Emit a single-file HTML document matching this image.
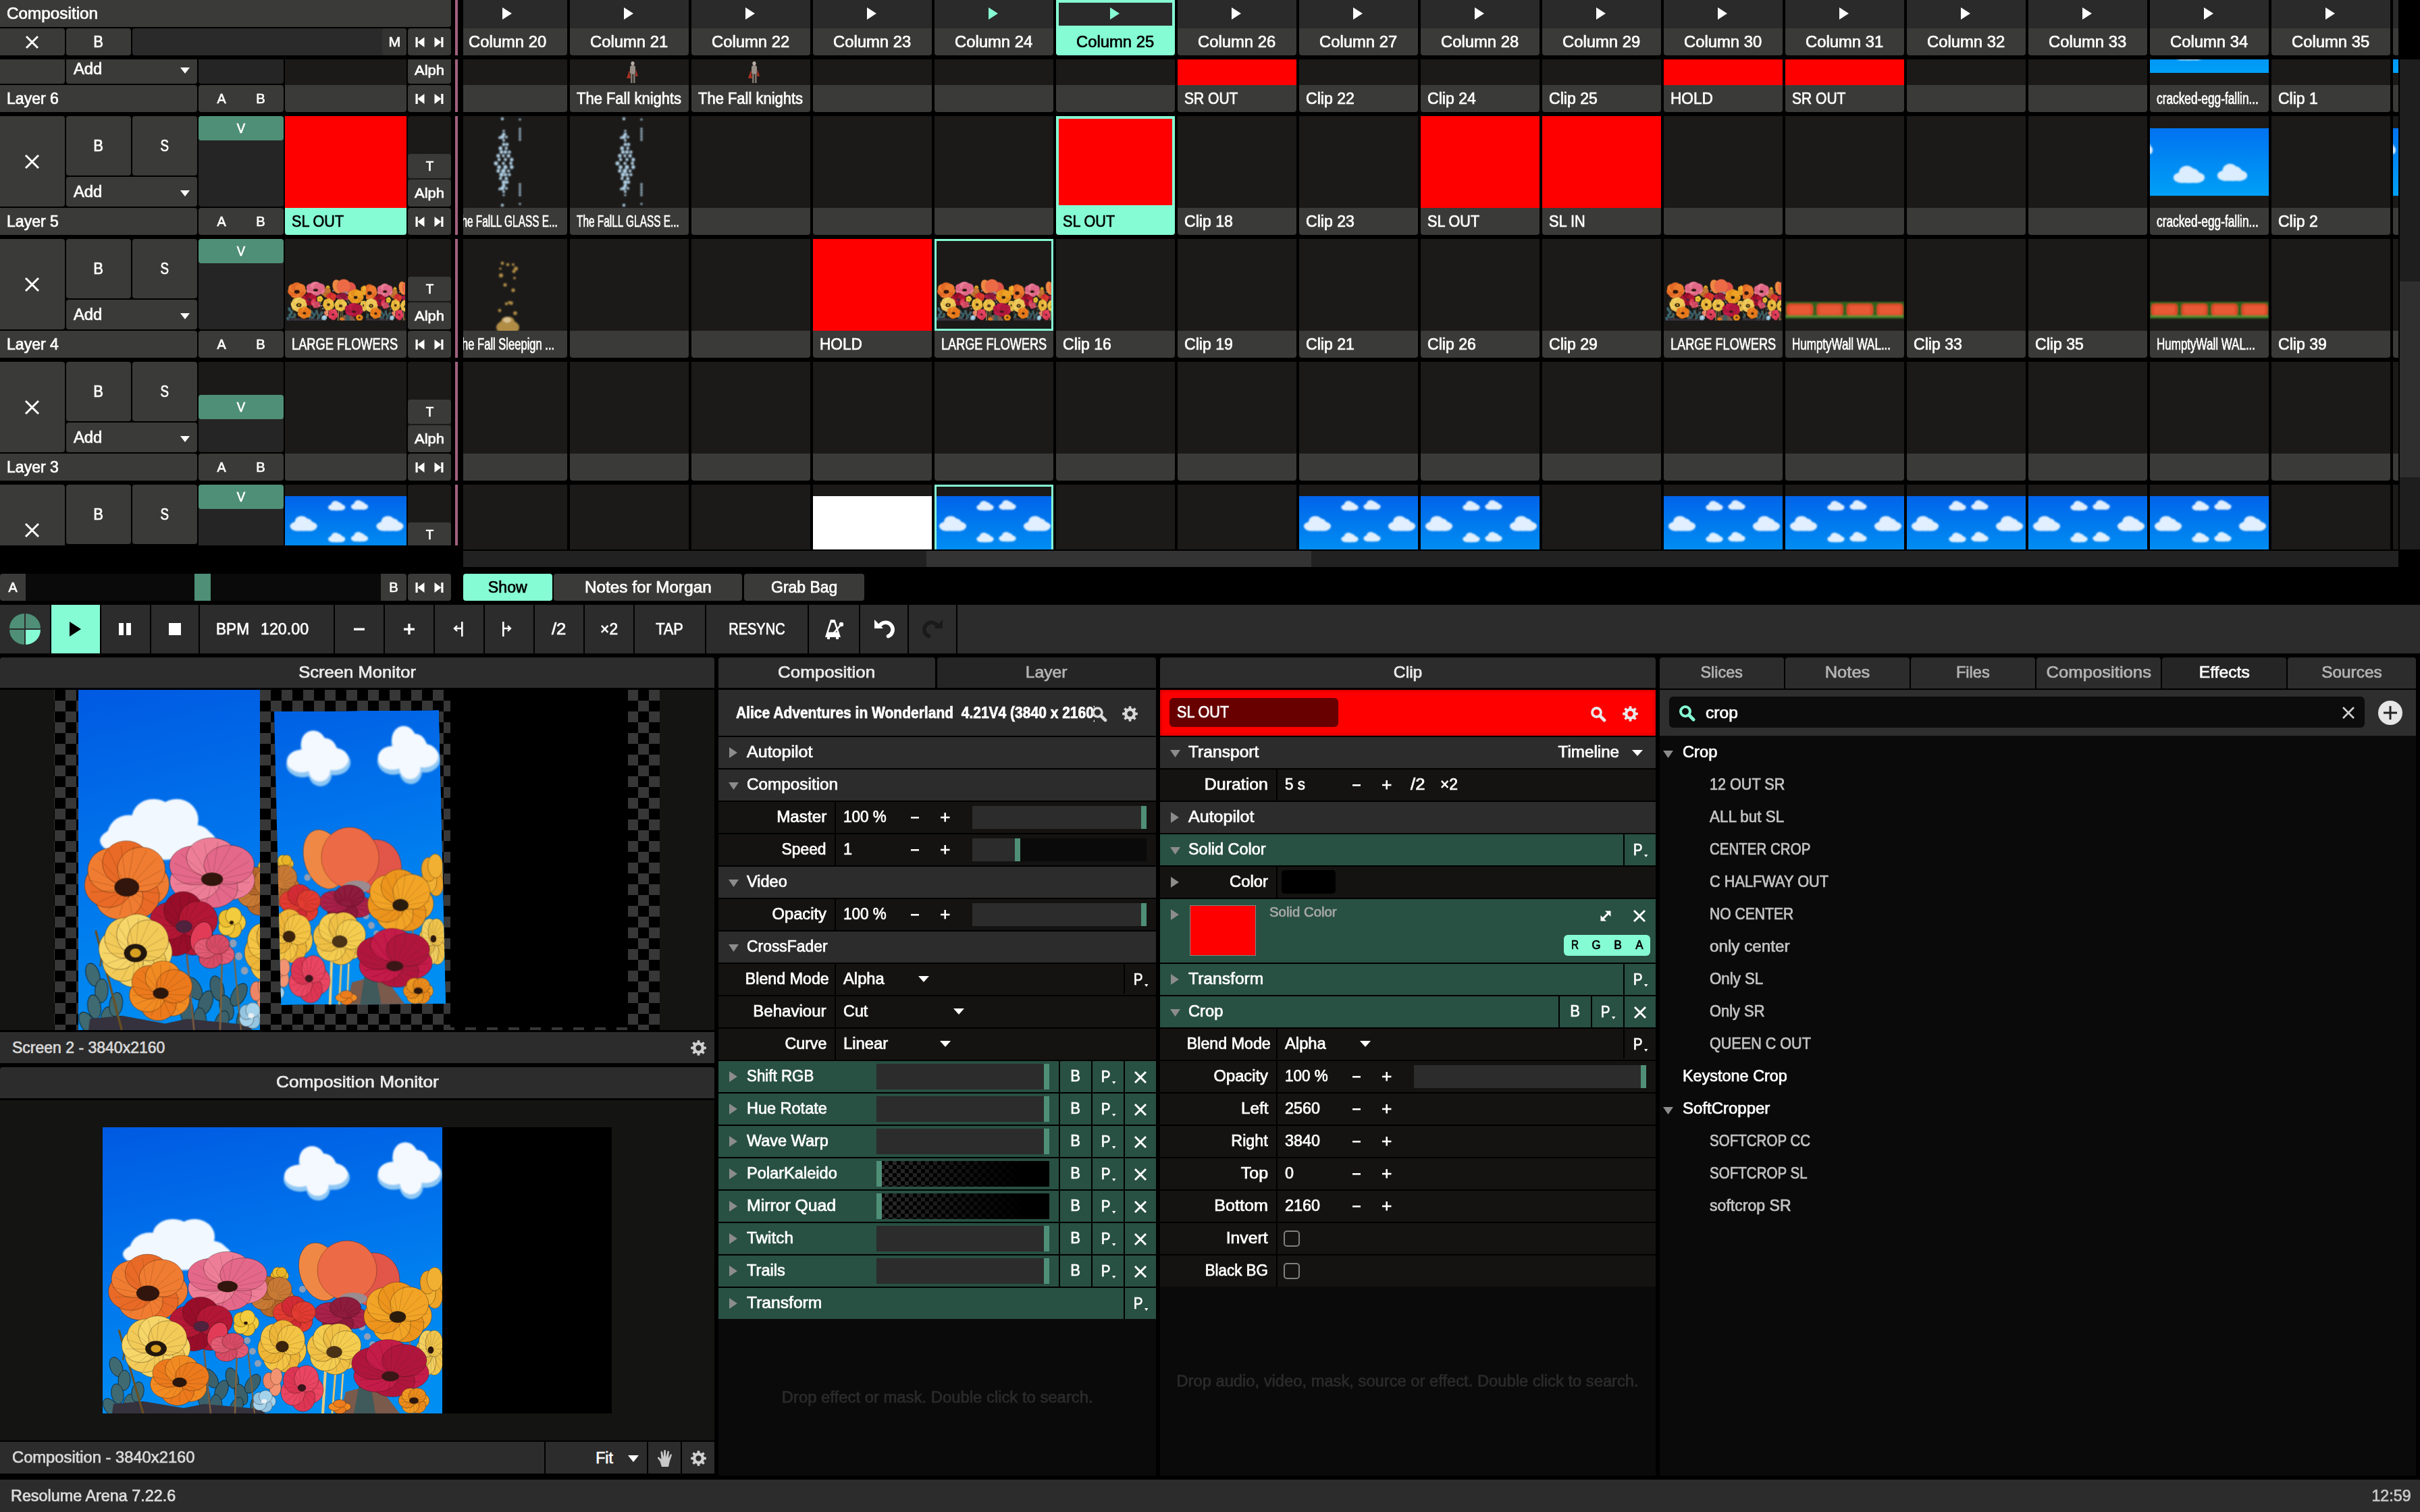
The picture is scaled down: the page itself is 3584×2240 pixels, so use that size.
<!DOCTYPE html><html><head><meta charset="utf-8"><title>Resolume Arena</title><style>

html,body{margin:0;padding:0;background:#000;}
body{width:3584px;height:2240px;position:relative;overflow:hidden;font-family:"Liberation Sans",sans-serif;font-size:23px;color:#fff;-webkit-text-stroke:0.7px currentColor;}
.a{position:absolute;box-sizing:border-box;}
svg{display:block;overflow:hidden}

</style></head><body>

<svg width="0" height="0" style="position:absolute">
<defs>
<linearGradient id="sky" x1="0" y1="0" x2="0" y2="1"><stop offset="0" stop-color="#0064ea"/><stop offset="1" stop-color="#0098f4"/></linearGradient>
<linearGradient id="sky2" x1="0" y1="0" x2="0" y2="1"><stop offset="0" stop-color="#0072f0"/><stop offset="1" stop-color="#00a0f6"/></linearGradient>
<linearGradient id="skyM" x1="0" y1="0" x2="0.25" y2="1"><stop offset="0" stop-color="#005ae2"/><stop offset="0.5" stop-color="#0074ec"/><stop offset="1" stop-color="#008ef2"/></linearGradient>
<filter id="b1" x="-20%" y="-20%" width="140%" height="140%"><feGaussianBlur stdDeviation="1"/></filter>
<filter id="b2" x="-20%" y="-20%" width="140%" height="140%"><feGaussianBlur stdDeviation="2.2"/></filter>
<filter id="b06" x="-20%" y="-20%" width="140%" height="140%"><feGaussianBlur stdDeviation="0.6"/></filter>
<pattern id="chk" width="32" height="32" patternUnits="userSpaceOnUse" x="1" y="0"><rect width="32" height="32" fill="#000"/><rect x="16" width="16" height="16" fill="#373737"/><rect y="16" width="16" height="16" fill="#373737"/></pattern>
<pattern id="chk2" width="12" height="12" patternUnits="userSpaceOnUse"><rect width="12" height="12" fill="#000"/><rect width="6" height="6" fill="#2c2c2c"/><rect x="6" y="6" width="6" height="6" fill="#2c2c2c"/></pattern>
<linearGradient id="fadeblk" x1="0" y1="0" x2="1" y2="0"><stop offset="0" stop-color="#000" stop-opacity="0"/><stop offset="0.85" stop-color="#000" stop-opacity="1"/></linearGradient>
<symbol id="flw" viewBox="0 0 503 424" preserveAspectRatio="none"><g filter="url(#b06)"><g><ellipse cx="20" cy="355" rx="9" ry="15" fill="#3f6a72" stroke="#14242a" stroke-width="0.8" transform="rotate(-20.96282983264869 20 355)"/><ellipse cx="32" cy="375" rx="9" ry="15" fill="#3f6a72" stroke="#14242a" stroke-width="0.8" transform="rotate(3.538338023676147 32 375)"/><ellipse cx="22" cy="395" rx="9" ry="15" fill="#3f6a72" stroke="#14242a" stroke-width="0.8" transform="rotate(-10.403586676153658 22 395)"/><ellipse cx="40" cy="410" rx="9" ry="15" fill="#3f6a72" stroke="#14242a" stroke-width="0.8" transform="rotate(8.313603087695554 40 410)"/><ellipse cx="52" cy="392" rx="9" ry="15" fill="#3f6a72" stroke="#14242a" stroke-width="0.8" transform="rotate(10.057624328644323 52 392)"/><ellipse cx="12" cy="415" rx="9" ry="15" fill="#3f6a72" stroke="#14242a" stroke-width="0.8" transform="rotate(-34.75769126081495 12 415)"/><ellipse cx="160" cy="372" rx="9" ry="16" fill="#3a626c" stroke="#14242a" stroke-width="0.8" transform="rotate(-34.07824059115881 160 372)"/><ellipse cx="176" cy="390" rx="9" ry="16" fill="#3a626c" stroke="#14242a" stroke-width="0.8" transform="rotate(23.6228357467522 176 390)"/><ellipse cx="192" cy="372" rx="9" ry="16" fill="#3a626c" stroke="#14242a" stroke-width="0.8" transform="rotate(-16.845218997039463 192 372)"/><ellipse cx="205" cy="396" rx="9" ry="16" fill="#3a626c" stroke="#14242a" stroke-width="0.8" transform="rotate(-18.596832726731254 205 396)"/><ellipse cx="222" cy="380" rx="9" ry="16" fill="#3a626c" stroke="#14242a" stroke-width="0.8" transform="rotate(34.6951384857324 222 380)"/><ellipse cx="168" cy="412" rx="9" ry="16" fill="#3a626c" stroke="#14242a" stroke-width="0.8" transform="rotate(-2.081554473428646 168 412)"/><ellipse cx="198" cy="415" rx="9" ry="16" fill="#3a626c" stroke="#14242a" stroke-width="0.8" transform="rotate(23.55230158920721 198 415)"/><ellipse cx="150" cy="400" rx="9" ry="16" fill="#3a626c" stroke="#14242a" stroke-width="0.8" transform="rotate(-1.6552753910465512 150 400)"/><ellipse cx="228" cy="412" rx="9" ry="16" fill="#3a626c" stroke="#14242a" stroke-width="0.8" transform="rotate(9.734769838091339 228 412)"/><path d="M14 424 L16 410 L60 406 L120 416 L150 410 L240 418 L240 424 Z" fill="#34303c"/><path d="M24 300 L60 424" stroke="#6a5020" stroke-width="3" fill="none"/><path d="M34 318 L30 345" stroke="#6a5020" stroke-width="2" fill="none"/><path d="M150 330 L160 424" stroke="#7a5a40" stroke-width="2.5" fill="none"/><path d="M200 300 L196 424" stroke="#80603c" stroke-width="2.5" fill="none"/><path d="M215 330 L225 424" stroke="#80603c" stroke-width="2" fill="none"/><path d="M330 360 L326 424" stroke="#e8cc80" stroke-width="4" fill="none"/><path d="M345 360 L340 424" stroke="#e0c070" stroke-width="3" fill="none"/><path d="M356 365 L352 424" stroke="#e8cc80" stroke-width="2.5" fill="none"/><path d="M452 300 L470 424" stroke="#907060" stroke-width="2.5" fill="none"/><path d="M352 424 L360 392 L392 384 L420 398 L440 424 Z" fill="#7a5a4c"/><path d="M372 424 L380 380 L396 376 L404 424 Z" fill="#3f5a5c"/><circle cx="208" cy="300" r="5" fill="#b0a4a8" opacity="0.8"/><circle cx="214" cy="316" r="5" fill="#b0a4a8" opacity="0.8"/><circle cx="222" cy="332" r="5" fill="#b0a4a8" opacity="0.8"/><circle cx="230" cy="350" r="5" fill="#b0a4a8" opacity="0.8"/><circle cx="392" cy="310" r="5" fill="#b0a4a8" opacity="0.8"/><circle cx="384" cy="296" r="5" fill="#b0a4a8" opacity="0.8"/><circle cx="400" cy="322" r="5" fill="#b0a4a8" opacity="0.8"/><circle cx="296" cy="240" r="5" fill="#b0a4a8" opacity="0.8"/><g stroke="#2a140c" stroke-width="0.7" stroke-opacity="0.55"><ellipse cx="268.0" cy="220.0" rx="7.5" ry="7.5" fill="#f0c030"/><ellipse cx="265.0" cy="225.2" rx="7.5" ry="7.5" fill="#e8b428"/><ellipse cx="259.0" cy="225.2" rx="7.5" ry="7.5" fill="#f0c030"/><ellipse cx="256.0" cy="220.0" rx="7.5" ry="7.5" fill="#e8b428"/><ellipse cx="259.0" cy="214.8" rx="7.5" ry="7.5" fill="#f0c030"/><ellipse cx="265.0" cy="214.8" rx="7.5" ry="7.5" fill="#e8b428"/></g><g stroke="#2a140c" stroke-width="0.7" stroke-opacity="0.55"><ellipse cx="265.6" cy="255.4" rx="18.6" ry="17.4" fill="#c87a34"/><ellipse cx="250.7" cy="263.7" rx="18.6" ry="17.4" fill="#b86a2c"/><ellipse cx="237.7" cy="253.1" rx="18.6" ry="17.4" fill="#c87a34"/><ellipse cx="244.4" cy="238.2" rx="18.6" ry="17.4" fill="#b86a2c"/><ellipse cx="261.6" cy="239.6" rx="18.6" ry="17.4" fill="#c87a34"/></g><path d="M257.9 253.6 L276.8 264.9 M256.3 255.2 L269.9 271.9 M254.1 256.3 L260.8 276.3 M251.7 256.6 L250.6 277.6 M249.3 256.1 L240.7 275.5 M247.2 254.9 L232.1 270.3 M245.7 253.0 L225.8 262.7 M245.0 250.8 L222.8 253.5 M245.1 248.6 L223.3 244.0 M246.1 246.4 L227.2 235.1 M247.7 244.8 L234.1 228.1 M249.9 243.7 L243.2 223.7 M252.3 243.4 L253.4 222.4 M254.7 243.9 L263.3 224.5 M256.8 245.1 L271.9 229.7 M258.3 247.0 L278.2 237.3 M259.0 249.2 L281.2 246.5 M258.9 251.4 L280.7 256.0 " stroke="#2a140c" stroke-width="0.6" stroke-opacity="0.3" fill="none"/><g stroke="#2a140c" stroke-width="0.7" stroke-opacity="0.55"><ellipse cx="498.2" cy="238.0" rx="11.6" ry="17.4" fill="#f2b030"/><ellipse cx="491.8" cy="251.1" rx="11.6" ry="17.4" fill="#eca228"/><ellipse cx="481.6" cy="246.1" rx="11.6" ry="17.4" fill="#f2b030"/><ellipse cx="481.6" cy="229.9" rx="11.6" ry="17.4" fill="#eca228"/><ellipse cx="491.8" cy="224.9" rx="11.6" ry="17.4" fill="#f2b030"/></g><g stroke="#2a140c" stroke-width="0.7" stroke-opacity="0.55"><ellipse cx="496.1" cy="334.0" rx="12.8" ry="19.7" fill="#f4d060"/><ellipse cx="491.1" cy="347.5" rx="12.8" ry="19.7" fill="#efc44c"/><ellipse cx="480.9" cy="347.5" rx="12.8" ry="19.7" fill="#f4d060"/><ellipse cx="475.9" cy="334.0" rx="12.8" ry="19.7" fill="#efc44c"/><ellipse cx="480.9" cy="320.5" rx="12.8" ry="19.7" fill="#f4d060"/><ellipse cx="491.1" cy="320.5" rx="12.8" ry="19.7" fill="#efc44c"/></g><path d="M490.8 331.3 L505.9 339.3 M490.2 333.7 L503.6 349.5 M489.1 335.7 L499.1 357.9 M487.7 337.0 L493.0 363.3 M486.0 337.5 L486.1 365.3 M484.4 337.0 L479.2 363.4 M482.9 335.8 L473.1 358.1 M481.8 333.8 L468.5 349.8 M481.2 331.3 L466.1 339.6 M481.2 328.7 L466.1 328.7 M481.8 326.3 L468.4 318.5 M482.9 324.3 L472.9 310.1 M484.3 323.0 L479.0 304.7 M486.0 322.5 L485.9 302.7 M487.6 323.0 L492.8 304.6 M489.1 324.2 L498.9 309.9 M490.2 326.2 L503.5 318.2 M490.8 328.7 L505.9 328.4 " stroke="#2a140c" stroke-width="0.6" stroke-opacity="0.3" fill="none"/><ellipse cx="486.0" cy="330.0" rx="4.4" ry="5.4" fill="#2a1808"/><g stroke="#2a140c" stroke-width="0.7" stroke-opacity="0.5"><ellipse cx="402" cy="226" rx="38" ry="40" fill="#e2544a"/><ellipse cx="322" cy="214" rx="30" ry="44" fill="#f08844" transform="rotate(-18 322 214)"/><ellipse cx="362" cy="212" rx="44" ry="44" fill="#ec6a44"/></g><ellipse cx="371" cy="254" rx="21" ry="9" fill="#9a8c90"/><g stroke="#2a140c" stroke-width="0.7" stroke-opacity="0.55"><ellipse cx="371.6" cy="282.7" rx="23.2" ry="15.7" fill="#a8204a"/><ellipse cx="348.6" cy="290.9" rx="23.2" ry="15.7" fill="#8e1a3c"/><ellipse cx="336.4" cy="275.3" rx="23.2" ry="15.7" fill="#a8204a"/><ellipse cx="359.4" cy="267.1" rx="23.2" ry="15.7" fill="#8e1a3c"/></g><path d="M361.8 281.7 L386.8 290.2 M360.0 283.3 L379.1 297.1 M357.4 284.5 L368.4 301.9 M354.5 284.9 L356.0 303.8 M351.4 284.7 L343.3 302.8 M348.7 283.7 L331.9 298.9 M346.6 282.2 L323.2 292.6 M345.4 280.3 L318.2 284.6 M345.3 278.3 L317.5 276.0 M346.2 276.3 L321.2 267.8 M348.0 274.7 L328.9 260.9 M350.6 273.5 L339.6 256.1 M353.5 273.1 L352.0 254.2 M356.6 273.3 L364.7 255.2 M359.3 274.3 L376.1 259.1 M361.4 275.8 L384.8 265.4 M362.6 277.7 L389.8 273.4 M362.7 279.7 L390.5 282.0 " stroke="#2a140c" stroke-width="0.6" stroke-opacity="0.3" fill="none"/><g stroke="#2a140c" stroke-width="0.7" stroke-opacity="0.55"><ellipse cx="292.9" cy="287.7" rx="18.0" ry="15.7" fill="#e23a30"/><ellipse cx="276.1" cy="288.3" rx="18.0" ry="15.7" fill="#d42c34"/><ellipse cx="270.3" cy="274.7" rx="18.0" ry="15.7" fill="#e23a30"/><ellipse cx="283.4" cy="265.6" rx="18.0" ry="15.7" fill="#d42c34"/><ellipse cx="297.4" cy="273.7" rx="18.0" ry="15.7" fill="#e23a30"/></g><path d="M287.3 283.2 L297.7 299.8 M285.0 283.9 L288.3 302.6 M282.7 283.8 L278.4 302.4 M280.5 283.1 L269.2 299.2 M278.7 281.7 L261.7 293.5 M277.5 279.9 L257.0 286.0 M277.2 277.9 L255.5 277.4 M277.6 275.8 L257.4 269.0 M278.9 274.1 L262.6 261.6 M280.7 272.8 L270.3 256.2 M283.0 272.1 L279.7 253.4 M285.3 272.2 L289.6 253.6 M287.5 272.9 L298.8 256.8 M289.3 274.3 L306.3 262.5 M290.5 276.1 L311.0 270.0 M290.8 278.1 L312.5 278.6 M290.4 280.2 L310.6 287.0 M289.1 281.9 L305.4 294.4 " stroke="#2a140c" stroke-width="0.6" stroke-opacity="0.3" fill="none"/><g stroke="#2a140c" stroke-width="0.7" stroke-opacity="0.55"><ellipse cx="459.1" cy="279.0" rx="28.4" ry="25.5" fill="#f2a426"/><ellipse cx="447.3" cy="293.0" rx="28.4" ry="25.5" fill="#ec941e"/><ellipse cx="427.7" cy="293.4" rx="28.4" ry="25.5" fill="#f2a426"/><ellipse cx="415.2" cy="280.0" rx="28.4" ry="25.5" fill="#ec941e"/><ellipse cx="419.0" cy="262.8" rx="28.4" ry="25.5" fill="#f2a426"/><ellipse cx="436.5" cy="254.8" rx="28.4" ry="25.5" fill="#ec941e"/><ellipse cx="454.3" cy="262.0" rx="28.4" ry="25.5" fill="#f2a426"/></g><path d="M447.1 284.5 L479.0 289.6 M445.1 287.4 L470.9 301.7 M442.2 289.5 L458.7 310.5 M438.6 290.6 L443.9 315.0 M434.9 290.5 L428.2 314.7 M431.4 289.3 L413.6 309.6 M428.6 287.1 L401.9 300.4 M426.8 284.1 L394.3 288.0 M426.2 280.8 L391.9 274.2 M426.9 277.5 L395.0 260.4 M428.9 274.6 L403.1 248.3 M431.8 272.5 L415.3 239.5 M435.4 271.4 L430.1 235.0 M439.1 271.5 L445.8 235.3 M442.6 272.7 L460.4 240.4 M445.4 274.9 L472.1 249.6 M447.2 277.9 L479.7 262.0 M447.8 281.2 L482.1 275.8 " stroke="#2a140c" stroke-width="0.6" stroke-opacity="0.3" fill="none"/><ellipse cx="437.0" cy="281.0" rx="12.2" ry="8.8" fill="#2c1c10"/><g stroke="#2a140c" stroke-width="0.7" stroke-opacity="0.55"><ellipse cx="209.2" cy="237.3" rx="34.8" ry="24.4" fill="#ee7e98"/><ellipse cx="185.7" cy="247.3" rx="34.8" ry="24.4" fill="#e4688a"/><ellipse cx="161.4" cy="238.1" rx="34.8" ry="24.4" fill="#ee7e98"/><ellipse cx="160.8" cy="218.7" rx="34.8" ry="24.4" fill="#e4688a"/><ellipse cx="184.3" cy="208.7" rx="34.8" ry="24.4" fill="#ee7e98"/><ellipse cx="208.6" cy="217.9" rx="34.8" ry="24.4" fill="#e4688a"/></g><path d="M195.3 241.7 L228.3 252.0 M191.9 243.9 L213.9 260.9 M187.7 245.1 L196.1 265.8 M183.1 245.1 L176.9 266.2 M178.7 244.1 L158.8 262.0 M175.1 242.1 L143.7 253.7 M172.7 239.4 L133.7 242.2 M171.8 236.3 L129.8 229.1 M172.5 233.1 L132.6 215.8 M174.7 230.3 L141.7 204.0 M178.1 228.1 L156.1 195.1 M182.3 226.9 L173.9 190.2 M186.9 226.9 L193.1 189.8 M191.3 227.9 L211.2 194.0 M194.9 229.9 L226.3 202.3 M197.3 232.6 L236.3 213.8 M198.2 235.7 L240.2 226.9 M197.5 238.9 L237.4 240.2 " stroke="#2a140c" stroke-width="0.6" stroke-opacity="0.3" fill="none"/><ellipse cx="185.0" cy="236.0" rx="15.0" ry="8.4" fill="#30180c"/><g stroke="#2a140c" stroke-width="0.7" stroke-opacity="0.55"><ellipse cx="92.7" cy="242.4" rx="33.1" ry="27.8" fill="#f07c30"/><ellipse cx="78.9" cy="257.7" rx="33.1" ry="27.8" fill="#e86a26"/><ellipse cx="56.2" cy="258.1" rx="33.1" ry="27.8" fill="#f07c30"/><ellipse cx="41.6" cy="243.4" rx="33.1" ry="27.8" fill="#e86a26"/><ellipse cx="46.1" cy="224.7" rx="33.1" ry="27.8" fill="#f07c30"/><ellipse cx="66.4" cy="215.9" rx="33.1" ry="27.8" fill="#e86a26"/><ellipse cx="87.1" cy="223.8" rx="33.1" ry="27.8" fill="#f07c30"/></g><path d="M78.7 249.8 L115.9 254.0 M76.4 253.0 L106.5 267.1 M73.0 255.3 L92.3 276.7 M68.9 256.4 L75.0 281.6 M64.6 256.4 L56.8 281.3 M60.5 255.0 L39.8 275.8 M57.2 252.6 L26.1 265.7 M55.1 249.4 L17.4 252.2 M54.5 245.8 L14.6 237.1 M55.3 242.2 L18.1 222.0 M57.6 239.0 L27.5 208.9 M61.0 236.7 L41.7 199.3 M65.1 235.6 L59.0 194.4 M69.4 235.6 L77.2 194.7 M73.5 237.0 L94.2 200.2 M76.8 239.4 L107.9 210.3 M78.9 242.6 L116.6 223.8 M79.5 246.2 L119.4 238.9 " stroke="#2a140c" stroke-width="0.6" stroke-opacity="0.3" fill="none"/><ellipse cx="67.0" cy="246.0" rx="17.1" ry="11.5" fill="#30180c"/><g stroke="#2a140c" stroke-width="0.7" stroke-opacity="0.55"><ellipse cx="159.2" cy="307.4" rx="26.7" ry="23.2" fill="#b41434"/><ellipse cx="134.3" cy="308.3" rx="26.7" ry="23.2" fill="#98102c"/><ellipse cx="125.6" cy="288.1" rx="26.7" ry="23.2" fill="#b41434"/><ellipse cx="145.1" cy="274.6" rx="26.7" ry="23.2" fill="#98102c"/><ellipse cx="165.8" cy="286.6" rx="26.7" ry="23.2" fill="#b41434"/></g><path d="M150.9 302.7 L166.3 325.3 M147.5 303.7 L152.4 329.4 M144.0 303.6 L137.7 329.1 M140.7 302.5 L124.0 324.4 M138.1 300.5 L113.0 316.0 M136.4 297.8 L105.9 304.8 M135.9 294.8 L103.7 292.2 M136.6 291.8 L106.6 279.6 M138.4 289.2 L114.2 268.7 M141.1 287.3 L125.7 260.7 M144.5 286.3 L139.6 256.6 M148.0 286.4 L154.3 256.9 M151.3 287.5 L168.0 261.6 M153.9 289.5 L179.0 270.0 M155.6 292.2 L186.1 281.2 M156.1 295.2 L188.3 293.8 M155.4 298.2 L185.4 306.4 M153.6 300.8 L177.8 317.3 " stroke="#2a140c" stroke-width="0.6" stroke-opacity="0.3" fill="none"/><ellipse cx="146.0" cy="295.0" rx="11.5" ry="8.0" fill="#50203c"/><ellipse cx="170" cy="308" rx="14" ry="20" fill="#e23a58" stroke="#2a140c" stroke-width="0.6" transform="rotate(25 170 308)"/><g stroke="#2a140c" stroke-width="0.7" stroke-opacity="0.55"><ellipse cx="220.7" cy="290.0" rx="11.0" ry="11.0" fill="#f2cc3c"/><ellipse cx="214.7" cy="298.3" rx="11.0" ry="11.0" fill="#ecc030"/><ellipse cx="204.9" cy="295.1" rx="11.0" ry="11.0" fill="#f2cc3c"/><ellipse cx="204.9" cy="284.9" rx="11.0" ry="11.0" fill="#ecc030"/><ellipse cx="214.7" cy="281.7" rx="11.0" ry="11.0" fill="#f2cc3c"/></g><ellipse cx="212.0" cy="290.0" rx="2.8" ry="2.3" fill="#2a1808"/><g stroke="#2a140c" stroke-width="0.7" stroke-opacity="0.55"><ellipse cx="199.9" cy="329.8" rx="16.2" ry="12.2" fill="#e45c74"/><ellipse cx="183.0" cy="334.9" rx="16.2" ry="12.2" fill="#d84c66"/><ellipse cx="176.1" cy="322.2" rx="16.2" ry="12.2" fill="#e45c74"/><ellipse cx="193.0" cy="317.1" rx="16.2" ry="12.2" fill="#d84c66"/></g><path d="M193.2 328.5 L209.7 336.4 M191.7 329.7 L203.6 341.4 M189.8 330.4 L195.7 344.4 M187.7 330.6 L186.8 345.3 M185.6 330.3 L178.1 343.8 M183.8 329.4 L170.5 340.2 M182.5 328.1 L165.1 334.9 M181.9 326.6 L162.5 328.5 M182.0 325.0 L162.9 321.8 M182.8 323.5 L166.3 315.6 M184.3 322.3 L172.4 310.6 M186.2 321.6 L180.3 307.6 M188.3 321.4 L189.2 306.7 M190.4 321.7 L197.9 308.2 M192.2 322.6 L205.5 311.8 M193.5 323.9 L210.9 317.1 M194.1 325.4 L213.5 323.5 M194.0 327.0 L213.1 330.2 " stroke="#2a140c" stroke-width="0.6" stroke-opacity="0.3" fill="none"/><g stroke="#2a140c" stroke-width="0.7" stroke-opacity="0.55"><ellipse cx="101.4" cy="327.0" rx="28.4" ry="25.5" fill="#f6d668"/><ellipse cx="93.3" cy="340.7" rx="28.4" ry="25.5" fill="#f2ca58"/><ellipse cx="76.7" cy="345.1" rx="28.4" ry="25.5" fill="#f6d668"/><ellipse cx="61.6" cy="337.8" rx="28.4" ry="25.5" fill="#f2ca58"/><ellipse cx="56.6" cy="323.0" rx="28.4" ry="25.5" fill="#f6d668"/><ellipse cx="64.7" cy="309.3" rx="28.4" ry="25.5" fill="#f2ca58"/><ellipse cx="81.3" cy="304.9" rx="28.4" ry="25.5" fill="#f6d668"/><ellipse cx="96.4" cy="312.2" rx="28.4" ry="25.5" fill="#f2ca58"/></g><path d="M89.4 330.6 L122.4 335.8 M87.8 333.6 L115.7 348.5 M85.1 336.0 L104.6 358.3 M81.7 337.4 L90.3 364.2 M78.0 337.6 L74.7 365.3 M74.4 336.7 L59.6 361.5 M71.3 334.8 L46.9 353.4 M69.2 332.0 L38.0 341.8 M68.3 328.8 L34.1 328.2 M68.6 325.4 L35.6 314.2 M70.2 322.4 L42.3 301.5 M72.9 320.0 L53.4 291.7 M76.3 318.6 L67.7 285.8 M80.0 318.4 L83.3 284.7 M83.6 319.3 L98.4 288.5 M86.7 321.2 L111.1 296.6 M88.8 324.0 L120.0 308.2 M89.7 327.2 L123.9 321.8 " stroke="#2a140c" stroke-width="0.6" stroke-opacity="0.3" fill="none"/><ellipse cx="79.0" cy="328.0" rx="15.9" ry="11.4" fill="#20140c"/><ellipse cx="79.0" cy="328.0" rx="7.6" ry="5.7" fill="#d8a020"/><g stroke="#2a140c" stroke-width="0.7" stroke-opacity="0.55"><ellipse cx="281.4" cy="330.2" rx="20.3" ry="22.0" fill="#f4c444"/><ellipse cx="271.9" cy="341.3" rx="20.3" ry="22.0" fill="#eeb638"/><ellipse cx="257.9" cy="340.1" rx="20.3" ry="22.0" fill="#f4c444"/><ellipse cx="250.1" cy="327.6" rx="20.3" ry="22.0" fill="#eeb638"/><ellipse cx="254.2" cy="313.1" rx="20.3" ry="22.0" fill="#f4c444"/><ellipse cx="267.2" cy="307.6" rx="20.3" ry="22.0" fill="#eeb638"/><ellipse cx="279.3" cy="315.2" rx="20.3" ry="22.0" fill="#f4c444"/></g><path d="M272.9 328.8 L294.7 340.8 M271.3 331.1 L288.0 350.5 M269.0 332.7 L278.6 357.2 M266.4 333.3 L267.7 359.9 M263.8 333.0 L256.6 358.4 M261.4 331.7 L246.7 352.9 M259.5 329.6 L239.0 344.1 M258.5 326.9 L234.6 332.9 M258.4 324.0 L234.0 320.8 M259.1 321.2 L237.3 309.2 M260.7 318.9 L244.0 299.5 M263.0 317.3 L253.4 292.8 M265.6 316.7 L264.3 290.1 M268.2 317.0 L275.4 291.6 M270.6 318.3 L285.3 297.1 M272.5 320.4 L293.0 305.9 M273.5 323.1 L297.4 317.1 M273.6 326.0 L298.0 329.2 " stroke="#2a140c" stroke-width="0.6" stroke-opacity="0.3" fill="none"/><ellipse cx="266.0" cy="325.0" rx="9.6" ry="8.4" fill="#3a2410"/><g stroke="#2a140c" stroke-width="0.7" stroke-opacity="0.55"><ellipse cx="357.8" cy="337.6" rx="22.6" ry="21.5" fill="#f4cc50"/><ellipse cx="344.3" cy="345.0" rx="22.6" ry="21.5" fill="#efc044"/><ellipse cx="329.8" cy="339.6" rx="22.6" ry="21.5" fill="#f4cc50"/><ellipse cx="325.3" cy="325.4" rx="22.6" ry="21.5" fill="#efc044"/><ellipse cx="334.1" cy="313.2" rx="22.6" ry="21.5" fill="#f4cc50"/><ellipse cx="349.6" cy="312.2" rx="22.6" ry="21.5" fill="#efc044"/><ellipse cx="360.2" cy="323.0" rx="22.6" ry="21.5" fill="#f4cc50"/></g><path d="M349.2 338.7 L368.8 351.7 M346.7 340.3 L358.7 358.6 M343.9 341.1 L346.7 361.9 M340.9 340.9 L334.2 361.0 M338.2 339.7 L322.9 356.2 M336.0 337.8 L313.9 348.0 M334.7 335.2 L308.5 337.3 M334.4 332.4 L307.2 325.6 M335.2 329.7 L310.3 314.1 M336.8 327.3 L317.2 304.3 M339.3 325.7 L327.3 297.4 M342.1 324.9 L339.3 294.1 M345.1 325.1 L351.8 295.0 M347.8 326.3 L363.1 299.8 M350.0 328.2 L372.1 308.0 M351.3 330.8 L377.5 318.7 M351.6 333.6 L378.8 330.4 M350.8 336.3 L375.7 341.9 " stroke="#2a140c" stroke-width="0.6" stroke-opacity="0.3" fill="none"/><ellipse cx="343.0" cy="333.0" rx="11.7" ry="8.9" fill="#4a3018"/><g stroke="#2a140c" stroke-width="0.7" stroke-opacity="0.55"><ellipse cx="450.2" cy="364.3" rx="33.1" ry="23.8" fill="#c41a4a"/><ellipse cx="429.2" cy="375.7" rx="33.1" ry="23.8" fill="#b0143e"/><ellipse cx="405.1" cy="368.4" rx="33.1" ry="23.8" fill="#c41a4a"/><ellipse cx="401.8" cy="349.7" rx="33.1" ry="23.8" fill="#b0143e"/><ellipse cx="422.8" cy="338.3" rx="33.1" ry="23.8" fill="#c41a4a"/><ellipse cx="446.9" cy="345.6" rx="33.1" ry="23.8" fill="#b0143e"/></g><path d="M436.6 373.9 L470.1 377.4 M433.6 376.2 L457.8 387.0 M429.7 377.6 L441.6 393.0 M425.4 378.0 L423.6 394.7 M421.2 377.3 L405.8 391.8 M417.5 375.6 L390.5 384.7 M414.9 373.1 L379.4 374.3 M413.6 370.2 L374.0 361.8 M413.8 367.0 L374.8 348.7 M415.4 364.1 L381.9 336.6 M418.4 361.8 L394.2 327.0 M422.3 360.4 L410.4 321.0 M426.6 360.0 L428.4 319.3 M430.8 360.7 L446.2 322.2 M434.5 362.4 L461.5 329.3 M437.1 364.9 L472.6 339.7 M438.4 367.8 L478.0 352.2 M438.2 371.0 L477.2 365.3 " stroke="#2a140c" stroke-width="0.6" stroke-opacity="0.3" fill="none"/><ellipse cx="426.0" cy="369.0" rx="12.8" ry="7.4" fill="#3a1818"/><g stroke="#2a140c" stroke-width="0.7" stroke-opacity="0.55"><ellipse cx="129.1" cy="385.7" rx="24.9" ry="20.9" fill="#f28a22"/><ellipse cx="110.5" cy="391.3" rx="24.9" ry="20.9" fill="#ec7a1c"/><ellipse cx="95.4" cy="380.6" rx="24.9" ry="20.9" fill="#f28a22"/><ellipse cx="98.9" cy="364.3" rx="24.9" ry="20.9" fill="#ec7a1c"/><ellipse cx="117.5" cy="358.7" rx="24.9" ry="20.9" fill="#f28a22"/><ellipse cx="132.6" cy="369.4" rx="24.9" ry="20.9" fill="#ec7a1c"/></g><path d="M120.1 384.1 L139.5 400.3 M117.3 385.4 L127.6 406.1 M114.0 385.9 L114.1 408.1 M110.8 385.4 L100.6 406.2 M107.9 384.1 L88.7 400.4 M105.8 382.0 L79.8 391.6 M104.7 379.4 L75.1 380.8 M104.7 376.6 L75.0 369.3 M105.8 374.1 L79.7 358.5 M107.9 371.9 L88.5 349.7 M110.7 370.6 L100.4 343.9 M114.0 370.1 L113.9 341.9 M117.2 370.6 L127.4 343.8 M120.1 371.9 L139.3 349.6 M122.2 374.0 L148.2 358.4 M123.3 376.6 L152.9 369.2 M123.3 379.4 L153.0 380.7 M122.2 381.9 L148.3 391.5 " stroke="#2a140c" stroke-width="0.6" stroke-opacity="0.3" fill="none"/><ellipse cx="114.0" cy="378.0" rx="10.8" ry="7.2" fill="#2a180c"/><g stroke="#2a140c" stroke-width="0.7" stroke-opacity="0.55"><ellipse cx="309.0" cy="389.1" rx="18.0" ry="19.7" fill="#ea4462"/><ellipse cx="296.6" cy="401.5" rx="18.0" ry="19.7" fill="#de3654"/><ellipse cx="282.0" cy="392.5" rx="18.0" ry="19.7" fill="#ea4462"/><ellipse cx="285.4" cy="374.5" rx="18.0" ry="19.7" fill="#de3654"/><ellipse cx="302.0" cy="372.4" rx="18.0" ry="19.7" fill="#ea4462"/></g><path d="M301.4 388.7 L321.6 397.3 M300.1 390.9 L316.5 406.6 M298.3 392.6 L308.7 413.4 M296.0 393.4 L299.4 416.9 M293.7 393.3 L289.5 416.7 M291.5 392.4 L280.2 412.8 M289.7 390.7 L272.8 405.6 M288.5 388.4 L268.0 396.1 M288.2 385.8 L266.5 385.3 M288.6 383.3 L268.4 374.7 M289.9 381.1 L273.5 365.4 M291.7 379.4 L281.3 358.6 M294.0 378.6 L290.6 355.1 M296.3 378.7 L300.5 355.3 M298.5 379.6 L309.8 359.2 M300.3 381.3 L317.2 366.4 M301.5 383.6 L322.0 375.9 M301.8 386.2 L323.5 386.7 " stroke="#2a140c" stroke-width="0.6" stroke-opacity="0.3" fill="none"/><ellipse cx="295.0" cy="386.0" rx="6.2" ry="5.4" fill="#38141c"/><g stroke="#2a140c" stroke-width="0.7" stroke-opacity="0.55"><ellipse cx="255.5" cy="386.0" rx="8.7" ry="12.2" fill="#f29472"/><ellipse cx="246.2" cy="375.5" rx="8.7" ry="12.2" fill="#ec8666"/><ellipse cx="257.3" cy="369.5" rx="8.7" ry="12.2" fill="#f29472"/></g><g stroke="#2a140c" stroke-width="0.7" stroke-opacity="0.55"><ellipse cx="471.1" cy="405.0" rx="12.8" ry="11.0" fill="#f29a22"/><ellipse cx="466.1" cy="412.6" rx="12.8" ry="11.0" fill="#ec8c1c"/><ellipse cx="455.9" cy="412.6" rx="12.8" ry="11.0" fill="#f29a22"/><ellipse cx="450.9" cy="405.0" rx="12.8" ry="11.0" fill="#ec8c1c"/><ellipse cx="455.9" cy="397.4" rx="12.8" ry="11.0" fill="#f29a22"/><ellipse cx="466.1" cy="397.4" rx="12.8" ry="11.0" fill="#ec8c1c"/></g><path d="M465.8 405.7 L480.9 408.0 M465.2 407.1 L478.6 413.7 M464.1 408.2 L474.1 418.3 M462.7 408.9 L468.0 421.4 M461.0 409.2 L461.1 422.5 M459.4 408.9 L454.2 421.5 M457.9 408.2 L448.1 418.4 M456.8 407.1 L443.5 413.8 M456.2 405.7 L441.1 408.1 M456.2 404.3 L441.1 402.0 M456.8 402.9 L443.4 396.3 M457.9 401.8 L447.9 391.7 M459.3 401.1 L454.0 388.6 M461.0 400.8 L460.9 387.5 M462.6 401.1 L467.8 388.5 M464.1 401.8 L473.9 391.6 M465.2 402.9 L478.5 396.2 M465.8 404.3 L480.9 401.9 " stroke="#2a140c" stroke-width="0.6" stroke-opacity="0.3" fill="none"/><ellipse cx="461.0" cy="405.0" rx="6.9" ry="4.8" fill="#2a180c"/><g stroke="#2a140c" stroke-width="0.7" stroke-opacity="0.55"><ellipse cx="246.8" cy="406.0" rx="9.9" ry="9.3" fill="#a4d2ea"/><ellipse cx="241.4" cy="413.0" rx="9.9" ry="9.3" fill="#94c4e0"/><ellipse cx="232.7" cy="410.3" rx="9.9" ry="9.3" fill="#a4d2ea"/><ellipse cx="232.7" cy="401.7" rx="9.9" ry="9.3" fill="#94c4e0"/><ellipse cx="241.4" cy="399.0" rx="9.9" ry="9.3" fill="#a4d2ea"/></g><ellipse cx="239.0" cy="406.0" rx="4.2" ry="3.2" fill="#e8f0f4"/><g stroke="#2a140c" stroke-width="0.7" stroke-opacity="0.55"><ellipse cx="358.4" cy="414.0" rx="9.3" ry="5.8" fill="#f28a22"/><ellipse cx="351.0" cy="418.6" rx="9.3" ry="5.8" fill="#ec7c1c"/><ellipse cx="343.6" cy="414.0" rx="9.3" ry="5.8" fill="#f28a22"/><ellipse cx="351.0" cy="409.4" rx="9.3" ry="5.8" fill="#ec7c1c"/></g></g></g></symbol><clipPath id="cimg"><rect width="503" height="424"/></clipPath><symbol id="scene" viewBox="0 0 754 424" preserveAspectRatio="none"><rect width="754" height="424" fill="#000"/><g clip-path="url(#cimg)"><rect width="503" height="424" fill="url(#skyM)"/><g filter="url(#b1)"><g><ellipse cx="317.0" cy="73.4" rx="30.4" ry="24.2" fill="#8ec8f4"/><ellipse cx="292.5" cy="76.9" rx="24.5" ry="18.5" fill="#8ec8f4"/><ellipse cx="341.5" cy="74.3" rx="24.5" ry="18.5" fill="#8ec8f4"/><ellipse cx="311.1" cy="52.3" rx="20.6" ry="22.0" fill="#8ec8f4"/><ellipse cx="327.8" cy="60.2" rx="19.6" ry="18.5" fill="#8ec8f4"/><ellipse cx="319.4" cy="91.0" rx="17.6" ry="17.6" fill="#8ec8f4"/><ellipse cx="316.0" cy="68.4" rx="27.9" ry="21.3" fill="#f4f9ff"/><ellipse cx="291.5" cy="71.9" rx="22.5" ry="16.3" fill="#f4f9ff"/><ellipse cx="340.5" cy="69.3" rx="22.5" ry="16.3" fill="#f4f9ff"/><ellipse cx="310.1" cy="47.3" rx="18.9" ry="19.4" fill="#f4f9ff"/><ellipse cx="326.8" cy="55.2" rx="18.0" ry="16.3" fill="#f4f9ff"/><ellipse cx="318.4" cy="86.0" rx="16.2" ry="15.5" fill="#f4f9ff"/></g><g><ellipse cx="455.0" cy="69.6" rx="29.8" ry="25.3" fill="#8ec8f4"/><ellipse cx="431.0" cy="73.3" rx="24.0" ry="19.3" fill="#8ec8f4"/><ellipse cx="479.0" cy="70.5" rx="24.0" ry="19.3" fill="#8ec8f4"/><ellipse cx="449.2" cy="47.5" rx="20.2" ry="23.0" fill="#8ec8f4"/><ellipse cx="465.6" cy="55.8" rx="19.2" ry="19.3" fill="#8ec8f4"/><ellipse cx="457.4" cy="88.0" rx="17.3" ry="18.4" fill="#8ec8f4"/><ellipse cx="454.0" cy="64.6" rx="27.4" ry="22.3" fill="#f4f9ff"/><ellipse cx="430.0" cy="68.3" rx="22.1" ry="17.0" fill="#f4f9ff"/><ellipse cx="478.0" cy="65.5" rx="22.1" ry="17.0" fill="#f4f9ff"/><ellipse cx="448.2" cy="42.5" rx="18.5" ry="20.2" fill="#f4f9ff"/><ellipse cx="464.6" cy="50.8" rx="17.7" ry="17.0" fill="#f4f9ff"/><ellipse cx="456.4" cy="83.0" rx="15.9" ry="16.2" fill="#f4f9ff"/></g><g><ellipse cx="110" cy="188" rx="80" ry="24" fill="#f2f8ff"/><ellipse cx="70" cy="182" rx="30" ry="26" fill="#f2f8ff"/><ellipse cx="104" cy="160" rx="30" ry="24" fill="#f2f8ff"/><ellipse cx="136" cy="162" rx="30" ry="26" fill="#f2f8ff"/><ellipse cx="160" cy="188" rx="26" ry="20" fill="#f2f8ff"/></g></g><use href="#flw" x="0" y="0" width="503" height="424"/></g></symbol>
</defs></svg>

<div class="a" style="left:0px;top:0px;width:668px;height:40px;background:#3a3a38;line-height:40px;text-align:left;white-space:nowrap;padding-left:10px;border-radius:0 0 4px 0;"><span style="display:inline-block;transform:scaleX(1.057);transform-origin:left center">Composition</span></div><div class="a" style="left:0px;top:42px;width:96px;height:40px;background:#3a3a38;border-radius:0 4px 4px 0;"></div><svg class="a" style="left:37.0px;top:51.5px;" width="21.0" height="21.0" viewBox="0 0 21.0 21.0"><path d="M2 2 L19.0 19.0 M19.0 2 L2 19.0" stroke="#fff" stroke-width="3" fill="none"/></svg><div class="a" style="left:98px;top:42px;width:96px;height:40px;background:#3a3a38;line-height:40px;text-align:center;white-space:nowrap;border-radius:4px;"><span style="display:inline-block;transform:scaleX(0.962);transform-origin:center center">B</span></div><div class="a" style="left:196px;top:42px;width:406px;height:40px;background:#2a2a2a;border-radius:4px;"></div><div class="a" style="left:566px;top:42px;width:36px;height:40px;background:#333332;line-height:40px;text-align:center;white-space:nowrap;font-size:20px;border-radius:4px;"><span style="display:inline-block;transform:scaleX(1.073);transform-origin:center center">M</span></div><div class="a" style="left:604px;top:42px;width:64px;height:40px;background:#3a3a38;border-radius:4px;"></div><svg class="a" style="left:604px;top:42px;" width="64" height="40" viewBox="0 0 64 40"><rect x="11.5" y="13.0" width="3.2" height="15" fill="#fff"/><path d="M24.5 13.0 L14.5 20.5 L24.5 28.0 Z" fill="#fff"/><rect x="49.3" y="13.0" width="3.2" height="15" fill="#fff"/><path d="M39.5 13.0 L49.5 20.5 L39.5 28.0 Z" fill="#fff"/></svg><div class="a" style="left:674px;top:0px;width:4px;height:82px;background:#a0607f;"></div><div class="a" style="left:0px;top:88px;width:680px;height:720px;overflow:hidden;"><div class="a" style="left:0px;top:-98px;width:96px;height:134px;background:#3a3a38;border-radius:0 4px 4px 0;"></div><svg class="a" style="left:36.0px;top:-42.0px;" width="23.0" height="23.0" viewBox="0 0 23.0 23.0"><path d="M2 2 L21.0 21.0 M21.0 2 L2 21.0" stroke="#fff" stroke-width="3" fill="none"/></svg><div class="a" style="left:98px;top:-98px;width:96px;height:88px;background:#3a3a38;line-height:88px;text-align:center;white-space:nowrap;border-radius:4px;"><span style="display:inline-block;transform:scaleX(0.962);transform-origin:center center">B</span></div><div class="a" style="left:196px;top:-98px;width:96px;height:88px;background:#3a3a38;line-height:88px;text-align:center;white-space:nowrap;border-radius:4px;"><span style="display:inline-block;transform:scaleX(0.815);transform-origin:center center">S</span></div><div class="a" style="left:98px;top:-8px;width:194px;height:44px;background:#3a3a38;line-height:44px;text-align:left;white-space:nowrap;padding-left:11px;border-radius:4px;"><span style="display:inline-block;transform:scaleX(1.034);transform-origin:left center">Add</span></div><svg class="a" style="left:267.0px;top:11.5px;" width="14" height="9" viewBox="0 0 14 9"><path d="M0 0 L14 0 L7.0 9 Z" fill="#fff"/></svg><div class="a" style="left:294px;top:-98px;width:126px;height:134px;background:#252525;border-radius:4px;"></div><div class="a" style="left:294px;top:-98px;width:126px;height:36px;background:#4f8f78;line-height:36px;text-align:center;white-space:nowrap;font-size:21px;border-radius:4px;"><span style="display:inline-block;transform:scaleX(0.883);transform-origin:center center">V</span></div><div class="a" style="left:422px;top:-98px;width:180px;height:136px;background:#1b1a19;"></div><div class="a" style="left:604px;top:-98px;width:64px;height:134px;background:#1b1a19;border-radius:4px;"></div><div class="a" style="left:604px;top:-42px;width:64px;height:36px;background:#3a3a38;line-height:36px;text-align:center;white-space:nowrap;font-size:21px;border-radius:4px;"><span style="display:inline-block;transform:scaleX(0.897);transform-origin:center center">T</span></div><div class="a" style="left:604px;top:-4px;width:64px;height:40px;background:#3a3a38;line-height:40px;text-align:center;white-space:nowrap;font-size:21px;border-radius:4px;"><span style="display:inline-block;transform:scaleX(1.045);transform-origin:center center">Alph</span></div><div class="a" style="left:0px;top:38px;width:292px;height:40px;background:#3a3a38;line-height:40px;text-align:left;white-space:nowrap;padding-left:10px;border-radius:0 4px 4px 0;"><span style="display:inline-block;transform:scaleX(1.003);transform-origin:left center">Layer 6</span></div><div class="a" style="left:294px;top:38px;width:126px;height:40px;background:#3a3a38;border-radius:4px;"></div><div class="a" style="left:294px;top:38px;width:68px;height:40px;line-height:40px;text-align:center;white-space:nowrap;font-size:21px;"><span style="display:inline-block;transform:scaleX(0.939);transform-origin:center center">A</span></div><div class="a" style="left:352px;top:38px;width:68px;height:40px;line-height:40px;text-align:center;white-space:nowrap;font-size:21px;"><span style="display:inline-block;transform:scaleX(0.962);transform-origin:center center">B</span></div><div class="a" style="left:422px;top:38px;width:180px;height:40px;background:#3a3a38;border-radius:0 0 4px 4px;"></div><div class="a" style="left:604px;top:38px;width:64px;height:40px;background:#3a3a38;border-radius:4px;"></div><svg class="a" style="left:604px;top:38px;" width="64" height="40" viewBox="0 0 64 40"><rect x="11.5" y="13.0" width="3.2" height="15" fill="#fff"/><path d="M24.5 13.0 L14.5 20.5 L24.5 28.0 Z" fill="#fff"/><rect x="49.3" y="13.0" width="3.2" height="15" fill="#fff"/><path d="M39.5 13.0 L49.5 20.5 L39.5 28.0 Z" fill="#fff"/></svg><div class="a" style="left:674px;top:0px;width:4px;height:78px;background:#a0607f;"></div><div class="a" style="left:0px;top:84px;width:96px;height:134px;background:#3a3a38;border-radius:0 4px 4px 0;"></div><svg class="a" style="left:36.0px;top:140.0px;" width="23.0" height="23.0" viewBox="0 0 23.0 23.0"><path d="M2 2 L21.0 21.0 M21.0 2 L2 21.0" stroke="#fff" stroke-width="3" fill="none"/></svg><div class="a" style="left:98px;top:84px;width:96px;height:88px;background:#3a3a38;line-height:88px;text-align:center;white-space:nowrap;border-radius:4px;"><span style="display:inline-block;transform:scaleX(0.962);transform-origin:center center">B</span></div><div class="a" style="left:196px;top:84px;width:96px;height:88px;background:#3a3a38;line-height:88px;text-align:center;white-space:nowrap;border-radius:4px;"><span style="display:inline-block;transform:scaleX(0.815);transform-origin:center center">S</span></div><div class="a" style="left:98px;top:174px;width:194px;height:44px;background:#3a3a38;line-height:44px;text-align:left;white-space:nowrap;padding-left:11px;border-radius:4px;"><span style="display:inline-block;transform:scaleX(1.034);transform-origin:left center">Add</span></div><svg class="a" style="left:267.0px;top:193.5px;" width="14" height="9" viewBox="0 0 14 9"><path d="M0 0 L14 0 L7.0 9 Z" fill="#fff"/></svg><div class="a" style="left:294px;top:84px;width:126px;height:134px;background:#252525;border-radius:4px;"></div><div class="a" style="left:294px;top:84px;width:126px;height:36px;background:#4f8f78;line-height:36px;text-align:center;white-space:nowrap;font-size:21px;border-radius:4px;"><span style="display:inline-block;transform:scaleX(0.883);transform-origin:center center">V</span></div><div class="a" style="left:422px;top:84px;width:180px;height:136px;background:#1b1a19;"></div><div class="a" style="left:604px;top:84px;width:64px;height:134px;background:#1b1a19;border-radius:4px;"></div><div class="a" style="left:604px;top:140px;width:64px;height:36px;background:#3a3a38;line-height:36px;text-align:center;white-space:nowrap;font-size:21px;border-radius:4px;"><span style="display:inline-block;transform:scaleX(0.897);transform-origin:center center">T</span></div><div class="a" style="left:604px;top:178px;width:64px;height:40px;background:#3a3a38;line-height:40px;text-align:center;white-space:nowrap;font-size:21px;border-radius:4px;"><span style="display:inline-block;transform:scaleX(1.045);transform-origin:center center">Alph</span></div><div class="a" style="left:0px;top:220px;width:292px;height:40px;background:#3a3a38;line-height:40px;text-align:left;white-space:nowrap;padding-left:10px;border-radius:0 4px 4px 0;"><span style="display:inline-block;transform:scaleX(1.003);transform-origin:left center">Layer 5</span></div><div class="a" style="left:294px;top:220px;width:126px;height:40px;background:#3a3a38;border-radius:4px;"></div><div class="a" style="left:294px;top:220px;width:68px;height:40px;line-height:40px;text-align:center;white-space:nowrap;font-size:21px;"><span style="display:inline-block;transform:scaleX(0.939);transform-origin:center center">A</span></div><div class="a" style="left:352px;top:220px;width:68px;height:40px;line-height:40px;text-align:center;white-space:nowrap;font-size:21px;"><span style="display:inline-block;transform:scaleX(0.962);transform-origin:center center">B</span></div><div class="a" style="left:422px;top:220px;width:180px;height:40px;background:#3a3a38;border-radius:0 0 4px 4px;"></div><div class="a" style="left:604px;top:220px;width:64px;height:40px;background:#3a3a38;border-radius:4px;"></div><svg class="a" style="left:604px;top:220px;" width="64" height="40" viewBox="0 0 64 40"><rect x="11.5" y="13.0" width="3.2" height="15" fill="#fff"/><path d="M24.5 13.0 L14.5 20.5 L24.5 28.0 Z" fill="#fff"/><rect x="49.3" y="13.0" width="3.2" height="15" fill="#fff"/><path d="M39.5 13.0 L49.5 20.5 L39.5 28.0 Z" fill="#fff"/></svg><div class="a" style="left:674px;top:84px;width:4px;height:176px;background:#a0607f;"></div><div class="a" style="left:0px;top:266px;width:96px;height:134px;background:#3a3a38;border-radius:0 4px 4px 0;"></div><svg class="a" style="left:36.0px;top:322.0px;" width="23.0" height="23.0" viewBox="0 0 23.0 23.0"><path d="M2 2 L21.0 21.0 M21.0 2 L2 21.0" stroke="#fff" stroke-width="3" fill="none"/></svg><div class="a" style="left:98px;top:266px;width:96px;height:88px;background:#3a3a38;line-height:88px;text-align:center;white-space:nowrap;border-radius:4px;"><span style="display:inline-block;transform:scaleX(0.962);transform-origin:center center">B</span></div><div class="a" style="left:196px;top:266px;width:96px;height:88px;background:#3a3a38;line-height:88px;text-align:center;white-space:nowrap;border-radius:4px;"><span style="display:inline-block;transform:scaleX(0.815);transform-origin:center center">S</span></div><div class="a" style="left:98px;top:356px;width:194px;height:44px;background:#3a3a38;line-height:44px;text-align:left;white-space:nowrap;padding-left:11px;border-radius:4px;"><span style="display:inline-block;transform:scaleX(1.034);transform-origin:left center">Add</span></div><svg class="a" style="left:267.0px;top:375.5px;" width="14" height="9" viewBox="0 0 14 9"><path d="M0 0 L14 0 L7.0 9 Z" fill="#fff"/></svg><div class="a" style="left:294px;top:266px;width:126px;height:134px;background:#252525;border-radius:4px;"></div><div class="a" style="left:294px;top:266px;width:126px;height:36px;background:#4f8f78;line-height:36px;text-align:center;white-space:nowrap;font-size:21px;border-radius:4px;"><span style="display:inline-block;transform:scaleX(0.883);transform-origin:center center">V</span></div><div class="a" style="left:422px;top:266px;width:180px;height:136px;background:#1b1a19;"></div><div class="a" style="left:604px;top:266px;width:64px;height:134px;background:#1b1a19;border-radius:4px;"></div><div class="a" style="left:604px;top:322px;width:64px;height:36px;background:#3a3a38;line-height:36px;text-align:center;white-space:nowrap;font-size:21px;border-radius:4px;"><span style="display:inline-block;transform:scaleX(0.897);transform-origin:center center">T</span></div><div class="a" style="left:604px;top:360px;width:64px;height:40px;background:#3a3a38;line-height:40px;text-align:center;white-space:nowrap;font-size:21px;border-radius:4px;"><span style="display:inline-block;transform:scaleX(1.045);transform-origin:center center">Alph</span></div><div class="a" style="left:0px;top:402px;width:292px;height:40px;background:#3a3a38;line-height:40px;text-align:left;white-space:nowrap;padding-left:10px;border-radius:0 4px 4px 0;"><span style="display:inline-block;transform:scaleX(1.003);transform-origin:left center">Layer 4</span></div><div class="a" style="left:294px;top:402px;width:126px;height:40px;background:#3a3a38;border-radius:4px;"></div><div class="a" style="left:294px;top:402px;width:68px;height:40px;line-height:40px;text-align:center;white-space:nowrap;font-size:21px;"><span style="display:inline-block;transform:scaleX(0.939);transform-origin:center center">A</span></div><div class="a" style="left:352px;top:402px;width:68px;height:40px;line-height:40px;text-align:center;white-space:nowrap;font-size:21px;"><span style="display:inline-block;transform:scaleX(0.962);transform-origin:center center">B</span></div><div class="a" style="left:422px;top:402px;width:180px;height:40px;background:#3a3a38;border-radius:0 0 4px 4px;"></div><div class="a" style="left:604px;top:402px;width:64px;height:40px;background:#3a3a38;border-radius:4px;"></div><svg class="a" style="left:604px;top:402px;" width="64" height="40" viewBox="0 0 64 40"><rect x="11.5" y="13.0" width="3.2" height="15" fill="#fff"/><path d="M24.5 13.0 L14.5 20.5 L24.5 28.0 Z" fill="#fff"/><rect x="49.3" y="13.0" width="3.2" height="15" fill="#fff"/><path d="M39.5 13.0 L49.5 20.5 L39.5 28.0 Z" fill="#fff"/></svg><div class="a" style="left:674px;top:266px;width:4px;height:176px;background:#a0607f;"></div><div class="a" style="left:0px;top:448px;width:96px;height:134px;background:#3a3a38;border-radius:0 4px 4px 0;"></div><svg class="a" style="left:36.0px;top:504.0px;" width="23.0" height="23.0" viewBox="0 0 23.0 23.0"><path d="M2 2 L21.0 21.0 M21.0 2 L2 21.0" stroke="#fff" stroke-width="3" fill="none"/></svg><div class="a" style="left:98px;top:448px;width:96px;height:88px;background:#3a3a38;line-height:88px;text-align:center;white-space:nowrap;border-radius:4px;"><span style="display:inline-block;transform:scaleX(0.962);transform-origin:center center">B</span></div><div class="a" style="left:196px;top:448px;width:96px;height:88px;background:#3a3a38;line-height:88px;text-align:center;white-space:nowrap;border-radius:4px;"><span style="display:inline-block;transform:scaleX(0.815);transform-origin:center center">S</span></div><div class="a" style="left:98px;top:538px;width:194px;height:44px;background:#3a3a38;line-height:44px;text-align:left;white-space:nowrap;padding-left:11px;border-radius:4px;"><span style="display:inline-block;transform:scaleX(1.034);transform-origin:left center">Add</span></div><svg class="a" style="left:267.0px;top:557.5px;" width="14" height="9" viewBox="0 0 14 9"><path d="M0 0 L14 0 L7.0 9 Z" fill="#fff"/></svg><div class="a" style="left:294px;top:448px;width:126px;height:134px;background:#252525;border-radius:4px;"></div><div class="a" style="left:294px;top:448px;width:126px;height:53px;background:#1b1a19;border-radius:4px 4px 0 0;"></div><div class="a" style="left:294px;top:497px;width:126px;height:36px;background:#4f8f78;line-height:36px;text-align:center;white-space:nowrap;font-size:21px;border-radius:4px;"><span style="display:inline-block;transform:scaleX(0.883);transform-origin:center center">V</span></div><div class="a" style="left:422px;top:448px;width:180px;height:136px;background:#1b1a19;"></div><div class="a" style="left:604px;top:448px;width:64px;height:134px;background:#1b1a19;border-radius:4px;"></div><div class="a" style="left:604px;top:504px;width:64px;height:36px;background:#3a3a38;line-height:36px;text-align:center;white-space:nowrap;font-size:21px;border-radius:4px;"><span style="display:inline-block;transform:scaleX(0.897);transform-origin:center center">T</span></div><div class="a" style="left:604px;top:542px;width:64px;height:40px;background:#3a3a38;line-height:40px;text-align:center;white-space:nowrap;font-size:21px;border-radius:4px;"><span style="display:inline-block;transform:scaleX(1.045);transform-origin:center center">Alph</span></div><div class="a" style="left:0px;top:584px;width:292px;height:40px;background:#3a3a38;line-height:40px;text-align:left;white-space:nowrap;padding-left:10px;border-radius:0 4px 4px 0;"><span style="display:inline-block;transform:scaleX(1.003);transform-origin:left center">Layer 3</span></div><div class="a" style="left:294px;top:584px;width:126px;height:40px;background:#3a3a38;border-radius:4px;"></div><div class="a" style="left:294px;top:584px;width:68px;height:40px;line-height:40px;text-align:center;white-space:nowrap;font-size:21px;"><span style="display:inline-block;transform:scaleX(0.939);transform-origin:center center">A</span></div><div class="a" style="left:352px;top:584px;width:68px;height:40px;line-height:40px;text-align:center;white-space:nowrap;font-size:21px;"><span style="display:inline-block;transform:scaleX(0.962);transform-origin:center center">B</span></div><div class="a" style="left:422px;top:584px;width:180px;height:40px;background:#3a3a38;border-radius:0 0 4px 4px;"></div><div class="a" style="left:604px;top:584px;width:64px;height:40px;background:#3a3a38;border-radius:4px;"></div><svg class="a" style="left:604px;top:584px;" width="64" height="40" viewBox="0 0 64 40"><rect x="11.5" y="13.0" width="3.2" height="15" fill="#fff"/><path d="M24.5 13.0 L14.5 20.5 L24.5 28.0 Z" fill="#fff"/><rect x="49.3" y="13.0" width="3.2" height="15" fill="#fff"/><path d="M39.5 13.0 L49.5 20.5 L39.5 28.0 Z" fill="#fff"/></svg><div class="a" style="left:674px;top:448px;width:4px;height:176px;background:#a0607f;"></div><div class="a" style="left:0px;top:630px;width:96px;height:134px;background:#3a3a38;border-radius:0 4px 4px 0;"></div><svg class="a" style="left:36.0px;top:686.0px;" width="23.0" height="23.0" viewBox="0 0 23.0 23.0"><path d="M2 2 L21.0 21.0 M21.0 2 L2 21.0" stroke="#fff" stroke-width="3" fill="none"/></svg><div class="a" style="left:98px;top:630px;width:96px;height:88px;background:#3a3a38;line-height:88px;text-align:center;white-space:nowrap;border-radius:4px;"><span style="display:inline-block;transform:scaleX(0.962);transform-origin:center center">B</span></div><div class="a" style="left:196px;top:630px;width:96px;height:88px;background:#3a3a38;line-height:88px;text-align:center;white-space:nowrap;border-radius:4px;"><span style="display:inline-block;transform:scaleX(0.815);transform-origin:center center">S</span></div><div class="a" style="left:98px;top:720px;width:194px;height:44px;background:#3a3a38;line-height:44px;text-align:left;white-space:nowrap;padding-left:11px;border-radius:4px;"><span style="display:inline-block;transform:scaleX(1.034);transform-origin:left center">Add</span></div><svg class="a" style="left:267.0px;top:739.5px;" width="14" height="9" viewBox="0 0 14 9"><path d="M0 0 L14 0 L7.0 9 Z" fill="#fff"/></svg><div class="a" style="left:294px;top:630px;width:126px;height:134px;background:#252525;border-radius:4px;"></div><div class="a" style="left:294px;top:630px;width:126px;height:36px;background:#4f8f78;line-height:36px;text-align:center;white-space:nowrap;font-size:21px;border-radius:4px;"><span style="display:inline-block;transform:scaleX(0.883);transform-origin:center center">V</span></div><div class="a" style="left:422px;top:630px;width:180px;height:136px;background:#1b1a19;"></div><div class="a" style="left:604px;top:630px;width:64px;height:134px;background:#1b1a19;border-radius:4px;"></div><div class="a" style="left:604px;top:686px;width:64px;height:36px;background:#3a3a38;line-height:36px;text-align:center;white-space:nowrap;font-size:21px;border-radius:4px;"><span style="display:inline-block;transform:scaleX(0.897);transform-origin:center center">T</span></div><div class="a" style="left:604px;top:724px;width:64px;height:40px;background:#3a3a38;line-height:40px;text-align:center;white-space:nowrap;font-size:21px;border-radius:4px;"><span style="display:inline-block;transform:scaleX(1.045);transform-origin:center center">Alph</span></div><div class="a" style="left:0px;top:766px;width:292px;height:40px;background:#3a3a38;line-height:40px;text-align:left;white-space:nowrap;padding-left:10px;border-radius:0 4px 4px 0;"><span style="display:inline-block;transform:scaleX(1.003);transform-origin:left center">Layer 2</span></div><div class="a" style="left:294px;top:766px;width:126px;height:40px;background:#3a3a38;border-radius:4px;"></div><div class="a" style="left:294px;top:766px;width:68px;height:40px;line-height:40px;text-align:center;white-space:nowrap;font-size:21px;"><span style="display:inline-block;transform:scaleX(0.939);transform-origin:center center">A</span></div><div class="a" style="left:352px;top:766px;width:68px;height:40px;line-height:40px;text-align:center;white-space:nowrap;font-size:21px;"><span style="display:inline-block;transform:scaleX(0.962);transform-origin:center center">B</span></div><div class="a" style="left:422px;top:766px;width:180px;height:40px;background:#3a3a38;border-radius:0 0 4px 4px;"></div><div class="a" style="left:604px;top:766px;width:64px;height:40px;background:#3a3a38;border-radius:4px;"></div><svg class="a" style="left:604px;top:766px;" width="64" height="40" viewBox="0 0 64 40"><rect x="11.5" y="13.0" width="3.2" height="15" fill="#fff"/><path d="M24.5 13.0 L14.5 20.5 L24.5 28.0 Z" fill="#fff"/><rect x="49.3" y="13.0" width="3.2" height="15" fill="#fff"/><path d="M39.5 13.0 L49.5 20.5 L39.5 28.0 Z" fill="#fff"/></svg><div class="a" style="left:674px;top:630px;width:4px;height:176px;background:#a0607f;"></div><div class="a" style="left:422px;top:84px;width:180px;height:136px;background:#ff0000;"></div><div class="a" style="left:422px;top:220px;width:180px;height:40px;background:#86fcd4;line-height:40px;text-align:left;white-space:nowrap;padding-left:10px;color:#000;border-radius:0 0 4px 4px;"><span style="display:inline-block;transform:scaleX(0.938);transform-origin:left center">SL OUT</span></div><svg class="a" style="left:422px;top:266px;" width="180" height="136" viewBox="0 0 180 136"><g filter="url(#b06)"><svg x="2" y="57" width="118.1" height="64" viewBox="0 158 503 266" preserveAspectRatio="none"><use href="#flw" x="0" y="0" width="503" height="424"/></svg><svg x="120.1" y="60" width="57.9" height="61" viewBox="40 158 300 266" preserveAspectRatio="none"><use href="#flw" x="0" y="0" width="503" height="424"/></svg></g></svg><div class="a" style="left:422px;top:402px;width:180px;height:40px;line-height:40px;text-align:left;white-space:nowrap;padding-left:10px;"><span style="display:inline-block;transform:scaleX(0.793);transform-origin:left center">LARGE FLOWERS</span></div><svg class="a" style="left:422px;top:647px;" width="180" height="100" viewBox="0 0 180 100"><rect width="180" height="100" fill="url(#sky)"/><g filter="url(#b1)"><g fill="#eef6ff" opacity="0.95"><ellipse cx="27.6" cy="44.1" rx="20.0" ry="7.7"/><ellipse cx="18.6" cy="44.8" rx="11.0" ry="7.0"/><ellipse cx="36.6" cy="44.8" rx="11.0" ry="7.0"/><ellipse cx="24.6" cy="37.8" rx="10.0" ry="8.4"/><ellipse cx="31.6" cy="39.9" rx="9.0" ry="7.0"/></g><g fill="#eef6ff" opacity="0.95"><ellipse cx="155.5" cy="44.1" rx="20.0" ry="7.7"/><ellipse cx="146.5" cy="44.8" rx="11.0" ry="7.0"/><ellipse cx="164.5" cy="44.8" rx="11.0" ry="7.0"/><ellipse cx="152.5" cy="37.8" rx="10.0" ry="8.4"/><ellipse cx="159.5" cy="39.9" rx="9.0" ry="7.0"/></g><g fill="#eef6ff" opacity="0.95"><ellipse cx="76.7" cy="16.4" rx="12.5" ry="5.0"/><ellipse cx="71.1" cy="16.8" rx="6.9" ry="4.5"/><ellipse cx="82.3" cy="16.8" rx="6.9" ry="4.5"/><ellipse cx="74.8" cy="12.3" rx="6.2" ry="5.4"/><ellipse cx="79.2" cy="13.7" rx="5.6" ry="4.5"/></g><g fill="#eef6ff" opacity="0.95"><ellipse cx="110.5" cy="15.3" rx="12.5" ry="5.0"/><ellipse cx="104.8" cy="15.8" rx="6.9" ry="4.5"/><ellipse cx="116.1" cy="15.8" rx="6.9" ry="4.5"/><ellipse cx="108.6" cy="11.3" rx="6.2" ry="5.4"/><ellipse cx="113.0" cy="12.7" rx="5.6" ry="4.5"/></g><g fill="#eef6ff" opacity="0.95"><ellipse cx="76.7" cy="63.4" rx="12.5" ry="5.0"/><ellipse cx="71.1" cy="63.8" rx="6.9" ry="4.5"/><ellipse cx="82.3" cy="63.8" rx="6.9" ry="4.5"/><ellipse cx="74.8" cy="59.3" rx="6.2" ry="5.4"/><ellipse cx="79.2" cy="60.6" rx="5.6" ry="4.5"/></g><g fill="#eef6ff" opacity="0.95"><ellipse cx="110.5" cy="62.4" rx="12.5" ry="5.0"/><ellipse cx="104.8" cy="62.8" rx="6.9" ry="4.5"/><ellipse cx="116.1" cy="62.8" rx="6.9" ry="4.5"/><ellipse cx="108.6" cy="58.3" rx="6.2" ry="5.4"/><ellipse cx="113.0" cy="59.6" rx="5.6" ry="4.5"/></g></g></svg></div><div class="a" style="left:686px;top:0px;width:2866px;height:84px;overflow:hidden;"><div class="a" style="left:-22px;top:0px;width:176px;height:42px;background:#2a2a2a;"></div><div class="a" style="left:-22px;top:42px;width:176px;height:40px;background:#3a3a38;line-height:40px;text-align:center;white-space:nowrap;border-radius:0 0 4px 4px;"><span style="display:inline-block;transform:scaleX(1.034);transform-origin:center center">Column 20</span></div><svg class="a" style="left:58.0px;top:11.0px;" width="14" height="18" viewBox="0 0 14 18"><path d="M0 0 L14 9.0 L0 18 Z" fill="#fff"/></svg><div class="a" style="left:158px;top:0px;width:176px;height:42px;background:#2a2a2a;"></div><div class="a" style="left:158px;top:42px;width:176px;height:40px;background:#3a3a38;line-height:40px;text-align:center;white-space:nowrap;border-radius:0 0 4px 4px;"><span style="display:inline-block;transform:scaleX(1.034);transform-origin:center center">Column 21</span></div><svg class="a" style="left:238.0px;top:11.0px;" width="14" height="18" viewBox="0 0 14 18"><path d="M0 0 L14 9.0 L0 18 Z" fill="#fff"/></svg><div class="a" style="left:338px;top:0px;width:176px;height:42px;background:#2a2a2a;"></div><div class="a" style="left:338px;top:42px;width:176px;height:40px;background:#3a3a38;line-height:40px;text-align:center;white-space:nowrap;border-radius:0 0 4px 4px;"><span style="display:inline-block;transform:scaleX(1.034);transform-origin:center center">Column 22</span></div><svg class="a" style="left:418.0px;top:11.0px;" width="14" height="18" viewBox="0 0 14 18"><path d="M0 0 L14 9.0 L0 18 Z" fill="#fff"/></svg><div class="a" style="left:518px;top:0px;width:176px;height:42px;background:#2a2a2a;"></div><div class="a" style="left:518px;top:42px;width:176px;height:40px;background:#3a3a38;line-height:40px;text-align:center;white-space:nowrap;border-radius:0 0 4px 4px;"><span style="display:inline-block;transform:scaleX(1.034);transform-origin:center center">Column 23</span></div><svg class="a" style="left:598.0px;top:11.0px;" width="14" height="18" viewBox="0 0 14 18"><path d="M0 0 L14 9.0 L0 18 Z" fill="#fff"/></svg><div class="a" style="left:698px;top:0px;width:176px;height:42px;background:#2a2a2a;"></div><div class="a" style="left:698px;top:42px;width:176px;height:40px;background:#3a3a38;line-height:40px;text-align:center;white-space:nowrap;border-radius:0 0 4px 4px;"><span style="display:inline-block;transform:scaleX(1.034);transform-origin:center center">Column 24</span></div><svg class="a" style="left:778.0px;top:11.0px;" width="14" height="18" viewBox="0 0 14 18"><path d="M0 0 L14 9.0 L0 18 Z" fill="#86fcd4"/></svg><div class="a" style="left:878px;top:0px;width:176px;height:82px;background:#86fcd4;border-radius:0 0 4px 4px;"></div><div class="a" style="left:882px;top:4px;width:168px;height:34px;background:#2a2a2a;"></div><svg class="a" style="left:958.0px;top:11.0px;" width="14" height="18" viewBox="0 0 14 18"><path d="M0 0 L14 9.0 L0 18 Z" fill="#86fcd4"/></svg><div class="a" style="left:878px;top:42px;width:176px;height:40px;line-height:40px;text-align:center;white-space:nowrap;color:#000;"><span style="display:inline-block;transform:scaleX(1.034);transform-origin:center center">Column 25</span></div><div class="a" style="left:1058px;top:0px;width:176px;height:42px;background:#2a2a2a;"></div><div class="a" style="left:1058px;top:42px;width:176px;height:40px;background:#3a3a38;line-height:40px;text-align:center;white-space:nowrap;border-radius:0 0 4px 4px;"><span style="display:inline-block;transform:scaleX(1.034);transform-origin:center center">Column 26</span></div><svg class="a" style="left:1138.0px;top:11.0px;" width="14" height="18" viewBox="0 0 14 18"><path d="M0 0 L14 9.0 L0 18 Z" fill="#fff"/></svg><div class="a" style="left:1238px;top:0px;width:176px;height:42px;background:#2a2a2a;"></div><div class="a" style="left:1238px;top:42px;width:176px;height:40px;background:#3a3a38;line-height:40px;text-align:center;white-space:nowrap;border-radius:0 0 4px 4px;"><span style="display:inline-block;transform:scaleX(1.034);transform-origin:center center">Column 27</span></div><svg class="a" style="left:1318.0px;top:11.0px;" width="14" height="18" viewBox="0 0 14 18"><path d="M0 0 L14 9.0 L0 18 Z" fill="#fff"/></svg><div class="a" style="left:1418px;top:0px;width:176px;height:42px;background:#2a2a2a;"></div><div class="a" style="left:1418px;top:42px;width:176px;height:40px;background:#3a3a38;line-height:40px;text-align:center;white-space:nowrap;border-radius:0 0 4px 4px;"><span style="display:inline-block;transform:scaleX(1.034);transform-origin:center center">Column 28</span></div><svg class="a" style="left:1498.0px;top:11.0px;" width="14" height="18" viewBox="0 0 14 18"><path d="M0 0 L14 9.0 L0 18 Z" fill="#fff"/></svg><div class="a" style="left:1598px;top:0px;width:176px;height:42px;background:#2a2a2a;"></div><div class="a" style="left:1598px;top:42px;width:176px;height:40px;background:#3a3a38;line-height:40px;text-align:center;white-space:nowrap;border-radius:0 0 4px 4px;"><span style="display:inline-block;transform:scaleX(1.034);transform-origin:center center">Column 29</span></div><svg class="a" style="left:1678.0px;top:11.0px;" width="14" height="18" viewBox="0 0 14 18"><path d="M0 0 L14 9.0 L0 18 Z" fill="#fff"/></svg><div class="a" style="left:1778px;top:0px;width:176px;height:42px;background:#2a2a2a;"></div><div class="a" style="left:1778px;top:42px;width:176px;height:40px;background:#3a3a38;line-height:40px;text-align:center;white-space:nowrap;border-radius:0 0 4px 4px;"><span style="display:inline-block;transform:scaleX(1.034);transform-origin:center center">Column 30</span></div><svg class="a" style="left:1858.0px;top:11.0px;" width="14" height="18" viewBox="0 0 14 18"><path d="M0 0 L14 9.0 L0 18 Z" fill="#fff"/></svg><div class="a" style="left:1958px;top:0px;width:176px;height:42px;background:#2a2a2a;"></div><div class="a" style="left:1958px;top:42px;width:176px;height:40px;background:#3a3a38;line-height:40px;text-align:center;white-space:nowrap;border-radius:0 0 4px 4px;"><span style="display:inline-block;transform:scaleX(1.034);transform-origin:center center">Column 31</span></div><svg class="a" style="left:2038.0px;top:11.0px;" width="14" height="18" viewBox="0 0 14 18"><path d="M0 0 L14 9.0 L0 18 Z" fill="#fff"/></svg><div class="a" style="left:2138px;top:0px;width:176px;height:42px;background:#2a2a2a;"></div><div class="a" style="left:2138px;top:42px;width:176px;height:40px;background:#3a3a38;line-height:40px;text-align:center;white-space:nowrap;border-radius:0 0 4px 4px;"><span style="display:inline-block;transform:scaleX(1.034);transform-origin:center center">Column 32</span></div><svg class="a" style="left:2218.0px;top:11.0px;" width="14" height="18" viewBox="0 0 14 18"><path d="M0 0 L14 9.0 L0 18 Z" fill="#fff"/></svg><div class="a" style="left:2318px;top:0px;width:176px;height:42px;background:#2a2a2a;"></div><div class="a" style="left:2318px;top:42px;width:176px;height:40px;background:#3a3a38;line-height:40px;text-align:center;white-space:nowrap;border-radius:0 0 4px 4px;"><span style="display:inline-block;transform:scaleX(1.034);transform-origin:center center">Column 33</span></div><svg class="a" style="left:2398.0px;top:11.0px;" width="14" height="18" viewBox="0 0 14 18"><path d="M0 0 L14 9.0 L0 18 Z" fill="#fff"/></svg><div class="a" style="left:2498px;top:0px;width:176px;height:42px;background:#2a2a2a;"></div><div class="a" style="left:2498px;top:42px;width:176px;height:40px;background:#3a3a38;line-height:40px;text-align:center;white-space:nowrap;border-radius:0 0 4px 4px;"><span style="display:inline-block;transform:scaleX(1.034);transform-origin:center center">Column 34</span></div><svg class="a" style="left:2578.0px;top:11.0px;" width="14" height="18" viewBox="0 0 14 18"><path d="M0 0 L14 9.0 L0 18 Z" fill="#fff"/></svg><div class="a" style="left:2678px;top:0px;width:176px;height:42px;background:#2a2a2a;"></div><div class="a" style="left:2678px;top:42px;width:176px;height:40px;background:#3a3a38;line-height:40px;text-align:center;white-space:nowrap;border-radius:0 0 4px 4px;"><span style="display:inline-block;transform:scaleX(1.034);transform-origin:center center">Column 35</span></div><svg class="a" style="left:2758.0px;top:11.0px;" width="14" height="18" viewBox="0 0 14 18"><path d="M0 0 L14 9.0 L0 18 Z" fill="#fff"/></svg><div class="a" style="left:2858px;top:0px;width:176px;height:42px;background:#2a2a2a;"></div><div class="a" style="left:2858px;top:42px;width:176px;height:40px;background:#3a3a38;line-height:40px;text-align:center;white-space:nowrap;border-radius:0 0 4px 4px;"><span style="display:inline-block;transform:scaleX(1.034);transform-origin:center center">Column 36</span></div><svg class="a" style="left:2938.0px;top:11.0px;" width="14" height="18" viewBox="0 0 14 18"><path d="M0 0 L14 9.0 L0 18 Z" fill="#fff"/></svg></div><div class="a" style="left:686px;top:88px;width:2866px;height:726px;overflow:hidden;"><div class="a" style="left:-22px;top:-98px;width:176px;height:136px;background:#1b1a19;"></div><div class="a" style="left:-22px;top:38px;width:176px;height:40px;background:#3a3a38;line-height:40px;text-align:left;white-space:nowrap;padding-left:10px;border-radius:0 0 4px 4px;overflow:hidden;"></div><div class="a" style="left:158px;top:-98px;width:176px;height:136px;background:#1b1a19;"></div><svg class="a" style="left:158px;top:-98px;" width="176" height="136" viewBox="0 0 176 136"><g filter="url(#b06)"><ellipse cx="93" cy="104" rx="2.6" ry="3" fill="#b8b0a8"/><rect x="89" y="107" width="8" height="13" rx="3" fill="#989088"/><path d="M88 114 L84 126 L90 126 Z" fill="#a83020"/><path d="M98 113 L101 123 L97 123 Z" fill="#a83020"/><rect x="90" y="119" width="2.6" height="14" fill="#807870"/><rect x="94" y="119" width="2.6" height="14" fill="#807870"/></g></svg><div class="a" style="left:158px;top:38px;width:176px;height:40px;background:#3a3a38;line-height:40px;text-align:left;white-space:nowrap;padding-left:10px;border-radius:0 0 4px 4px;overflow:hidden;"><span style="display:inline-block;transform:scaleX(0.955);transform-origin:left center">The Fall knights</span></div><div class="a" style="left:338px;top:-98px;width:176px;height:136px;background:#1b1a19;"></div><svg class="a" style="left:338px;top:-98px;" width="176" height="136" viewBox="0 0 176 136"><g filter="url(#b06)"><ellipse cx="93" cy="104" rx="2.6" ry="3" fill="#b8b0a8"/><rect x="89" y="107" width="8" height="13" rx="3" fill="#989088"/><path d="M88 114 L84 126 L90 126 Z" fill="#a83020"/><path d="M98 113 L101 123 L97 123 Z" fill="#a83020"/><rect x="90" y="119" width="2.6" height="14" fill="#807870"/><rect x="94" y="119" width="2.6" height="14" fill="#807870"/></g></svg><div class="a" style="left:338px;top:38px;width:176px;height:40px;background:#3a3a38;line-height:40px;text-align:left;white-space:nowrap;padding-left:10px;border-radius:0 0 4px 4px;overflow:hidden;"><span style="display:inline-block;transform:scaleX(0.955);transform-origin:left center">The Fall knights</span></div><div class="a" style="left:518px;top:-98px;width:176px;height:136px;background:#1b1a19;"></div><div class="a" style="left:518px;top:38px;width:176px;height:40px;background:#3a3a38;line-height:40px;text-align:left;white-space:nowrap;padding-left:10px;border-radius:0 0 4px 4px;overflow:hidden;"></div><div class="a" style="left:698px;top:-98px;width:176px;height:136px;background:#1b1a19;"></div><div class="a" style="left:698px;top:38px;width:176px;height:40px;background:#3a3a38;line-height:40px;text-align:left;white-space:nowrap;padding-left:10px;border-radius:0 0 4px 4px;overflow:hidden;"></div><div class="a" style="left:878px;top:-98px;width:176px;height:136px;background:#1b1a19;"></div><div class="a" style="left:878px;top:38px;width:176px;height:40px;background:#3a3a38;line-height:40px;text-align:left;white-space:nowrap;padding-left:10px;border-radius:0 0 4px 4px;overflow:hidden;"></div><div class="a" style="left:1058px;top:-98px;width:176px;height:136px;background:#1b1a19;"></div><div class="a" style="left:1058px;top:-98px;width:176px;height:136px;background:#ff0000;"></div><div class="a" style="left:1058px;top:38px;width:176px;height:40px;background:#3a3a38;line-height:40px;text-align:left;white-space:nowrap;padding-left:10px;border-radius:0 0 4px 4px;overflow:hidden;"><span style="display:inline-block;transform:scaleX(0.914);transform-origin:left center">SR OUT</span></div><div class="a" style="left:1238px;top:-98px;width:176px;height:136px;background:#1b1a19;"></div><div class="a" style="left:1238px;top:38px;width:176px;height:40px;background:#3a3a38;line-height:40px;text-align:left;white-space:nowrap;padding-left:10px;border-radius:0 0 4px 4px;overflow:hidden;"><span style="display:inline-block;transform:scaleX(1.003);transform-origin:left center">Clip 22</span></div><div class="a" style="left:1418px;top:-98px;width:176px;height:136px;background:#1b1a19;"></div><div class="a" style="left:1418px;top:38px;width:176px;height:40px;background:#3a3a38;line-height:40px;text-align:left;white-space:nowrap;padding-left:10px;border-radius:0 0 4px 4px;overflow:hidden;"><span style="display:inline-block;transform:scaleX(1.003);transform-origin:left center">Clip 24</span></div><div class="a" style="left:1598px;top:-98px;width:176px;height:136px;background:#1b1a19;"></div><div class="a" style="left:1598px;top:38px;width:176px;height:40px;background:#3a3a38;line-height:40px;text-align:left;white-space:nowrap;padding-left:10px;border-radius:0 0 4px 4px;overflow:hidden;"><span style="display:inline-block;transform:scaleX(1.003);transform-origin:left center">Clip 25</span></div><div class="a" style="left:1778px;top:-98px;width:176px;height:136px;background:#1b1a19;"></div><div class="a" style="left:1778px;top:-98px;width:176px;height:136px;background:#ff0000;"></div><div class="a" style="left:1778px;top:38px;width:176px;height:40px;background:#3a3a38;line-height:40px;text-align:left;white-space:nowrap;padding-left:10px;border-radius:0 0 4px 4px;overflow:hidden;"><span style="display:inline-block;transform:scaleX(0.985);transform-origin:left center">HOLD</span></div><div class="a" style="left:1958px;top:-98px;width:176px;height:136px;background:#1b1a19;"></div><div class="a" style="left:1958px;top:-98px;width:176px;height:136px;background:#ff0000;"></div><div class="a" style="left:1958px;top:38px;width:176px;height:40px;background:#3a3a38;line-height:40px;text-align:left;white-space:nowrap;padding-left:10px;border-radius:0 0 4px 4px;overflow:hidden;"><span style="display:inline-block;transform:scaleX(0.914);transform-origin:left center">SR OUT</span></div><div class="a" style="left:2138px;top:-98px;width:176px;height:136px;background:#1b1a19;"></div><div class="a" style="left:2138px;top:38px;width:176px;height:40px;background:#3a3a38;line-height:40px;text-align:left;white-space:nowrap;padding-left:10px;border-radius:0 0 4px 4px;overflow:hidden;"></div><div class="a" style="left:2318px;top:-98px;width:176px;height:136px;background:#1b1a19;"></div><div class="a" style="left:2318px;top:38px;width:176px;height:40px;background:#3a3a38;line-height:40px;text-align:left;white-space:nowrap;padding-left:10px;border-radius:0 0 4px 4px;overflow:hidden;"></div><div class="a" style="left:2498px;top:-98px;width:176px;height:136px;background:#1b1a19;"></div><svg class="a" style="left:2498px;top:-80px;" width="176" height="100" viewBox="0 0 176 100"><rect width="176" height="100" fill="url(#sky2)"/><g filter="url(#b1)"><g fill="#eef6ff" opacity="0.92"><ellipse cx="58.0" cy="72.4" rx="23.0" ry="8.8"/><ellipse cx="47.6" cy="73.2" rx="12.7" ry="8.0"/><ellipse cx="68.3" cy="73.2" rx="12.7" ry="8.0"/><ellipse cx="54.5" cy="65.2" rx="11.5" ry="9.6"/><ellipse cx="62.6" cy="67.6" rx="10.3" ry="8.0"/></g><g fill="#eef6ff" opacity="0.92"><ellipse cx="122.0" cy="69.4" rx="22.0" ry="8.8"/><ellipse cx="112.1" cy="70.2" rx="12.1" ry="8.0"/><ellipse cx="131.9" cy="70.2" rx="12.1" ry="8.0"/><ellipse cx="118.7" cy="62.2" rx="11.0" ry="9.6"/><ellipse cx="126.4" cy="64.6" rx="9.9" ry="8.0"/></g><g fill="#eef6ff" opacity="0.92"><ellipse cx="-4.0" cy="31.8" rx="8.0" ry="6.6"/><ellipse cx="-7.6" cy="32.4" rx="4.4" ry="6.0"/><ellipse cx="-0.4" cy="32.4" rx="4.4" ry="6.0"/><ellipse cx="-5.2" cy="26.4" rx="4.0" ry="7.2"/><ellipse cx="-2.4" cy="28.2" rx="3.6" ry="6.0"/></g></g></svg><div class="a" style="left:2498px;top:38px;width:176px;height:40px;background:#3a3a38;line-height:40px;text-align:left;white-space:nowrap;padding-left:10px;border-radius:0 0 4px 4px;overflow:hidden;"><span style="display:inline-block;transform:scaleX(0.752);transform-origin:left center">cracked-egg-fallin...</span></div><div class="a" style="left:2678px;top:-98px;width:176px;height:136px;background:#1b1a19;"></div><div class="a" style="left:2678px;top:38px;width:176px;height:40px;background:#3a3a38;line-height:40px;text-align:left;white-space:nowrap;padding-left:10px;border-radius:0 0 4px 4px;overflow:hidden;"><span style="display:inline-block;transform:scaleX(0.999);transform-origin:left center">Clip 1</span></div><div class="a" style="left:2858px;top:-98px;width:176px;height:136px;background:#1b1a19;"></div><svg class="a" style="left:2858px;top:-80px;" width="176" height="100" viewBox="0 0 176 100"><rect width="176" height="100" fill="url(#sky2)"/><g filter="url(#b1)"><g fill="#eef6ff" opacity="0.92"><ellipse cx="58.0" cy="72.4" rx="23.0" ry="8.8"/><ellipse cx="47.6" cy="73.2" rx="12.7" ry="8.0"/><ellipse cx="68.3" cy="73.2" rx="12.7" ry="8.0"/><ellipse cx="54.5" cy="65.2" rx="11.5" ry="9.6"/><ellipse cx="62.6" cy="67.6" rx="10.3" ry="8.0"/></g><g fill="#eef6ff" opacity="0.92"><ellipse cx="122.0" cy="69.4" rx="22.0" ry="8.8"/><ellipse cx="112.1" cy="70.2" rx="12.1" ry="8.0"/><ellipse cx="131.9" cy="70.2" rx="12.1" ry="8.0"/><ellipse cx="118.7" cy="62.2" rx="11.0" ry="9.6"/><ellipse cx="126.4" cy="64.6" rx="9.9" ry="8.0"/></g><g fill="#eef6ff" opacity="0.92"><ellipse cx="-4.0" cy="31.8" rx="8.0" ry="6.6"/><ellipse cx="-7.6" cy="32.4" rx="4.4" ry="6.0"/><ellipse cx="-0.4" cy="32.4" rx="4.4" ry="6.0"/><ellipse cx="-5.2" cy="26.4" rx="4.0" ry="7.2"/><ellipse cx="-2.4" cy="28.2" rx="3.6" ry="6.0"/></g></g></svg><div class="a" style="left:2858px;top:38px;width:176px;height:40px;background:#3a3a38;line-height:40px;text-align:left;white-space:nowrap;padding-left:10px;border-radius:0 0 4px 4px;overflow:hidden;"></div><div class="a" style="left:-22px;top:84px;width:176px;height:136px;background:#1b1a19;"></div><svg class="a" style="left:-22px;top:84px;" width="176" height="136" viewBox="0 0 176 136"><g fill="#aecde2" filter="url(#b1)"><circle cx="80.0" cy="4.0" r="2.2"/><circle cx="106.0" cy="5.0" r="1.6"/><circle cx="80.0" cy="132.0" r="2.2"/><circle cx="106.0" cy="130.0" r="1.6"/><circle cx="82.0" cy="22.0" r="1.8"/><circle cx="82.0" cy="27.0" r="2.6"/><circle cx="80.0" cy="31.0" r="3.0"/><circle cx="76.0" cy="32.0" r="2.0"/><circle cx="86.0" cy="31.0" r="2.0"/><circle cx="82.0" cy="36.0" r="2.0"/><circle cx="82.0" cy="41.0" r="1.6"/><circle cx="82.0" cy="98.0" r="1.8"/><circle cx="82.0" cy="103.0" r="2.6"/><circle cx="80.0" cy="107.0" r="3.0"/><circle cx="76.0" cy="108.0" r="2.0"/><circle cx="86.0" cy="107.0" r="2.0"/><circle cx="82.0" cy="112.0" r="2.0"/><circle cx="82.0" cy="117.0" r="1.6"/><circle cx="106.0" cy="19.0" r="1.7"/><circle cx="106.0" cy="23.0" r="1.7"/><circle cx="106.0" cy="27.0" r="1.7"/><circle cx="106.0" cy="31.0" r="1.7"/><circle cx="106.0" cy="35.0" r="1.7"/><circle cx="106.0" cy="101.0" r="1.7"/><circle cx="106.0" cy="105.0" r="1.7"/><circle cx="106.0" cy="109.0" r="1.7"/><circle cx="106.0" cy="113.0" r="1.7"/><circle cx="106.0" cy="117.0" r="1.7"/><circle cx="82.0" cy="42.0" r="2.5"/><circle cx="87.0" cy="42.0" r="2.4"/><circle cx="77.3" cy="47.6" r="2.9"/><circle cx="85.7" cy="47.6" r="2.3"/><circle cx="78.6" cy="53.2" r="2.7"/><circle cx="84.5" cy="53.2" r="2.6"/><circle cx="90.4" cy="53.2" r="2.3"/><circle cx="73.9" cy="58.8" r="2.7"/><circle cx="81.5" cy="58.8" r="2.2"/><circle cx="89.1" cy="58.8" r="2.6"/><circle cx="75.2" cy="64.4" r="2.3"/><circle cx="84.5" cy="64.4" r="2.3"/><circle cx="93.8" cy="64.4" r="2.6"/><circle cx="70.5" cy="70.0" r="3.0"/><circle cx="81.5" cy="70.0" r="2.3"/><circle cx="92.5" cy="70.0" r="2.4"/><circle cx="75.2" cy="75.6" r="2.8"/><circle cx="84.5" cy="75.6" r="3.1"/><circle cx="93.8" cy="75.6" r="2.8"/><circle cx="73.9" cy="81.2" r="2.6"/><circle cx="81.5" cy="81.2" r="3.2"/><circle cx="89.1" cy="81.2" r="2.2"/><circle cx="78.6" cy="86.8" r="3.1"/><circle cx="84.5" cy="86.8" r="2.5"/><circle cx="90.4" cy="86.8" r="2.3"/><circle cx="77.3" cy="92.4" r="2.3"/><circle cx="85.7" cy="92.4" r="2.5"/><circle cx="82.0" cy="98.0" r="3.0"/><circle cx="87.0" cy="98.0" r="2.4"/></g></svg><div class="a" style="left:-22px;top:220px;width:176px;height:40px;background:#3a3a38;line-height:40px;text-align:left;white-space:nowrap;padding-left:10px;border-radius:0 0 4px 4px;overflow:hidden;"><span style="display:inline-block;transform:scaleX(0.670);transform-origin:left center">The FalLL GLASS E...</span></div><div class="a" style="left:158px;top:84px;width:176px;height:136px;background:#1b1a19;"></div><svg class="a" style="left:158px;top:84px;" width="176" height="136" viewBox="0 0 176 136"><g fill="#aecde2" filter="url(#b1)"><circle cx="80.0" cy="4.0" r="2.2"/><circle cx="106.0" cy="5.0" r="1.6"/><circle cx="80.0" cy="132.0" r="2.2"/><circle cx="106.0" cy="130.0" r="1.6"/><circle cx="82.0" cy="22.0" r="1.8"/><circle cx="82.0" cy="27.0" r="2.6"/><circle cx="80.0" cy="31.0" r="3.0"/><circle cx="76.0" cy="32.0" r="2.0"/><circle cx="86.0" cy="31.0" r="2.0"/><circle cx="82.0" cy="36.0" r="2.0"/><circle cx="82.0" cy="41.0" r="1.6"/><circle cx="82.0" cy="98.0" r="1.8"/><circle cx="82.0" cy="103.0" r="2.6"/><circle cx="80.0" cy="107.0" r="3.0"/><circle cx="76.0" cy="108.0" r="2.0"/><circle cx="86.0" cy="107.0" r="2.0"/><circle cx="82.0" cy="112.0" r="2.0"/><circle cx="82.0" cy="117.0" r="1.6"/><circle cx="106.0" cy="19.0" r="1.7"/><circle cx="106.0" cy="23.0" r="1.7"/><circle cx="106.0" cy="27.0" r="1.7"/><circle cx="106.0" cy="31.0" r="1.7"/><circle cx="106.0" cy="35.0" r="1.7"/><circle cx="106.0" cy="101.0" r="1.7"/><circle cx="106.0" cy="105.0" r="1.7"/><circle cx="106.0" cy="109.0" r="1.7"/><circle cx="106.0" cy="113.0" r="1.7"/><circle cx="106.0" cy="117.0" r="1.7"/><circle cx="82.0" cy="42.0" r="2.5"/><circle cx="87.0" cy="42.0" r="2.4"/><circle cx="77.3" cy="47.6" r="2.9"/><circle cx="85.7" cy="47.6" r="2.3"/><circle cx="78.6" cy="53.2" r="2.7"/><circle cx="84.5" cy="53.2" r="2.6"/><circle cx="90.4" cy="53.2" r="2.3"/><circle cx="73.9" cy="58.8" r="2.7"/><circle cx="81.5" cy="58.8" r="2.2"/><circle cx="89.1" cy="58.8" r="2.6"/><circle cx="75.2" cy="64.4" r="2.3"/><circle cx="84.5" cy="64.4" r="2.3"/><circle cx="93.8" cy="64.4" r="2.6"/><circle cx="70.5" cy="70.0" r="3.0"/><circle cx="81.5" cy="70.0" r="2.3"/><circle cx="92.5" cy="70.0" r="2.4"/><circle cx="75.2" cy="75.6" r="2.8"/><circle cx="84.5" cy="75.6" r="3.1"/><circle cx="93.8" cy="75.6" r="2.8"/><circle cx="73.9" cy="81.2" r="2.6"/><circle cx="81.5" cy="81.2" r="3.2"/><circle cx="89.1" cy="81.2" r="2.2"/><circle cx="78.6" cy="86.8" r="3.1"/><circle cx="84.5" cy="86.8" r="2.5"/><circle cx="90.4" cy="86.8" r="2.3"/><circle cx="77.3" cy="92.4" r="2.3"/><circle cx="85.7" cy="92.4" r="2.5"/><circle cx="82.0" cy="98.0" r="3.0"/><circle cx="87.0" cy="98.0" r="2.4"/></g></svg><div class="a" style="left:158px;top:220px;width:176px;height:40px;background:#3a3a38;line-height:40px;text-align:left;white-space:nowrap;padding-left:10px;border-radius:0 0 4px 4px;overflow:hidden;"><span style="display:inline-block;transform:scaleX(0.670);transform-origin:left center">The FalLL GLASS E...</span></div><div class="a" style="left:338px;top:84px;width:176px;height:136px;background:#1b1a19;"></div><div class="a" style="left:338px;top:220px;width:176px;height:40px;background:#3a3a38;line-height:40px;text-align:left;white-space:nowrap;padding-left:10px;border-radius:0 0 4px 4px;overflow:hidden;"></div><div class="a" style="left:518px;top:84px;width:176px;height:136px;background:#1b1a19;"></div><div class="a" style="left:518px;top:220px;width:176px;height:40px;background:#3a3a38;line-height:40px;text-align:left;white-space:nowrap;padding-left:10px;border-radius:0 0 4px 4px;overflow:hidden;"></div><div class="a" style="left:698px;top:84px;width:176px;height:136px;background:#1b1a19;"></div><div class="a" style="left:698px;top:220px;width:176px;height:40px;background:#3a3a38;line-height:40px;text-align:left;white-space:nowrap;padding-left:10px;border-radius:0 0 4px 4px;overflow:hidden;"></div><div class="a" style="left:878px;top:84px;width:176px;height:136px;background:#1b1a19;"></div><div class="a" style="left:878px;top:84px;width:176px;height:136px;background:#ff0000;"></div><div class="a" style="left:878px;top:84px;width:176px;height:136px;border:4px solid #86fcd4;"></div><div class="a" style="left:878px;top:220px;width:176px;height:40px;background:#86fcd4;line-height:40px;text-align:left;white-space:nowrap;padding-left:10px;color:#000;border-radius:0 0 4px 4px;"><span style="display:inline-block;transform:scaleX(0.938);transform-origin:left center">SL OUT</span></div><div class="a" style="left:1058px;top:84px;width:176px;height:136px;background:#1b1a19;"></div><div class="a" style="left:1058px;top:220px;width:176px;height:40px;background:#3a3a38;line-height:40px;text-align:left;white-space:nowrap;padding-left:10px;border-radius:0 0 4px 4px;overflow:hidden;"><span style="display:inline-block;transform:scaleX(1.003);transform-origin:left center">Clip 18</span></div><div class="a" style="left:1238px;top:84px;width:176px;height:136px;background:#1b1a19;"></div><div class="a" style="left:1238px;top:220px;width:176px;height:40px;background:#3a3a38;line-height:40px;text-align:left;white-space:nowrap;padding-left:10px;border-radius:0 0 4px 4px;overflow:hidden;"><span style="display:inline-block;transform:scaleX(1.003);transform-origin:left center">Clip 23</span></div><div class="a" style="left:1418px;top:84px;width:176px;height:136px;background:#1b1a19;"></div><div class="a" style="left:1418px;top:84px;width:176px;height:136px;background:#ff0000;"></div><div class="a" style="left:1418px;top:220px;width:176px;height:40px;background:#3a3a38;line-height:40px;text-align:left;white-space:nowrap;padding-left:10px;border-radius:0 0 4px 4px;overflow:hidden;"><span style="display:inline-block;transform:scaleX(0.938);transform-origin:left center">SL OUT</span></div><div class="a" style="left:1598px;top:84px;width:176px;height:136px;background:#1b1a19;"></div><div class="a" style="left:1598px;top:84px;width:176px;height:136px;background:#ff0000;"></div><div class="a" style="left:1598px;top:220px;width:176px;height:40px;background:#3a3a38;line-height:40px;text-align:left;white-space:nowrap;padding-left:10px;border-radius:0 0 4px 4px;overflow:hidden;"><span style="display:inline-block;transform:scaleX(0.948);transform-origin:left center">SL IN</span></div><div class="a" style="left:1778px;top:84px;width:176px;height:136px;background:#1b1a19;"></div><div class="a" style="left:1778px;top:220px;width:176px;height:40px;background:#3a3a38;line-height:40px;text-align:left;white-space:nowrap;padding-left:10px;border-radius:0 0 4px 4px;overflow:hidden;"></div><div class="a" style="left:1958px;top:84px;width:176px;height:136px;background:#1b1a19;"></div><div class="a" style="left:1958px;top:220px;width:176px;height:40px;background:#3a3a38;line-height:40px;text-align:left;white-space:nowrap;padding-left:10px;border-radius:0 0 4px 4px;overflow:hidden;"></div><div class="a" style="left:2138px;top:84px;width:176px;height:136px;background:#1b1a19;"></div><div class="a" style="left:2138px;top:220px;width:176px;height:40px;background:#3a3a38;line-height:40px;text-align:left;white-space:nowrap;padding-left:10px;border-radius:0 0 4px 4px;overflow:hidden;"></div><div class="a" style="left:2318px;top:84px;width:176px;height:136px;background:#1b1a19;"></div><div class="a" style="left:2318px;top:220px;width:176px;height:40px;background:#3a3a38;line-height:40px;text-align:left;white-space:nowrap;padding-left:10px;border-radius:0 0 4px 4px;overflow:hidden;"></div><div class="a" style="left:2498px;top:84px;width:176px;height:136px;background:#1b1a19;"></div><svg class="a" style="left:2498px;top:102px;" width="176" height="100" viewBox="0 0 176 100"><rect width="176" height="100" fill="url(#sky2)"/><g filter="url(#b1)"><g fill="#eef6ff" opacity="0.92"><ellipse cx="58.0" cy="72.4" rx="23.0" ry="8.8"/><ellipse cx="47.6" cy="73.2" rx="12.7" ry="8.0"/><ellipse cx="68.3" cy="73.2" rx="12.7" ry="8.0"/><ellipse cx="54.5" cy="65.2" rx="11.5" ry="9.6"/><ellipse cx="62.6" cy="67.6" rx="10.3" ry="8.0"/></g><g fill="#eef6ff" opacity="0.92"><ellipse cx="122.0" cy="69.4" rx="22.0" ry="8.8"/><ellipse cx="112.1" cy="70.2" rx="12.1" ry="8.0"/><ellipse cx="131.9" cy="70.2" rx="12.1" ry="8.0"/><ellipse cx="118.7" cy="62.2" rx="11.0" ry="9.6"/><ellipse cx="126.4" cy="64.6" rx="9.9" ry="8.0"/></g><g fill="#eef6ff" opacity="0.92"><ellipse cx="-4.0" cy="31.8" rx="8.0" ry="6.6"/><ellipse cx="-7.6" cy="32.4" rx="4.4" ry="6.0"/><ellipse cx="-0.4" cy="32.4" rx="4.4" ry="6.0"/><ellipse cx="-5.2" cy="26.4" rx="4.0" ry="7.2"/><ellipse cx="-2.4" cy="28.2" rx="3.6" ry="6.0"/></g></g></svg><div class="a" style="left:2498px;top:220px;width:176px;height:40px;background:#3a3a38;line-height:40px;text-align:left;white-space:nowrap;padding-left:10px;border-radius:0 0 4px 4px;overflow:hidden;"><span style="display:inline-block;transform:scaleX(0.752);transform-origin:left center">cracked-egg-fallin...</span></div><div class="a" style="left:2678px;top:84px;width:176px;height:136px;background:#1b1a19;"></div><div class="a" style="left:2678px;top:220px;width:176px;height:40px;background:#3a3a38;line-height:40px;text-align:left;white-space:nowrap;padding-left:10px;border-radius:0 0 4px 4px;overflow:hidden;"><span style="display:inline-block;transform:scaleX(0.999);transform-origin:left center">Clip 2</span></div><div class="a" style="left:2858px;top:84px;width:176px;height:136px;background:#1b1a19;"></div><svg class="a" style="left:2858px;top:102px;" width="176" height="100" viewBox="0 0 176 100"><rect width="176" height="100" fill="url(#sky2)"/><g filter="url(#b1)"><g fill="#eef6ff" opacity="0.92"><ellipse cx="58.0" cy="72.4" rx="23.0" ry="8.8"/><ellipse cx="47.6" cy="73.2" rx="12.7" ry="8.0"/><ellipse cx="68.3" cy="73.2" rx="12.7" ry="8.0"/><ellipse cx="54.5" cy="65.2" rx="11.5" ry="9.6"/><ellipse cx="62.6" cy="67.6" rx="10.3" ry="8.0"/></g><g fill="#eef6ff" opacity="0.92"><ellipse cx="122.0" cy="69.4" rx="22.0" ry="8.8"/><ellipse cx="112.1" cy="70.2" rx="12.1" ry="8.0"/><ellipse cx="131.9" cy="70.2" rx="12.1" ry="8.0"/><ellipse cx="118.7" cy="62.2" rx="11.0" ry="9.6"/><ellipse cx="126.4" cy="64.6" rx="9.9" ry="8.0"/></g><g fill="#eef6ff" opacity="0.92"><ellipse cx="-4.0" cy="31.8" rx="8.0" ry="6.6"/><ellipse cx="-7.6" cy="32.4" rx="4.4" ry="6.0"/><ellipse cx="-0.4" cy="32.4" rx="4.4" ry="6.0"/><ellipse cx="-5.2" cy="26.4" rx="4.0" ry="7.2"/><ellipse cx="-2.4" cy="28.2" rx="3.6" ry="6.0"/></g></g></svg><div class="a" style="left:2858px;top:220px;width:176px;height:40px;background:#3a3a38;line-height:40px;text-align:left;white-space:nowrap;padding-left:10px;border-radius:0 0 4px 4px;overflow:hidden;"></div><div class="a" style="left:-22px;top:266px;width:176px;height:136px;background:#1b1a19;"></div><svg class="a" style="left:-22px;top:266px;" width="176" height="136" viewBox="0 0 176 136"><g fill="#b08c44" filter="url(#b1)"><circle cx="80" cy="36" r="2.4"/><circle cx="88" cy="38" r="2.3"/><circle cx="96" cy="38" r="2.0"/><circle cx="100" cy="44" r="3.0"/><circle cx="77" cy="44" r="1.8"/><circle cx="97" cy="48" r="2.5"/><circle cx="78" cy="54" r="3.1"/><circle cx="98" cy="58" r="1.9"/><circle cx="84" cy="68" r="2.6"/><circle cx="96" cy="76" r="2.7"/><circle cx="90" cy="94" r="1.9"/><circle cx="86" cy="96" r="2.3"/><circle cx="93" cy="95" r="2.8"/><circle cx="76" cy="106" r="2.4"/><circle cx="99" cy="110" r="2.8"/><ellipse cx="88" cy="131" rx="17" ry="11"/><ellipse cx="88" cy="122" rx="10" ry="7"/><ellipse cx="87" cy="120" rx="6" ry="4" fill="#d8c090"/></g></svg><div class="a" style="left:-22px;top:402px;width:176px;height:40px;background:#3a3a38;line-height:40px;text-align:left;white-space:nowrap;padding-left:10px;border-radius:0 0 4px 4px;overflow:hidden;"><span style="display:inline-block;transform:scaleX(0.719);transform-origin:left center">The Fall Sleepign ...</span></div><div class="a" style="left:158px;top:266px;width:176px;height:136px;background:#1b1a19;"></div><div class="a" style="left:158px;top:402px;width:176px;height:40px;background:#3a3a38;line-height:40px;text-align:left;white-space:nowrap;padding-left:10px;border-radius:0 0 4px 4px;overflow:hidden;"></div><div class="a" style="left:338px;top:266px;width:176px;height:136px;background:#1b1a19;"></div><div class="a" style="left:338px;top:402px;width:176px;height:40px;background:#3a3a38;line-height:40px;text-align:left;white-space:nowrap;padding-left:10px;border-radius:0 0 4px 4px;overflow:hidden;"></div><div class="a" style="left:518px;top:266px;width:176px;height:136px;background:#1b1a19;"></div><div class="a" style="left:518px;top:266px;width:176px;height:136px;background:#ff0000;"></div><div class="a" style="left:518px;top:402px;width:176px;height:40px;background:#3a3a38;line-height:40px;text-align:left;white-space:nowrap;padding-left:10px;border-radius:0 0 4px 4px;overflow:hidden;"><span style="display:inline-block;transform:scaleX(0.985);transform-origin:left center">HOLD</span></div><div class="a" style="left:698px;top:266px;width:176px;height:136px;background:#1b1a19;"></div><svg class="a" style="left:698px;top:266px;" width="176" height="136" viewBox="0 0 176 136"><g filter="url(#b06)"><svg x="2" y="57" width="115.4" height="64" viewBox="0 158 503 266" preserveAspectRatio="none"><use href="#flw" x="0" y="0" width="503" height="424"/></svg><svg x="117.4" y="60" width="56.6" height="61" viewBox="40 158 300 266" preserveAspectRatio="none"><use href="#flw" x="0" y="0" width="503" height="424"/></svg></g></svg><div class="a" style="left:698px;top:266px;width:176px;height:136px;border:3px solid #86fcd4;"></div><div class="a" style="left:698px;top:402px;width:176px;height:40px;background:#3a3a38;line-height:40px;text-align:left;white-space:nowrap;padding-left:10px;border-radius:0 0 4px 4px;overflow:hidden;"><span style="display:inline-block;transform:scaleX(0.788);transform-origin:left center">LARGE FLOWERS</span></div><div class="a" style="left:878px;top:266px;width:176px;height:136px;background:#1b1a19;"></div><div class="a" style="left:878px;top:402px;width:176px;height:40px;background:#3a3a38;line-height:40px;text-align:left;white-space:nowrap;padding-left:10px;border-radius:0 0 4px 4px;overflow:hidden;"><span style="display:inline-block;transform:scaleX(1.003);transform-origin:left center">Clip 16</span></div><div class="a" style="left:1058px;top:266px;width:176px;height:136px;background:#1b1a19;"></div><div class="a" style="left:1058px;top:402px;width:176px;height:40px;background:#3a3a38;line-height:40px;text-align:left;white-space:nowrap;padding-left:10px;border-radius:0 0 4px 4px;overflow:hidden;"><span style="display:inline-block;transform:scaleX(1.003);transform-origin:left center">Clip 19</span></div><div class="a" style="left:1238px;top:266px;width:176px;height:136px;background:#1b1a19;"></div><div class="a" style="left:1238px;top:402px;width:176px;height:40px;background:#3a3a38;line-height:40px;text-align:left;white-space:nowrap;padding-left:10px;border-radius:0 0 4px 4px;overflow:hidden;"><span style="display:inline-block;transform:scaleX(1.003);transform-origin:left center">Clip 21</span></div><div class="a" style="left:1418px;top:266px;width:176px;height:136px;background:#1b1a19;"></div><div class="a" style="left:1418px;top:402px;width:176px;height:40px;background:#3a3a38;line-height:40px;text-align:left;white-space:nowrap;padding-left:10px;border-radius:0 0 4px 4px;overflow:hidden;"><span style="display:inline-block;transform:scaleX(1.003);transform-origin:left center">Clip 26</span></div><div class="a" style="left:1598px;top:266px;width:176px;height:136px;background:#1b1a19;"></div><div class="a" style="left:1598px;top:402px;width:176px;height:40px;background:#3a3a38;line-height:40px;text-align:left;white-space:nowrap;padding-left:10px;border-radius:0 0 4px 4px;overflow:hidden;"><span style="display:inline-block;transform:scaleX(1.003);transform-origin:left center">Clip 29</span></div><div class="a" style="left:1778px;top:266px;width:176px;height:136px;background:#1b1a19;"></div><svg class="a" style="left:1778px;top:266px;" width="176" height="136" viewBox="0 0 176 136"><g filter="url(#b06)"><svg x="2" y="57" width="115.4" height="64" viewBox="0 158 503 266" preserveAspectRatio="none"><use href="#flw" x="0" y="0" width="503" height="424"/></svg><svg x="117.4" y="60" width="56.6" height="61" viewBox="40 158 300 266" preserveAspectRatio="none"><use href="#flw" x="0" y="0" width="503" height="424"/></svg></g></svg><div class="a" style="left:1778px;top:402px;width:176px;height:40px;background:#3a3a38;line-height:40px;text-align:left;white-space:nowrap;padding-left:10px;border-radius:0 0 4px 4px;overflow:hidden;"><span style="display:inline-block;transform:scaleX(0.788);transform-origin:left center">LARGE FLOWERS</span></div><div class="a" style="left:1958px;top:266px;width:176px;height:136px;background:#1b1a19;"></div><svg class="a" style="left:1958px;top:358px;" width="176" height="28" viewBox="0 0 176 28"><g filter="url(#b1)"><rect y="1" width="176" height="25" fill="#35601f"/><rect x="2.0" y="4" width="39" height="18" rx="5" fill="#dc4a2c"/><rect x="6.0" y="7" width="31" height="12" rx="3" fill="#e85a36"/><rect x="46.5" y="4" width="39" height="18" rx="5" fill="#dc4a2c"/><rect x="50.5" y="7" width="31" height="12" rx="3" fill="#e85a36"/><rect x="91.0" y="4" width="39" height="18" rx="5" fill="#dc4a2c"/><rect x="95.0" y="7" width="31" height="12" rx="3" fill="#e85a36"/><rect x="135.5" y="4" width="39" height="18" rx="5" fill="#dc4a2c"/><rect x="139.5" y="7" width="31" height="12" rx="3" fill="#e85a36"/><rect y="21" width="176" height="3" fill="#5a9a3a" opacity="0.8"/></g></svg><div class="a" style="left:1958px;top:402px;width:176px;height:40px;background:#3a3a38;line-height:40px;text-align:left;white-space:nowrap;padding-left:10px;border-radius:0 0 4px 4px;overflow:hidden;"><span style="display:inline-block;transform:scaleX(0.739);transform-origin:left center">HumptyWall WAL...</span></div><div class="a" style="left:2138px;top:266px;width:176px;height:136px;background:#1b1a19;"></div><div class="a" style="left:2138px;top:402px;width:176px;height:40px;background:#3a3a38;line-height:40px;text-align:left;white-space:nowrap;padding-left:10px;border-radius:0 0 4px 4px;overflow:hidden;"><span style="display:inline-block;transform:scaleX(1.003);transform-origin:left center">Clip 33</span></div><div class="a" style="left:2318px;top:266px;width:176px;height:136px;background:#1b1a19;"></div><div class="a" style="left:2318px;top:402px;width:176px;height:40px;background:#3a3a38;line-height:40px;text-align:left;white-space:nowrap;padding-left:10px;border-radius:0 0 4px 4px;overflow:hidden;"><span style="display:inline-block;transform:scaleX(1.003);transform-origin:left center">Clip 35</span></div><div class="a" style="left:2498px;top:266px;width:176px;height:136px;background:#1b1a19;"></div><svg class="a" style="left:2498px;top:358px;" width="176" height="28" viewBox="0 0 176 28"><g filter="url(#b1)"><rect y="1" width="176" height="25" fill="#35601f"/><rect x="2.0" y="4" width="39" height="18" rx="5" fill="#dc4a2c"/><rect x="6.0" y="7" width="31" height="12" rx="3" fill="#e85a36"/><rect x="46.5" y="4" width="39" height="18" rx="5" fill="#dc4a2c"/><rect x="50.5" y="7" width="31" height="12" rx="3" fill="#e85a36"/><rect x="91.0" y="4" width="39" height="18" rx="5" fill="#dc4a2c"/><rect x="95.0" y="7" width="31" height="12" rx="3" fill="#e85a36"/><rect x="135.5" y="4" width="39" height="18" rx="5" fill="#dc4a2c"/><rect x="139.5" y="7" width="31" height="12" rx="3" fill="#e85a36"/><rect y="21" width="176" height="3" fill="#5a9a3a" opacity="0.8"/></g></svg><div class="a" style="left:2498px;top:402px;width:176px;height:40px;background:#3a3a38;line-height:40px;text-align:left;white-space:nowrap;padding-left:10px;border-radius:0 0 4px 4px;overflow:hidden;"><span style="display:inline-block;transform:scaleX(0.739);transform-origin:left center">HumptyWall WAL...</span></div><div class="a" style="left:2678px;top:266px;width:176px;height:136px;background:#1b1a19;"></div><div class="a" style="left:2678px;top:402px;width:176px;height:40px;background:#3a3a38;line-height:40px;text-align:left;white-space:nowrap;padding-left:10px;border-radius:0 0 4px 4px;overflow:hidden;"><span style="display:inline-block;transform:scaleX(1.003);transform-origin:left center">Clip 39</span></div><div class="a" style="left:2858px;top:266px;width:176px;height:136px;background:#1b1a19;"></div><div class="a" style="left:2858px;top:402px;width:176px;height:40px;background:#3a3a38;line-height:40px;text-align:left;white-space:nowrap;padding-left:10px;border-radius:0 0 4px 4px;overflow:hidden;"></div><div class="a" style="left:-22px;top:448px;width:176px;height:136px;background:#1b1a19;"></div><div class="a" style="left:-22px;top:584px;width:176px;height:40px;background:#3a3a38;line-height:40px;text-align:left;white-space:nowrap;padding-left:10px;border-radius:0 0 4px 4px;overflow:hidden;"></div><div class="a" style="left:158px;top:448px;width:176px;height:136px;background:#1b1a19;"></div><div class="a" style="left:158px;top:584px;width:176px;height:40px;background:#3a3a38;line-height:40px;text-align:left;white-space:nowrap;padding-left:10px;border-radius:0 0 4px 4px;overflow:hidden;"></div><div class="a" style="left:338px;top:448px;width:176px;height:136px;background:#1b1a19;"></div><div class="a" style="left:338px;top:584px;width:176px;height:40px;background:#3a3a38;line-height:40px;text-align:left;white-space:nowrap;padding-left:10px;border-radius:0 0 4px 4px;overflow:hidden;"></div><div class="a" style="left:518px;top:448px;width:176px;height:136px;background:#1b1a19;"></div><div class="a" style="left:518px;top:584px;width:176px;height:40px;background:#3a3a38;line-height:40px;text-align:left;white-space:nowrap;padding-left:10px;border-radius:0 0 4px 4px;overflow:hidden;"></div><div class="a" style="left:698px;top:448px;width:176px;height:136px;background:#1b1a19;"></div><div class="a" style="left:698px;top:584px;width:176px;height:40px;background:#3a3a38;line-height:40px;text-align:left;white-space:nowrap;padding-left:10px;border-radius:0 0 4px 4px;overflow:hidden;"></div><div class="a" style="left:878px;top:448px;width:176px;height:136px;background:#1b1a19;"></div><div class="a" style="left:878px;top:584px;width:176px;height:40px;background:#3a3a38;line-height:40px;text-align:left;white-space:nowrap;padding-left:10px;border-radius:0 0 4px 4px;overflow:hidden;"></div><div class="a" style="left:1058px;top:448px;width:176px;height:136px;background:#1b1a19;"></div><div class="a" style="left:1058px;top:584px;width:176px;height:40px;background:#3a3a38;line-height:40px;text-align:left;white-space:nowrap;padding-left:10px;border-radius:0 0 4px 4px;overflow:hidden;"></div><div class="a" style="left:1238px;top:448px;width:176px;height:136px;background:#1b1a19;"></div><div class="a" style="left:1238px;top:584px;width:176px;height:40px;background:#3a3a38;line-height:40px;text-align:left;white-space:nowrap;padding-left:10px;border-radius:0 0 4px 4px;overflow:hidden;"></div><div class="a" style="left:1418px;top:448px;width:176px;height:136px;background:#1b1a19;"></div><div class="a" style="left:1418px;top:584px;width:176px;height:40px;background:#3a3a38;line-height:40px;text-align:left;white-space:nowrap;padding-left:10px;border-radius:0 0 4px 4px;overflow:hidden;"></div><div class="a" style="left:1598px;top:448px;width:176px;height:136px;background:#1b1a19;"></div><div class="a" style="left:1598px;top:584px;width:176px;height:40px;background:#3a3a38;line-height:40px;text-align:left;white-space:nowrap;padding-left:10px;border-radius:0 0 4px 4px;overflow:hidden;"></div><div class="a" style="left:1778px;top:448px;width:176px;height:136px;background:#1b1a19;"></div><div class="a" style="left:1778px;top:584px;width:176px;height:40px;background:#3a3a38;line-height:40px;text-align:left;white-space:nowrap;padding-left:10px;border-radius:0 0 4px 4px;overflow:hidden;"></div><div class="a" style="left:1958px;top:448px;width:176px;height:136px;background:#1b1a19;"></div><div class="a" style="left:1958px;top:584px;width:176px;height:40px;background:#3a3a38;line-height:40px;text-align:left;white-space:nowrap;padding-left:10px;border-radius:0 0 4px 4px;overflow:hidden;"></div><div class="a" style="left:2138px;top:448px;width:176px;height:136px;background:#1b1a19;"></div><div class="a" style="left:2138px;top:584px;width:176px;height:40px;background:#3a3a38;line-height:40px;text-align:left;white-space:nowrap;padding-left:10px;border-radius:0 0 4px 4px;overflow:hidden;"></div><div class="a" style="left:2318px;top:448px;width:176px;height:136px;background:#1b1a19;"></div><div class="a" style="left:2318px;top:584px;width:176px;height:40px;background:#3a3a38;line-height:40px;text-align:left;white-space:nowrap;padding-left:10px;border-radius:0 0 4px 4px;overflow:hidden;"></div><div class="a" style="left:2498px;top:448px;width:176px;height:136px;background:#1b1a19;"></div><div class="a" style="left:2498px;top:584px;width:176px;height:40px;background:#3a3a38;line-height:40px;text-align:left;white-space:nowrap;padding-left:10px;border-radius:0 0 4px 4px;overflow:hidden;"></div><div class="a" style="left:2678px;top:448px;width:176px;height:136px;background:#1b1a19;"></div><div class="a" style="left:2678px;top:584px;width:176px;height:40px;background:#3a3a38;line-height:40px;text-align:left;white-space:nowrap;padding-left:10px;border-radius:0 0 4px 4px;overflow:hidden;"></div><div class="a" style="left:2858px;top:448px;width:176px;height:136px;background:#1b1a19;"></div><div class="a" style="left:2858px;top:584px;width:176px;height:40px;background:#3a3a38;line-height:40px;text-align:left;white-space:nowrap;padding-left:10px;border-radius:0 0 4px 4px;overflow:hidden;"></div><div class="a" style="left:-22px;top:630px;width:176px;height:136px;background:#1b1a19;"></div><div class="a" style="left:-22px;top:766px;width:176px;height:40px;background:#3a3a38;line-height:40px;text-align:left;white-space:nowrap;padding-left:10px;border-radius:0 0 4px 4px;overflow:hidden;"></div><div class="a" style="left:158px;top:630px;width:176px;height:136px;background:#1b1a19;"></div><div class="a" style="left:158px;top:766px;width:176px;height:40px;background:#3a3a38;line-height:40px;text-align:left;white-space:nowrap;padding-left:10px;border-radius:0 0 4px 4px;overflow:hidden;"></div><div class="a" style="left:338px;top:630px;width:176px;height:136px;background:#1b1a19;"></div><div class="a" style="left:338px;top:766px;width:176px;height:40px;background:#3a3a38;line-height:40px;text-align:left;white-space:nowrap;padding-left:10px;border-radius:0 0 4px 4px;overflow:hidden;"></div><div class="a" style="left:518px;top:630px;width:176px;height:136px;background:#1b1a19;"></div><div class="a" style="left:518px;top:647px;width:176px;height:100px;background:#ffffff;"></div><div class="a" style="left:518px;top:766px;width:176px;height:40px;background:#3a3a38;line-height:40px;text-align:left;white-space:nowrap;padding-left:10px;border-radius:0 0 4px 4px;overflow:hidden;"></div><div class="a" style="left:698px;top:630px;width:176px;height:136px;background:#1b1a19;"></div><svg class="a" style="left:698px;top:647px;" width="176" height="100" viewBox="0 0 176 100"><rect width="176" height="100" fill="url(#sky)"/><g filter="url(#b1)"><g fill="#eef6ff" opacity="0.95"><ellipse cx="27.0" cy="44.1" rx="20.0" ry="7.7"/><ellipse cx="18.0" cy="44.8" rx="11.0" ry="7.0"/><ellipse cx="36.0" cy="44.8" rx="11.0" ry="7.0"/><ellipse cx="24.0" cy="37.8" rx="10.0" ry="8.4"/><ellipse cx="31.0" cy="39.9" rx="9.0" ry="7.0"/></g><g fill="#eef6ff" opacity="0.95"><ellipse cx="152.0" cy="44.1" rx="20.0" ry="7.7"/><ellipse cx="143.0" cy="44.8" rx="11.0" ry="7.0"/><ellipse cx="161.0" cy="44.8" rx="11.0" ry="7.0"/><ellipse cx="149.0" cy="37.8" rx="10.0" ry="8.4"/><ellipse cx="156.0" cy="39.9" rx="9.0" ry="7.0"/></g><g fill="#eef6ff" opacity="0.95"><ellipse cx="75.0" cy="16.4" rx="12.5" ry="5.0"/><ellipse cx="69.4" cy="16.8" rx="6.9" ry="4.5"/><ellipse cx="80.6" cy="16.8" rx="6.9" ry="4.5"/><ellipse cx="73.1" cy="12.3" rx="6.2" ry="5.4"/><ellipse cx="77.5" cy="13.7" rx="5.6" ry="4.5"/></g><g fill="#eef6ff" opacity="0.95"><ellipse cx="108.0" cy="15.3" rx="12.5" ry="5.0"/><ellipse cx="102.4" cy="15.8" rx="6.9" ry="4.5"/><ellipse cx="113.6" cy="15.8" rx="6.9" ry="4.5"/><ellipse cx="106.1" cy="11.3" rx="6.2" ry="5.4"/><ellipse cx="110.5" cy="12.7" rx="5.6" ry="4.5"/></g><g fill="#eef6ff" opacity="0.95"><ellipse cx="75.0" cy="63.4" rx="12.5" ry="5.0"/><ellipse cx="69.4" cy="63.8" rx="6.9" ry="4.5"/><ellipse cx="80.6" cy="63.8" rx="6.9" ry="4.5"/><ellipse cx="73.1" cy="59.3" rx="6.2" ry="5.4"/><ellipse cx="77.5" cy="60.6" rx="5.6" ry="4.5"/></g><g fill="#eef6ff" opacity="0.95"><ellipse cx="108.0" cy="62.4" rx="12.5" ry="5.0"/><ellipse cx="102.4" cy="62.8" rx="6.9" ry="4.5"/><ellipse cx="113.6" cy="62.8" rx="6.9" ry="4.5"/><ellipse cx="106.1" cy="58.3" rx="6.2" ry="5.4"/><ellipse cx="110.5" cy="59.6" rx="5.6" ry="4.5"/></g></g></svg><div class="a" style="left:698px;top:630px;width:176px;height:136px;border:3px solid #86fcd4;"></div><div class="a" style="left:698px;top:766px;width:176px;height:40px;background:#3a3a38;line-height:40px;text-align:left;white-space:nowrap;padding-left:10px;border-radius:0 0 4px 4px;overflow:hidden;"></div><div class="a" style="left:878px;top:630px;width:176px;height:136px;background:#1b1a19;"></div><div class="a" style="left:878px;top:766px;width:176px;height:40px;background:#3a3a38;line-height:40px;text-align:left;white-space:nowrap;padding-left:10px;border-radius:0 0 4px 4px;overflow:hidden;"></div><div class="a" style="left:1058px;top:630px;width:176px;height:136px;background:#1b1a19;"></div><div class="a" style="left:1058px;top:766px;width:176px;height:40px;background:#3a3a38;line-height:40px;text-align:left;white-space:nowrap;padding-left:10px;border-radius:0 0 4px 4px;overflow:hidden;"></div><div class="a" style="left:1238px;top:630px;width:176px;height:136px;background:#1b1a19;"></div><svg class="a" style="left:1238px;top:647px;" width="176" height="100" viewBox="0 0 176 100"><rect width="176" height="100" fill="url(#sky)"/><g filter="url(#b1)"><g fill="#eef6ff" opacity="0.95"><ellipse cx="27.0" cy="44.1" rx="20.0" ry="7.7"/><ellipse cx="18.0" cy="44.8" rx="11.0" ry="7.0"/><ellipse cx="36.0" cy="44.8" rx="11.0" ry="7.0"/><ellipse cx="24.0" cy="37.8" rx="10.0" ry="8.4"/><ellipse cx="31.0" cy="39.9" rx="9.0" ry="7.0"/></g><g fill="#eef6ff" opacity="0.95"><ellipse cx="152.0" cy="44.1" rx="20.0" ry="7.7"/><ellipse cx="143.0" cy="44.8" rx="11.0" ry="7.0"/><ellipse cx="161.0" cy="44.8" rx="11.0" ry="7.0"/><ellipse cx="149.0" cy="37.8" rx="10.0" ry="8.4"/><ellipse cx="156.0" cy="39.9" rx="9.0" ry="7.0"/></g><g fill="#eef6ff" opacity="0.95"><ellipse cx="75.0" cy="16.4" rx="12.5" ry="5.0"/><ellipse cx="69.4" cy="16.8" rx="6.9" ry="4.5"/><ellipse cx="80.6" cy="16.8" rx="6.9" ry="4.5"/><ellipse cx="73.1" cy="12.3" rx="6.2" ry="5.4"/><ellipse cx="77.5" cy="13.7" rx="5.6" ry="4.5"/></g><g fill="#eef6ff" opacity="0.95"><ellipse cx="108.0" cy="15.3" rx="12.5" ry="5.0"/><ellipse cx="102.4" cy="15.8" rx="6.9" ry="4.5"/><ellipse cx="113.6" cy="15.8" rx="6.9" ry="4.5"/><ellipse cx="106.1" cy="11.3" rx="6.2" ry="5.4"/><ellipse cx="110.5" cy="12.7" rx="5.6" ry="4.5"/></g><g fill="#eef6ff" opacity="0.95"><ellipse cx="75.0" cy="63.4" rx="12.5" ry="5.0"/><ellipse cx="69.4" cy="63.8" rx="6.9" ry="4.5"/><ellipse cx="80.6" cy="63.8" rx="6.9" ry="4.5"/><ellipse cx="73.1" cy="59.3" rx="6.2" ry="5.4"/><ellipse cx="77.5" cy="60.6" rx="5.6" ry="4.5"/></g><g fill="#eef6ff" opacity="0.95"><ellipse cx="108.0" cy="62.4" rx="12.5" ry="5.0"/><ellipse cx="102.4" cy="62.8" rx="6.9" ry="4.5"/><ellipse cx="113.6" cy="62.8" rx="6.9" ry="4.5"/><ellipse cx="106.1" cy="58.3" rx="6.2" ry="5.4"/><ellipse cx="110.5" cy="59.6" rx="5.6" ry="4.5"/></g></g></svg><div class="a" style="left:1238px;top:766px;width:176px;height:40px;background:#3a3a38;line-height:40px;text-align:left;white-space:nowrap;padding-left:10px;border-radius:0 0 4px 4px;overflow:hidden;"></div><div class="a" style="left:1418px;top:630px;width:176px;height:136px;background:#1b1a19;"></div><svg class="a" style="left:1418px;top:647px;" width="176" height="100" viewBox="0 0 176 100"><rect width="176" height="100" fill="url(#sky)"/><g filter="url(#b1)"><g fill="#eef6ff" opacity="0.95"><ellipse cx="27.0" cy="44.1" rx="20.0" ry="7.7"/><ellipse cx="18.0" cy="44.8" rx="11.0" ry="7.0"/><ellipse cx="36.0" cy="44.8" rx="11.0" ry="7.0"/><ellipse cx="24.0" cy="37.8" rx="10.0" ry="8.4"/><ellipse cx="31.0" cy="39.9" rx="9.0" ry="7.0"/></g><g fill="#eef6ff" opacity="0.95"><ellipse cx="152.0" cy="44.1" rx="20.0" ry="7.7"/><ellipse cx="143.0" cy="44.8" rx="11.0" ry="7.0"/><ellipse cx="161.0" cy="44.8" rx="11.0" ry="7.0"/><ellipse cx="149.0" cy="37.8" rx="10.0" ry="8.4"/><ellipse cx="156.0" cy="39.9" rx="9.0" ry="7.0"/></g><g fill="#eef6ff" opacity="0.95"><ellipse cx="75.0" cy="16.4" rx="12.5" ry="5.0"/><ellipse cx="69.4" cy="16.8" rx="6.9" ry="4.5"/><ellipse cx="80.6" cy="16.8" rx="6.9" ry="4.5"/><ellipse cx="73.1" cy="12.3" rx="6.2" ry="5.4"/><ellipse cx="77.5" cy="13.7" rx="5.6" ry="4.5"/></g><g fill="#eef6ff" opacity="0.95"><ellipse cx="108.0" cy="15.3" rx="12.5" ry="5.0"/><ellipse cx="102.4" cy="15.8" rx="6.9" ry="4.5"/><ellipse cx="113.6" cy="15.8" rx="6.9" ry="4.5"/><ellipse cx="106.1" cy="11.3" rx="6.2" ry="5.4"/><ellipse cx="110.5" cy="12.7" rx="5.6" ry="4.5"/></g><g fill="#eef6ff" opacity="0.95"><ellipse cx="75.0" cy="63.4" rx="12.5" ry="5.0"/><ellipse cx="69.4" cy="63.8" rx="6.9" ry="4.5"/><ellipse cx="80.6" cy="63.8" rx="6.9" ry="4.5"/><ellipse cx="73.1" cy="59.3" rx="6.2" ry="5.4"/><ellipse cx="77.5" cy="60.6" rx="5.6" ry="4.5"/></g><g fill="#eef6ff" opacity="0.95"><ellipse cx="108.0" cy="62.4" rx="12.5" ry="5.0"/><ellipse cx="102.4" cy="62.8" rx="6.9" ry="4.5"/><ellipse cx="113.6" cy="62.8" rx="6.9" ry="4.5"/><ellipse cx="106.1" cy="58.3" rx="6.2" ry="5.4"/><ellipse cx="110.5" cy="59.6" rx="5.6" ry="4.5"/></g></g></svg><div class="a" style="left:1418px;top:766px;width:176px;height:40px;background:#3a3a38;line-height:40px;text-align:left;white-space:nowrap;padding-left:10px;border-radius:0 0 4px 4px;overflow:hidden;"></div><div class="a" style="left:1598px;top:630px;width:176px;height:136px;background:#1b1a19;"></div><div class="a" style="left:1598px;top:766px;width:176px;height:40px;background:#3a3a38;line-height:40px;text-align:left;white-space:nowrap;padding-left:10px;border-radius:0 0 4px 4px;overflow:hidden;"></div><div class="a" style="left:1778px;top:630px;width:176px;height:136px;background:#1b1a19;"></div><svg class="a" style="left:1778px;top:647px;" width="176" height="100" viewBox="0 0 176 100"><rect width="176" height="100" fill="url(#sky)"/><g filter="url(#b1)"><g fill="#eef6ff" opacity="0.95"><ellipse cx="27.0" cy="44.1" rx="20.0" ry="7.7"/><ellipse cx="18.0" cy="44.8" rx="11.0" ry="7.0"/><ellipse cx="36.0" cy="44.8" rx="11.0" ry="7.0"/><ellipse cx="24.0" cy="37.8" rx="10.0" ry="8.4"/><ellipse cx="31.0" cy="39.9" rx="9.0" ry="7.0"/></g><g fill="#eef6ff" opacity="0.95"><ellipse cx="152.0" cy="44.1" rx="20.0" ry="7.7"/><ellipse cx="143.0" cy="44.8" rx="11.0" ry="7.0"/><ellipse cx="161.0" cy="44.8" rx="11.0" ry="7.0"/><ellipse cx="149.0" cy="37.8" rx="10.0" ry="8.4"/><ellipse cx="156.0" cy="39.9" rx="9.0" ry="7.0"/></g><g fill="#eef6ff" opacity="0.95"><ellipse cx="75.0" cy="16.4" rx="12.5" ry="5.0"/><ellipse cx="69.4" cy="16.8" rx="6.9" ry="4.5"/><ellipse cx="80.6" cy="16.8" rx="6.9" ry="4.5"/><ellipse cx="73.1" cy="12.3" rx="6.2" ry="5.4"/><ellipse cx="77.5" cy="13.7" rx="5.6" ry="4.5"/></g><g fill="#eef6ff" opacity="0.95"><ellipse cx="108.0" cy="15.3" rx="12.5" ry="5.0"/><ellipse cx="102.4" cy="15.8" rx="6.9" ry="4.5"/><ellipse cx="113.6" cy="15.8" rx="6.9" ry="4.5"/><ellipse cx="106.1" cy="11.3" rx="6.2" ry="5.4"/><ellipse cx="110.5" cy="12.7" rx="5.6" ry="4.5"/></g><g fill="#eef6ff" opacity="0.95"><ellipse cx="75.0" cy="63.4" rx="12.5" ry="5.0"/><ellipse cx="69.4" cy="63.8" rx="6.9" ry="4.5"/><ellipse cx="80.6" cy="63.8" rx="6.9" ry="4.5"/><ellipse cx="73.1" cy="59.3" rx="6.2" ry="5.4"/><ellipse cx="77.5" cy="60.6" rx="5.6" ry="4.5"/></g><g fill="#eef6ff" opacity="0.95"><ellipse cx="108.0" cy="62.4" rx="12.5" ry="5.0"/><ellipse cx="102.4" cy="62.8" rx="6.9" ry="4.5"/><ellipse cx="113.6" cy="62.8" rx="6.9" ry="4.5"/><ellipse cx="106.1" cy="58.3" rx="6.2" ry="5.4"/><ellipse cx="110.5" cy="59.6" rx="5.6" ry="4.5"/></g></g></svg><div class="a" style="left:1778px;top:766px;width:176px;height:40px;background:#3a3a38;line-height:40px;text-align:left;white-space:nowrap;padding-left:10px;border-radius:0 0 4px 4px;overflow:hidden;"></div><div class="a" style="left:1958px;top:630px;width:176px;height:136px;background:#1b1a19;"></div><svg class="a" style="left:1958px;top:647px;" width="176" height="100" viewBox="0 0 176 100"><rect width="176" height="100" fill="url(#sky)"/><g filter="url(#b1)"><g fill="#eef6ff" opacity="0.95"><ellipse cx="27.0" cy="44.1" rx="20.0" ry="7.7"/><ellipse cx="18.0" cy="44.8" rx="11.0" ry="7.0"/><ellipse cx="36.0" cy="44.8" rx="11.0" ry="7.0"/><ellipse cx="24.0" cy="37.8" rx="10.0" ry="8.4"/><ellipse cx="31.0" cy="39.9" rx="9.0" ry="7.0"/></g><g fill="#eef6ff" opacity="0.95"><ellipse cx="152.0" cy="44.1" rx="20.0" ry="7.7"/><ellipse cx="143.0" cy="44.8" rx="11.0" ry="7.0"/><ellipse cx="161.0" cy="44.8" rx="11.0" ry="7.0"/><ellipse cx="149.0" cy="37.8" rx="10.0" ry="8.4"/><ellipse cx="156.0" cy="39.9" rx="9.0" ry="7.0"/></g><g fill="#eef6ff" opacity="0.95"><ellipse cx="75.0" cy="16.4" rx="12.5" ry="5.0"/><ellipse cx="69.4" cy="16.8" rx="6.9" ry="4.5"/><ellipse cx="80.6" cy="16.8" rx="6.9" ry="4.5"/><ellipse cx="73.1" cy="12.3" rx="6.2" ry="5.4"/><ellipse cx="77.5" cy="13.7" rx="5.6" ry="4.5"/></g><g fill="#eef6ff" opacity="0.95"><ellipse cx="108.0" cy="15.3" rx="12.5" ry="5.0"/><ellipse cx="102.4" cy="15.8" rx="6.9" ry="4.5"/><ellipse cx="113.6" cy="15.8" rx="6.9" ry="4.5"/><ellipse cx="106.1" cy="11.3" rx="6.2" ry="5.4"/><ellipse cx="110.5" cy="12.7" rx="5.6" ry="4.5"/></g><g fill="#eef6ff" opacity="0.95"><ellipse cx="75.0" cy="63.4" rx="12.5" ry="5.0"/><ellipse cx="69.4" cy="63.8" rx="6.9" ry="4.5"/><ellipse cx="80.6" cy="63.8" rx="6.9" ry="4.5"/><ellipse cx="73.1" cy="59.3" rx="6.2" ry="5.4"/><ellipse cx="77.5" cy="60.6" rx="5.6" ry="4.5"/></g><g fill="#eef6ff" opacity="0.95"><ellipse cx="108.0" cy="62.4" rx="12.5" ry="5.0"/><ellipse cx="102.4" cy="62.8" rx="6.9" ry="4.5"/><ellipse cx="113.6" cy="62.8" rx="6.9" ry="4.5"/><ellipse cx="106.1" cy="58.3" rx="6.2" ry="5.4"/><ellipse cx="110.5" cy="59.6" rx="5.6" ry="4.5"/></g></g></svg><div class="a" style="left:1958px;top:766px;width:176px;height:40px;background:#3a3a38;line-height:40px;text-align:left;white-space:nowrap;padding-left:10px;border-radius:0 0 4px 4px;overflow:hidden;"></div><div class="a" style="left:2138px;top:630px;width:176px;height:136px;background:#1b1a19;"></div><svg class="a" style="left:2138px;top:647px;" width="176" height="100" viewBox="0 0 176 100"><rect width="176" height="100" fill="url(#sky)"/><g filter="url(#b1)"><g fill="#eef6ff" opacity="0.95"><ellipse cx="27.0" cy="44.1" rx="20.0" ry="7.7"/><ellipse cx="18.0" cy="44.8" rx="11.0" ry="7.0"/><ellipse cx="36.0" cy="44.8" rx="11.0" ry="7.0"/><ellipse cx="24.0" cy="37.8" rx="10.0" ry="8.4"/><ellipse cx="31.0" cy="39.9" rx="9.0" ry="7.0"/></g><g fill="#eef6ff" opacity="0.95"><ellipse cx="152.0" cy="44.1" rx="20.0" ry="7.7"/><ellipse cx="143.0" cy="44.8" rx="11.0" ry="7.0"/><ellipse cx="161.0" cy="44.8" rx="11.0" ry="7.0"/><ellipse cx="149.0" cy="37.8" rx="10.0" ry="8.4"/><ellipse cx="156.0" cy="39.9" rx="9.0" ry="7.0"/></g><g fill="#eef6ff" opacity="0.95"><ellipse cx="75.0" cy="16.4" rx="12.5" ry="5.0"/><ellipse cx="69.4" cy="16.8" rx="6.9" ry="4.5"/><ellipse cx="80.6" cy="16.8" rx="6.9" ry="4.5"/><ellipse cx="73.1" cy="12.3" rx="6.2" ry="5.4"/><ellipse cx="77.5" cy="13.7" rx="5.6" ry="4.5"/></g><g fill="#eef6ff" opacity="0.95"><ellipse cx="108.0" cy="15.3" rx="12.5" ry="5.0"/><ellipse cx="102.4" cy="15.8" rx="6.9" ry="4.5"/><ellipse cx="113.6" cy="15.8" rx="6.9" ry="4.5"/><ellipse cx="106.1" cy="11.3" rx="6.2" ry="5.4"/><ellipse cx="110.5" cy="12.7" rx="5.6" ry="4.5"/></g><g fill="#eef6ff" opacity="0.95"><ellipse cx="75.0" cy="63.4" rx="12.5" ry="5.0"/><ellipse cx="69.4" cy="63.8" rx="6.9" ry="4.5"/><ellipse cx="80.6" cy="63.8" rx="6.9" ry="4.5"/><ellipse cx="73.1" cy="59.3" rx="6.2" ry="5.4"/><ellipse cx="77.5" cy="60.6" rx="5.6" ry="4.5"/></g><g fill="#eef6ff" opacity="0.95"><ellipse cx="108.0" cy="62.4" rx="12.5" ry="5.0"/><ellipse cx="102.4" cy="62.8" rx="6.9" ry="4.5"/><ellipse cx="113.6" cy="62.8" rx="6.9" ry="4.5"/><ellipse cx="106.1" cy="58.3" rx="6.2" ry="5.4"/><ellipse cx="110.5" cy="59.6" rx="5.6" ry="4.5"/></g></g></svg><div class="a" style="left:2138px;top:766px;width:176px;height:40px;background:#3a3a38;line-height:40px;text-align:left;white-space:nowrap;padding-left:10px;border-radius:0 0 4px 4px;overflow:hidden;"></div><div class="a" style="left:2318px;top:630px;width:176px;height:136px;background:#1b1a19;"></div><svg class="a" style="left:2318px;top:647px;" width="176" height="100" viewBox="0 0 176 100"><rect width="176" height="100" fill="url(#sky)"/><g filter="url(#b1)"><g fill="#eef6ff" opacity="0.95"><ellipse cx="27.0" cy="44.1" rx="20.0" ry="7.7"/><ellipse cx="18.0" cy="44.8" rx="11.0" ry="7.0"/><ellipse cx="36.0" cy="44.8" rx="11.0" ry="7.0"/><ellipse cx="24.0" cy="37.8" rx="10.0" ry="8.4"/><ellipse cx="31.0" cy="39.9" rx="9.0" ry="7.0"/></g><g fill="#eef6ff" opacity="0.95"><ellipse cx="152.0" cy="44.1" rx="20.0" ry="7.7"/><ellipse cx="143.0" cy="44.8" rx="11.0" ry="7.0"/><ellipse cx="161.0" cy="44.8" rx="11.0" ry="7.0"/><ellipse cx="149.0" cy="37.8" rx="10.0" ry="8.4"/><ellipse cx="156.0" cy="39.9" rx="9.0" ry="7.0"/></g><g fill="#eef6ff" opacity="0.95"><ellipse cx="75.0" cy="16.4" rx="12.5" ry="5.0"/><ellipse cx="69.4" cy="16.8" rx="6.9" ry="4.5"/><ellipse cx="80.6" cy="16.8" rx="6.9" ry="4.5"/><ellipse cx="73.1" cy="12.3" rx="6.2" ry="5.4"/><ellipse cx="77.5" cy="13.7" rx="5.6" ry="4.5"/></g><g fill="#eef6ff" opacity="0.95"><ellipse cx="108.0" cy="15.3" rx="12.5" ry="5.0"/><ellipse cx="102.4" cy="15.8" rx="6.9" ry="4.5"/><ellipse cx="113.6" cy="15.8" rx="6.9" ry="4.5"/><ellipse cx="106.1" cy="11.3" rx="6.2" ry="5.4"/><ellipse cx="110.5" cy="12.7" rx="5.6" ry="4.5"/></g><g fill="#eef6ff" opacity="0.95"><ellipse cx="75.0" cy="63.4" rx="12.5" ry="5.0"/><ellipse cx="69.4" cy="63.8" rx="6.9" ry="4.5"/><ellipse cx="80.6" cy="63.8" rx="6.9" ry="4.5"/><ellipse cx="73.1" cy="59.3" rx="6.2" ry="5.4"/><ellipse cx="77.5" cy="60.6" rx="5.6" ry="4.5"/></g><g fill="#eef6ff" opacity="0.95"><ellipse cx="108.0" cy="62.4" rx="12.5" ry="5.0"/><ellipse cx="102.4" cy="62.8" rx="6.9" ry="4.5"/><ellipse cx="113.6" cy="62.8" rx="6.9" ry="4.5"/><ellipse cx="106.1" cy="58.3" rx="6.2" ry="5.4"/><ellipse cx="110.5" cy="59.6" rx="5.6" ry="4.5"/></g></g></svg><div class="a" style="left:2318px;top:766px;width:176px;height:40px;background:#3a3a38;line-height:40px;text-align:left;white-space:nowrap;padding-left:10px;border-radius:0 0 4px 4px;overflow:hidden;"></div><div class="a" style="left:2498px;top:630px;width:176px;height:136px;background:#1b1a19;"></div><svg class="a" style="left:2498px;top:647px;" width="176" height="100" viewBox="0 0 176 100"><rect width="176" height="100" fill="url(#sky)"/><g filter="url(#b1)"><g fill="#eef6ff" opacity="0.95"><ellipse cx="27.0" cy="44.1" rx="20.0" ry="7.7"/><ellipse cx="18.0" cy="44.8" rx="11.0" ry="7.0"/><ellipse cx="36.0" cy="44.8" rx="11.0" ry="7.0"/><ellipse cx="24.0" cy="37.8" rx="10.0" ry="8.4"/><ellipse cx="31.0" cy="39.9" rx="9.0" ry="7.0"/></g><g fill="#eef6ff" opacity="0.95"><ellipse cx="152.0" cy="44.1" rx="20.0" ry="7.7"/><ellipse cx="143.0" cy="44.8" rx="11.0" ry="7.0"/><ellipse cx="161.0" cy="44.8" rx="11.0" ry="7.0"/><ellipse cx="149.0" cy="37.8" rx="10.0" ry="8.4"/><ellipse cx="156.0" cy="39.9" rx="9.0" ry="7.0"/></g><g fill="#eef6ff" opacity="0.95"><ellipse cx="75.0" cy="16.4" rx="12.5" ry="5.0"/><ellipse cx="69.4" cy="16.8" rx="6.9" ry="4.5"/><ellipse cx="80.6" cy="16.8" rx="6.9" ry="4.5"/><ellipse cx="73.1" cy="12.3" rx="6.2" ry="5.4"/><ellipse cx="77.5" cy="13.7" rx="5.6" ry="4.5"/></g><g fill="#eef6ff" opacity="0.95"><ellipse cx="108.0" cy="15.3" rx="12.5" ry="5.0"/><ellipse cx="102.4" cy="15.8" rx="6.9" ry="4.5"/><ellipse cx="113.6" cy="15.8" rx="6.9" ry="4.5"/><ellipse cx="106.1" cy="11.3" rx="6.2" ry="5.4"/><ellipse cx="110.5" cy="12.7" rx="5.6" ry="4.5"/></g><g fill="#eef6ff" opacity="0.95"><ellipse cx="75.0" cy="63.4" rx="12.5" ry="5.0"/><ellipse cx="69.4" cy="63.8" rx="6.9" ry="4.5"/><ellipse cx="80.6" cy="63.8" rx="6.9" ry="4.5"/><ellipse cx="73.1" cy="59.3" rx="6.2" ry="5.4"/><ellipse cx="77.5" cy="60.6" rx="5.6" ry="4.5"/></g><g fill="#eef6ff" opacity="0.95"><ellipse cx="108.0" cy="62.4" rx="12.5" ry="5.0"/><ellipse cx="102.4" cy="62.8" rx="6.9" ry="4.5"/><ellipse cx="113.6" cy="62.8" rx="6.9" ry="4.5"/><ellipse cx="106.1" cy="58.3" rx="6.2" ry="5.4"/><ellipse cx="110.5" cy="59.6" rx="5.6" ry="4.5"/></g></g></svg><div class="a" style="left:2498px;top:766px;width:176px;height:40px;background:#3a3a38;line-height:40px;text-align:left;white-space:nowrap;padding-left:10px;border-radius:0 0 4px 4px;overflow:hidden;"></div><div class="a" style="left:2678px;top:630px;width:176px;height:136px;background:#1b1a19;"></div><div class="a" style="left:2678px;top:766px;width:176px;height:40px;background:#3a3a38;line-height:40px;text-align:left;white-space:nowrap;padding-left:10px;border-radius:0 0 4px 4px;overflow:hidden;"></div><div class="a" style="left:2858px;top:630px;width:176px;height:136px;background:#1b1a19;"></div><div class="a" style="left:2858px;top:766px;width:176px;height:40px;background:#3a3a38;line-height:40px;text-align:left;white-space:nowrap;padding-left:10px;border-radius:0 0 4px 4px;overflow:hidden;"></div></div><div class="a" style="left:3554px;top:88px;width:30px;height:726px;background:#1e1e1e;"></div><div class="a" style="left:3554px;top:417px;width:30px;height:290px;background:#2f2f2f;"></div><div class="a" style="left:686px;top:816px;width:2866px;height:24px;background:#212121;"></div><div class="a" style="left:1372px;top:816px;width:570px;height:24px;background:#333333;"></div><div class="a" style="left:38px;top:850px;width:526px;height:40px;background:#0a0a0a;"></div><div class="a" style="left:0px;top:850px;width:38px;height:40px;background:#3a3a38;line-height:40px;text-align:center;white-space:nowrap;font-size:21px;border-radius:4px 0 0 4px;"><span style="display:inline-block;transform:scaleX(0.939);transform-origin:center center">A</span></div><div class="a" style="left:288px;top:850px;width:24px;height:40px;background:#4f8f78;"></div><div class="a" style="left:564px;top:850px;width:38px;height:40px;background:#3a3a38;line-height:40px;text-align:center;white-space:nowrap;font-size:21px;border-radius:0 4px 4px 0;"><span style="display:inline-block;transform:scaleX(0.962);transform-origin:center center">B</span></div><div class="a" style="left:604px;top:850px;width:64px;height:40px;background:#3a3a38;border-radius:4px;"></div><svg class="a" style="left:604px;top:850px;" width="64" height="40" viewBox="0 0 64 40"><rect x="11.5" y="13.0" width="3.2" height="15" fill="#fff"/><path d="M24.5 13.0 L14.5 20.5 L24.5 28.0 Z" fill="#fff"/><rect x="49.3" y="13.0" width="3.2" height="15" fill="#fff"/><path d="M39.5 13.0 L49.5 20.5 L39.5 28.0 Z" fill="#fff"/></svg><div class="a" style="left:686px;top:850px;width:132px;height:40px;background:#86fcd4;line-height:40px;text-align:center;white-space:nowrap;color:#000;border-radius:4px;"><span style="display:inline-block;transform:scaleX(1.007);transform-origin:center center">Show</span></div><div class="a" style="left:820px;top:850px;width:279px;height:40px;background:#3a3a38;line-height:40px;text-align:center;white-space:nowrap;border-radius:4px;"><span style="display:inline-block;transform:scaleX(1.057);transform-origin:center center">Notes for Morgan</span></div><div class="a" style="left:1102px;top:850px;width:178px;height:40px;background:#3a3a38;line-height:40px;text-align:center;white-space:nowrap;border-radius:4px;"><span style="display:inline-block;transform:scaleX(0.998);transform-origin:center center">Grab Bag</span></div>
<div class="a" style="left:0px;top:896px;width:74px;height:72px;background:#2c2c2c;"></div><svg class="a" style="left:14px;top:909px;" width="46" height="46" viewBox="0 0 46 46"><path d="M22 22 L22 0 A22 22 0 0 0 0 22 Z" fill="#4f8f78"/><path d="M24 22 L46 22 A22 22 0 0 0 24 0 Z" fill="#4f8f78"/><path d="M22 24 L0 24 A22 22 0 0 0 22 46 Z" fill="#4f8f78"/><path d="M24 24 L24 46 A22 22 0 0 0 46 24 Z" fill="#86fcd4"/></svg><div class="a" style="left:76px;top:896px;width:72px;height:72px;background:#86fcd4;"></div><svg class="a" style="left:103px;top:921px;" width="18" height="22" viewBox="0 0 18 22"><path d="M0 0 L17 11 L0 22 Z" fill="#000"/></svg><div class="a" style="left:150px;top:896px;width:72px;height:72px;background:#2c2c2c;"></div><svg class="a" style="left:176px;top:923px;" width="20" height="18" viewBox="0 0 20 18"><rect x="0" y="0" width="7" height="18" fill="#fff"/><rect x="11" y="0" width="7" height="18" fill="#fff"/></svg><div class="a" style="left:224px;top:896px;width:70px;height:72px;background:#2c2c2c;"></div><div class="a" style="left:250px;top:923px;width:18px;height:18px;background:#fff;"></div><div class="a" style="left:296px;top:896px;width:198px;height:72px;background:#2c2c2c;"></div><div class="a" style="left:320px;top:896px;width:60px;height:72px;line-height:72px;text-align:left;white-space:nowrap;"><span style="display:inline-block;transform:scaleX(0.984);transform-origin:left center">BPM</span></div><div class="a" style="left:386px;top:896px;width:100px;height:72px;line-height:72px;text-align:left;white-space:nowrap;"><span style="display:inline-block;transform:scaleX(1.011);transform-origin:left center">120.00</span></div><div class="a" style="left:496px;top:896px;width:72px;height:72px;background:#2c2c2c;"></div><svg class="a" style="left:524.0px;top:924px;" width="16" height="16" viewBox="0 0 16 16"><rect x="0" y="6.5" width="16" height="3.4" fill="#fff"/></svg><div class="a" style="left:570px;top:896px;width:72px;height:72px;background:#2c2c2c;"></div><svg class="a" style="left:598.0px;top:924px;" width="16" height="16" viewBox="0 0 16 16"><rect x="0" y="6.5" width="16" height="3.4" fill="#fff"/><rect x="6.3" y="0" width="3.4" height="16" fill="#fff"/></svg><div class="a" style="left:644px;top:896px;width:72px;height:72px;background:#2c2c2c;"></div><div class="a" style="left:718px;top:896px;width:72px;height:72px;background:#2c2c2c;"></div><div class="a" style="left:792px;top:896px;width:72px;height:72px;background:#2c2c2c;line-height:72px;text-align:center;white-space:nowrap;"><span style="display:inline-block;transform:scaleX(1.115);transform-origin:center center">/2</span></div><div class="a" style="left:866px;top:896px;width:72px;height:72px;background:#2c2c2c;line-height:72px;text-align:center;white-space:nowrap;"><span style="display:inline-block;transform:scaleX(0.993);transform-origin:center center">×2</span></div><div class="a" style="left:940px;top:896px;width:104px;height:72px;background:#2c2c2c;line-height:72px;text-align:center;white-space:nowrap;"><span style="display:inline-block;transform:scaleX(0.946);transform-origin:center center">TAP</span></div><div class="a" style="left:1046px;top:896px;width:150px;height:72px;background:#2c2c2c;line-height:72px;text-align:center;white-space:nowrap;"><span style="display:inline-block;transform:scaleX(0.871);transform-origin:center center">RESYNC</span></div><svg class="a" style="left:671px;top:921px;" width="18" height="22" viewBox="0 0 18 22"><rect x="12" y="0" width="2.6" height="22" fill="#fff"/><path d="M12 10 L2 10 M6 6 L2 10 L6 14" stroke="#fff" stroke-width="2.4" fill="none"/></svg><svg class="a" style="left:741px;top:921px;" width="18" height="22" viewBox="0 0 18 22"><rect x="3" y="0" width="2.6" height="22" fill="#fff"/><path d="M5 10 L15 10 M11 6 L15 10 L11 14" stroke="#fff" stroke-width="2.4" fill="none"/></svg><div class="a" style="left:1198px;top:896px;width:74px;height:72px;background:#2c2c2c;"></div><svg class="a" style="left:1221px;top:916px;" width="30" height="34" viewBox="0 0 30 34"><path d="M9 2 L15.5 2 L24 28 L1 28 Z M10.5 6.5 L5.8 20.5 L19 20.5 L14.2 6.5 Z" fill="#fff" fill-rule="evenodd"/><rect x="4" y="28" width="4" height="3" fill="#fff"/><rect x="17" y="28" width="4" height="3" fill="#fff"/><path d="M13.5 22 L24.5 9.5" stroke="#fff" stroke-width="2.6"/><circle cx="25" cy="9" r="3.2" fill="#fff"/></svg><div class="a" style="left:1274px;top:896px;width:70px;height:72px;background:#2c2c2c;"></div><svg class="a" style="left:1293px;top:916px;" width="34" height="32" viewBox="0 0 34 32"><path d="M10 10.5 A10.5 10.5 0 1 1 21.5 27.5" stroke="#fff" stroke-width="5.6" fill="none" stroke-linecap="round" transform="translate(1,-1)"/><path d="M2 2 L2 15 L15 15 Z" fill="#fff"/></svg><div class="a" style="left:1346px;top:896px;width:70px;height:72px;background:#2c2c2c;"></div><svg class="a" style="left:1364px;top:916px;" width="34" height="32" viewBox="0 0 34 32"><g transform="translate(34,0) scale(-1,1)"><path d="M10 10.5 A10.5 10.5 0 1 1 21.5 27.5" stroke="#1a1a1a" stroke-width="5.6" fill="none" stroke-linecap="round" transform="translate(1,-1)"/><path d="M2 2 L2 15 L15 15 Z" fill="#1a1a1a"/></g></svg><div class="a" style="left:1418px;top:896px;width:2166px;height:72px;background:#2c2c2c;"></div>
<div class="a" style="left:0px;top:974px;width:1058px;height:45px;background:#2c2c2c;line-height:45px;text-align:center;white-space:nowrap;font-size:24.5px;color:#ececec;border-radius:4px 4px 0 0;line-height:43px;"><span style="display:inline-block;transform:scaleX(1.046);transform-origin:center center">Screen Monitor</span></div><div class="a" style="left:0px;top:1022px;width:1058px;height:504px;background:#141413;"></div><svg class="a" style="left:80px;top:1022px;" width="897" height="504" viewBox="0 0 897 504"><rect width="897" height="504" fill="url(#chk)"/></svg><div class="a" style="left:667px;top:1022px;width:263px;height:500px;background:#000;"></div><svg class="a" style="left:116px;top:1022px;" width="269" height="504" viewBox="0 0 251.3 424" preserveAspectRatio="none"><use href="#scene" x="0" y="0" width="754" height="424"/></svg><svg class="a" style="left:406px;top:1054px;transform:skewX(0.9deg) rotate(-0.45deg);transform-origin:top left;" width="244" height="435" viewBox="251.3 0 251.3 424" preserveAspectRatio="none"><use href="#scene" x="0" y="0" width="754" height="424"/></svg><div class="a" style="left:0px;top:1529px;width:1058px;height:46px;background:#2c2c2c;line-height:46px;text-align:left;white-space:nowrap;padding-left:18px;color:#d8d8d8;"><span style="display:inline-block;transform:scaleX(1.000);transform-origin:left center">Screen 2 - 3840x2160</span></div><svg class="a" style="left:1021.5px;top:1539.5px;" width="25.0" height="25.0" viewBox="0 0 25.0 25.0"><path d="M23.86 10.70 L23.86 14.30 L20.77 14.49 L19.76 16.95 L21.80 19.26 L19.26 21.80 L16.95 19.76 L14.49 20.77 L14.30 23.86 L10.70 23.86 L10.51 20.77 L8.05 19.76 L5.74 21.80 L3.20 19.26 L5.24 16.95 L4.23 14.49 L1.14 14.30 L1.14 10.70 L4.23 10.51 L5.24 8.05 L3.20 5.74 L5.74 3.20 L8.05 5.24 L10.51 4.23 L10.70 1.14 L14.30 1.14 L14.49 4.23 L16.95 5.24 L19.26 3.20 L21.80 5.74 L19.76 8.05 L20.77 10.51 Z M16.64 12.50 A4.14 4.14 0 1 0 8.36 12.50 A4.14 4.14 0 1 0 16.64 12.50 Z" fill="#d0d0d0" fill-rule="evenodd"/></svg><div class="a" style="left:0px;top:1581px;width:1058px;height:46px;background:#2c2c2c;line-height:46px;text-align:center;white-space:nowrap;font-size:24.5px;color:#ececec;border-radius:4px 4px 0 0;line-height:43px;"><span style="display:inline-block;transform:scaleX(1.072);transform-origin:center center">Composition Monitor</span></div><div class="a" style="left:0px;top:1630px;width:1058px;height:504px;background:#141413;"></div><svg class="a" style="left:152px;top:1670px;" width="754" height="424" viewBox="0 0 754 424" preserveAspectRatio="none"><use href="#scene" x="0" y="0" width="754" height="424"/></svg><div class="a" style="left:0px;top:2136px;width:806px;height:47px;background:#2c2c2c;line-height:47px;text-align:left;white-space:nowrap;padding-left:18px;color:#d8d8d8;"><span style="display:inline-block;transform:scaleX(1.032);transform-origin:left center">Composition - 3840x2160</span></div><div class="a" style="left:808px;top:2136px;width:150px;height:47px;background:#2c2c2c;"></div><div class="a" style="left:878px;top:2137px;width:34px;height:46px;line-height:46px;text-align:center;white-space:nowrap;"><span style="display:inline-block;transform:scaleX(1.000);transform-origin:center center">Fit</span></div><svg class="a" style="left:930.0px;top:2155.5px;" width="16" height="10" viewBox="0 0 16 10"><path d="M0 0 L16 0 L8.0 10 Z" fill="#fff"/></svg><div class="a" style="left:960px;top:2136px;width:48px;height:47px;background:#2c2c2c;"></div><svg class="a" style="left:972.5px;top:2146.5px;" width="23" height="27" viewBox="0 0 23 27"><path d="M7 26 L4.5 18 L1 13.5 Q0.5 11.5 2.5 11.5 L6.5 15 L5.5 4 Q6.5 2 8 4 L9.8 12 L10.3 1.8 Q11.6 0 12.9 1.8 L13.3 12 L15.6 3.2 Q17 1.6 18 3.6 L16.8 13.5 L20 7.5 Q21.6 6.6 22 8.6 L18.5 19 L17 26 Z" fill="#c8c8c8"/></svg><div class="a" style="left:1010px;top:2136px;width:48px;height:47px;background:#2c2c2c;"></div><svg class="a" style="left:1021.5px;top:2148.0px;" width="25.0" height="25.0" viewBox="0 0 25.0 25.0"><path d="M23.86 10.70 L23.86 14.30 L20.77 14.49 L19.76 16.95 L21.80 19.26 L19.26 21.80 L16.95 19.76 L14.49 20.77 L14.30 23.86 L10.70 23.86 L10.51 20.77 L8.05 19.76 L5.74 21.80 L3.20 19.26 L5.24 16.95 L4.23 14.49 L1.14 14.30 L1.14 10.70 L4.23 10.51 L5.24 8.05 L3.20 5.74 L5.74 3.20 L8.05 5.24 L10.51 4.23 L10.70 1.14 L14.30 1.14 L14.49 4.23 L16.95 5.24 L19.26 3.20 L21.80 5.74 L19.76 8.05 L20.77 10.51 Z M16.64 12.50 A4.14 4.14 0 1 0 8.36 12.50 A4.14 4.14 0 1 0 16.64 12.50 Z" fill="#d0d0d0" fill-rule="evenodd"/></svg><div class="a" style="left:0px;top:2192px;width:3584px;height:48px;background:#2c2c2c;line-height:48px;text-align:left;white-space:nowrap;padding-left:16px;color:#dcdcdc;"><span style="display:inline-block;transform:scaleX(1.016);transform-origin:left center">Resolume Arena 7.22.6</span></div><div class="a" style="left:3400px;top:2192px;width:171px;height:48px;line-height:48px;text-align:right;white-space:nowrap;color:#c8c8c8;"><span style="display:inline-block;transform:scaleX(1.010);transform-origin:right center">12:59</span></div>
<div class="a" style="left:1064px;top:974px;width:321px;height:45px;background:#2c2c2c;line-height:45px;text-align:center;white-space:nowrap;font-size:24.5px;color:#ececec;border-radius:4px 4px 0 0;line-height:43px;"><span style="display:inline-block;transform:scaleX(1.057);transform-origin:center center">Composition</span></div><div class="a" style="left:1388px;top:974px;width:324px;height:45px;background:#252525;line-height:45px;text-align:center;white-space:nowrap;font-size:24.5px;color:#b4b4b4;border-radius:4px 4px 0 0;line-height:43px;"><span style="display:inline-block;transform:scaleX(1.009);transform-origin:center center">Layer</span></div><div class="a" style="left:1064px;top:1022px;width:648px;height:68px;background:#2c2c2c;"></div><div class="a" style="left:1090px;top:1022px;width:531px;height:68px;line-height:68px;text-align:left;white-space:nowrap;font-weight:bold;overflow:hidden;"><span style="display:inline-block;transform:scaleX(0.913);transform-origin:left center">Alice Adventures in Wonderland  4.21V4 (3840 x 2160)</span></div><svg class="a" style="left:1616.0px;top:1046.0px;" width="24.0" height="24.0" viewBox="0 0 24.0 24.0"><circle cx="9.5" cy="9.5" r="6.5" fill="none" stroke="#d8d8d8" stroke-width="3.6"/><path d="M14.375 14.375 L21.0 21.0" stroke="#d8d8d8" stroke-width="4.6" stroke-linecap="round"/></svg><svg class="a" style="left:1660.5px;top:1044.5px;" width="25.0" height="25.0" viewBox="0 0 25.0 25.0"><path d="M23.86 10.70 L23.86 14.30 L20.77 14.49 L19.76 16.95 L21.80 19.26 L19.26 21.80 L16.95 19.76 L14.49 20.77 L14.30 23.86 L10.70 23.86 L10.51 20.77 L8.05 19.76 L5.74 21.80 L3.20 19.26 L5.24 16.95 L4.23 14.49 L1.14 14.30 L1.14 10.70 L4.23 10.51 L5.24 8.05 L3.20 5.74 L5.74 3.20 L8.05 5.24 L10.51 4.23 L10.70 1.14 L14.30 1.14 L14.49 4.23 L16.95 5.24 L19.26 3.20 L21.80 5.74 L19.76 8.05 L20.77 10.51 Z M16.64 12.50 A4.14 4.14 0 1 0 8.36 12.50 A4.14 4.14 0 1 0 16.64 12.50 Z" fill="#d8d8d8" fill-rule="evenodd"/></svg><div class="a" style="left:1064px;top:1092px;width:648px;height:46px;background:#2c2c2c;"></div><svg class="a" style="left:1080.0px;top:1107.0px;" width="12" height="16" viewBox="0 0 12 16"><path d="M0 0 L12 8.0 L0 16 Z" fill="#8c8c8c"/></svg><div class="a" style="left:1106px;top:1091px;width:300px;height:46px;line-height:46px;text-align:left;white-space:nowrap;"><span style="display:inline-block;transform:scaleX(1.089);transform-origin:left center">Autopilot</span></div><div class="a" style="left:1064px;top:1140px;width:648px;height:46px;background:#2c2c2c;"></div><svg class="a" style="left:1078.5px;top:1159.0px;" width="15" height="11" viewBox="0 0 15 11"><path d="M0 0 L15 0 L7.5 11 Z" fill="#8c8c8c"/></svg><div class="a" style="left:1106px;top:1139px;width:300px;height:46px;line-height:46px;text-align:left;white-space:nowrap;"><span style="display:inline-block;transform:scaleX(1.057);transform-origin:left center">Composition</span></div><div class="a" style="left:1064px;top:1188px;width:648px;height:46px;background:#141312;"></div><div class="a" style="left:1064px;top:1187px;width:160px;height:46px;line-height:46px;text-align:right;white-space:nowrap;"><span style="display:inline-block;transform:scaleX(1.055);transform-origin:right center">Master</span></div><div class="a" style="left:1236px;top:1188px;width:2px;height:46px;background:#000;"></div><div class="a" style="left:1249px;top:1187px;width:120px;height:46px;line-height:46px;text-align:left;white-space:nowrap;"><span style="display:inline-block;transform:scaleX(0.977);transform-origin:left center">100 %</span></div><svg class="a" style="left:1349px;top:1204px;" width="12" height="14" viewBox="0 0 12 14"><rect x="0" y="6" width="12" height="2.6" fill="#fff"/></svg><svg class="a" style="left:1392.5px;top:1204.3px;" width="14" height="14" viewBox="0 0 14 14"><rect x="0" y="5.7" width="13.5" height="2.6" fill="#fff"/><rect x="5.4" y="0" width="2.6" height="13.5" fill="#fff"/></svg><div class="a" style="left:1440px;top:1194px;width:258px;height:34px;background:#2c2c2c;"></div><div class="a" style="left:1690.0px;top:1194px;width:8px;height:34px;background:#4f8f78;"></div><div class="a" style="left:1064px;top:1236px;width:648px;height:46px;background:#141312;"></div><div class="a" style="left:1064px;top:1235px;width:160px;height:46px;line-height:46px;text-align:right;white-space:nowrap;"><span style="display:inline-block;transform:scaleX(0.992);transform-origin:right center">Speed</span></div><div class="a" style="left:1236px;top:1236px;width:2px;height:46px;background:#000;"></div><div class="a" style="left:1249px;top:1235px;width:120px;height:46px;line-height:46px;text-align:left;white-space:nowrap;"><span style="display:inline-block;transform:scaleX(1.018);transform-origin:left center">1</span></div><svg class="a" style="left:1349px;top:1252px;" width="12" height="14" viewBox="0 0 12 14"><rect x="0" y="6" width="12" height="2.6" fill="#fff"/></svg><svg class="a" style="left:1392.5px;top:1252.3px;" width="14" height="14" viewBox="0 0 14 14"><rect x="0" y="5.7" width="13.5" height="2.6" fill="#fff"/><rect x="5.4" y="0" width="2.6" height="13.5" fill="#fff"/></svg><div class="a" style="left:1440px;top:1242px;width:258px;height:34px;background:#2c2c2c;"></div><div class="a" style="left:1502.5px;top:1242px;width:195.5px;height:34px;background:#0a0a0a;"></div><div class="a" style="left:1502.5px;top:1242px;width:8px;height:34px;background:#4f8f78;"></div><div class="a" style="left:1064px;top:1284px;width:648px;height:46px;background:#2c2c2c;"></div><svg class="a" style="left:1078.5px;top:1303.0px;" width="15" height="11" viewBox="0 0 15 11"><path d="M0 0 L15 0 L7.5 11 Z" fill="#8c8c8c"/></svg><div class="a" style="left:1106px;top:1283px;width:300px;height:46px;line-height:46px;text-align:left;white-space:nowrap;"><span style="display:inline-block;transform:scaleX(1.024);transform-origin:left center">Video</span></div><div class="a" style="left:1064px;top:1332px;width:648px;height:46px;background:#141312;"></div><div class="a" style="left:1064px;top:1331px;width:160px;height:46px;line-height:46px;text-align:right;white-space:nowrap;"><span style="display:inline-block;transform:scaleX(1.032);transform-origin:right center">Opacity</span></div><div class="a" style="left:1236px;top:1332px;width:2px;height:46px;background:#000;"></div><div class="a" style="left:1249px;top:1331px;width:120px;height:46px;line-height:46px;text-align:left;white-space:nowrap;"><span style="display:inline-block;transform:scaleX(0.977);transform-origin:left center">100 %</span></div><svg class="a" style="left:1349px;top:1348px;" width="12" height="14" viewBox="0 0 12 14"><rect x="0" y="6" width="12" height="2.6" fill="#fff"/></svg><svg class="a" style="left:1392.5px;top:1348.3px;" width="14" height="14" viewBox="0 0 14 14"><rect x="0" y="5.7" width="13.5" height="2.6" fill="#fff"/><rect x="5.4" y="0" width="2.6" height="13.5" fill="#fff"/></svg><div class="a" style="left:1440px;top:1338px;width:258px;height:34px;background:#2c2c2c;"></div><div class="a" style="left:1690.0px;top:1338px;width:8px;height:34px;background:#4f8f78;"></div><div class="a" style="left:1064px;top:1380px;width:648px;height:46px;background:#2c2c2c;"></div><svg class="a" style="left:1078.5px;top:1399.0px;" width="15" height="11" viewBox="0 0 15 11"><path d="M0 0 L15 0 L7.5 11 Z" fill="#8c8c8c"/></svg><div class="a" style="left:1106px;top:1379px;width:300px;height:46px;line-height:46px;text-align:left;white-space:nowrap;"><span style="display:inline-block;transform:scaleX(0.995);transform-origin:left center">CrossFader</span></div><div class="a" style="left:1064px;top:1428px;width:648px;height:46px;background:#141312;"></div><div class="a" style="left:1064px;top:1427px;width:164px;height:46px;line-height:46px;text-align:right;white-space:nowrap;"><span style="display:inline-block;transform:scaleX(1.010);transform-origin:right center">Blend Mode</span></div><div class="a" style="left:1236px;top:1428px;width:2px;height:46px;background:#000;"></div><div class="a" style="left:1249px;top:1427px;width:120px;height:46px;line-height:46px;text-align:left;white-space:nowrap;"><span style="display:inline-block;transform:scaleX(1.033);transform-origin:left center">Alpha</span></div><svg class="a" style="left:1360.0px;top:1446.0px;" width="16" height="9" viewBox="0 0 16 9"><path d="M0 0 L16 0 L8.0 9 Z" fill="#fff"/></svg><div class="a" style="left:1664px;top:1428px;width:2px;height:44px;background:#000;"></div><div class="a" style="left:1666px;top:1428px;width:46px;height:46px;line-height:46px;text-align:center;white-space:nowrap;padding-right:6px;"><span style="display:inline-block;transform:scaleX(0.894);transform-origin:center center">P</span></div><svg class="a" style="left:1695.0px;top:1458.0px;" width="6" height="4" viewBox="0 0 6 4"><path d="M0 0 L5.4 0 L2.7 4 Z" fill="#fff"/></svg><div class="a" style="left:1064px;top:1476px;width:648px;height:46px;background:#141312;"></div><div class="a" style="left:1064px;top:1475px;width:160px;height:46px;line-height:46px;text-align:right;white-space:nowrap;"><span style="display:inline-block;transform:scaleX(1.046);transform-origin:right center">Behaviour</span></div><div class="a" style="left:1236px;top:1476px;width:2px;height:46px;background:#000;"></div><div class="a" style="left:1249px;top:1475px;width:120px;height:46px;line-height:46px;text-align:left;white-space:nowrap;"><span style="display:inline-block;transform:scaleX(1.016);transform-origin:left center">Cut</span></div><svg class="a" style="left:1412.0px;top:1494.0px;" width="16" height="9" viewBox="0 0 16 9"><path d="M0 0 L16 0 L8.0 9 Z" fill="#fff"/></svg><div class="a" style="left:1064px;top:1524px;width:648px;height:46px;background:#141312;"></div><div class="a" style="left:1064px;top:1523px;width:160px;height:46px;line-height:46px;text-align:right;white-space:nowrap;"><span style="display:inline-block;transform:scaleX(1.008);transform-origin:right center">Curve</span></div><div class="a" style="left:1236px;top:1524px;width:2px;height:46px;background:#000;"></div><div class="a" style="left:1249px;top:1523px;width:120px;height:46px;line-height:46px;text-align:left;white-space:nowrap;"><span style="display:inline-block;transform:scaleX(1.037);transform-origin:left center">Linear</span></div><svg class="a" style="left:1392.0px;top:1542.0px;" width="16" height="9" viewBox="0 0 16 9"><path d="M0 0 L16 0 L8.0 9 Z" fill="#fff"/></svg><div class="a" style="left:1064px;top:1572px;width:504px;height:46px;background:#285043;"></div><div class="a" style="left:1570px;top:1572px;width:46px;height:46px;background:#285043;"></div><div class="a" style="left:1570px;top:1571px;width:46px;height:46px;line-height:46px;text-align:center;white-space:nowrap;"><span style="display:inline-block;transform:scaleX(0.962);transform-origin:center center">B</span></div><div class="a" style="left:1618px;top:1572px;width:46px;height:46px;background:#285043;line-height:46px;text-align:center;white-space:nowrap;padding-right:6px;"><span style="display:inline-block;transform:scaleX(0.894);transform-origin:center center">P</span></div><svg class="a" style="left:1647.0px;top:1602.0px;" width="6" height="4" viewBox="0 0 6 4"><path d="M0 0 L5.4 0 L2.7 4 Z" fill="#fff"/></svg><div class="a" style="left:1666px;top:1572px;width:46px;height:46px;background:#285043;"></div><svg class="a" style="left:1679px;top:1585.5px;" width="20" height="20" viewBox="0 0 20 20"><path d="M2 2 L18 18 M18 2 L2 18" stroke="#fff" stroke-width="3" fill="none"/></svg><div class="a" style="left:1298px;top:1576px;width:256px;height:38px;background:#2c2c2c;"></div><div class="a" style="left:1546px;top:1576px;width:8px;height:38px;background:#4f8f78;"></div><svg class="a" style="left:1080.0px;top:1587.0px;" width="12" height="16" viewBox="0 0 12 16"><path d="M0 0 L12 8.0 L0 16 Z" fill="#8c8c8c"/></svg><div class="a" style="left:1106px;top:1571px;width:200px;height:46px;line-height:46px;text-align:left;white-space:nowrap;"><span style="display:inline-block;transform:scaleX(0.971);transform-origin:left center">Shift RGB</span></div><div class="a" style="left:1064px;top:1620px;width:504px;height:46px;background:#285043;"></div><div class="a" style="left:1570px;top:1620px;width:46px;height:46px;background:#285043;"></div><div class="a" style="left:1570px;top:1619px;width:46px;height:46px;line-height:46px;text-align:center;white-space:nowrap;"><span style="display:inline-block;transform:scaleX(0.962);transform-origin:center center">B</span></div><div class="a" style="left:1618px;top:1620px;width:46px;height:46px;background:#285043;line-height:46px;text-align:center;white-space:nowrap;padding-right:6px;"><span style="display:inline-block;transform:scaleX(0.894);transform-origin:center center">P</span></div><svg class="a" style="left:1647.0px;top:1650.0px;" width="6" height="4" viewBox="0 0 6 4"><path d="M0 0 L5.4 0 L2.7 4 Z" fill="#fff"/></svg><div class="a" style="left:1666px;top:1620px;width:46px;height:46px;background:#285043;"></div><svg class="a" style="left:1679px;top:1633.5px;" width="20" height="20" viewBox="0 0 20 20"><path d="M2 2 L18 18 M18 2 L2 18" stroke="#fff" stroke-width="3" fill="none"/></svg><div class="a" style="left:1298px;top:1624px;width:256px;height:38px;background:#2c2c2c;"></div><div class="a" style="left:1546px;top:1624px;width:8px;height:38px;background:#4f8f78;"></div><svg class="a" style="left:1080.0px;top:1635.0px;" width="12" height="16" viewBox="0 0 12 16"><path d="M0 0 L12 8.0 L0 16 Z" fill="#8c8c8c"/></svg><div class="a" style="left:1106px;top:1619px;width:200px;height:46px;line-height:46px;text-align:left;white-space:nowrap;"><span style="display:inline-block;transform:scaleX(1.021);transform-origin:left center">Hue Rotate</span></div><div class="a" style="left:1064px;top:1668px;width:504px;height:46px;background:#285043;"></div><div class="a" style="left:1570px;top:1668px;width:46px;height:46px;background:#285043;"></div><div class="a" style="left:1570px;top:1667px;width:46px;height:46px;line-height:46px;text-align:center;white-space:nowrap;"><span style="display:inline-block;transform:scaleX(0.962);transform-origin:center center">B</span></div><div class="a" style="left:1618px;top:1668px;width:46px;height:46px;background:#285043;line-height:46px;text-align:center;white-space:nowrap;padding-right:6px;"><span style="display:inline-block;transform:scaleX(0.894);transform-origin:center center">P</span></div><svg class="a" style="left:1647.0px;top:1698.0px;" width="6" height="4" viewBox="0 0 6 4"><path d="M0 0 L5.4 0 L2.7 4 Z" fill="#fff"/></svg><div class="a" style="left:1666px;top:1668px;width:46px;height:46px;background:#285043;"></div><svg class="a" style="left:1679px;top:1681.5px;" width="20" height="20" viewBox="0 0 20 20"><path d="M2 2 L18 18 M18 2 L2 18" stroke="#fff" stroke-width="3" fill="none"/></svg><div class="a" style="left:1298px;top:1672px;width:256px;height:38px;background:#2c2c2c;"></div><div class="a" style="left:1546px;top:1672px;width:8px;height:38px;background:#4f8f78;"></div><svg class="a" style="left:1080.0px;top:1683.0px;" width="12" height="16" viewBox="0 0 12 16"><path d="M0 0 L12 8.0 L0 16 Z" fill="#8c8c8c"/></svg><div class="a" style="left:1106px;top:1667px;width:200px;height:46px;line-height:46px;text-align:left;white-space:nowrap;"><span style="display:inline-block;transform:scaleX(1.020);transform-origin:left center">Wave Warp</span></div><div class="a" style="left:1064px;top:1716px;width:504px;height:46px;background:#285043;"></div><div class="a" style="left:1570px;top:1716px;width:46px;height:46px;background:#285043;"></div><div class="a" style="left:1570px;top:1715px;width:46px;height:46px;line-height:46px;text-align:center;white-space:nowrap;"><span style="display:inline-block;transform:scaleX(0.962);transform-origin:center center">B</span></div><div class="a" style="left:1618px;top:1716px;width:46px;height:46px;background:#285043;line-height:46px;text-align:center;white-space:nowrap;padding-right:6px;"><span style="display:inline-block;transform:scaleX(0.894);transform-origin:center center">P</span></div><svg class="a" style="left:1647.0px;top:1746.0px;" width="6" height="4" viewBox="0 0 6 4"><path d="M0 0 L5.4 0 L2.7 4 Z" fill="#fff"/></svg><div class="a" style="left:1666px;top:1716px;width:46px;height:46px;background:#285043;"></div><svg class="a" style="left:1679px;top:1729.5px;" width="20" height="20" viewBox="0 0 20 20"><path d="M2 2 L18 18 M18 2 L2 18" stroke="#fff" stroke-width="3" fill="none"/></svg><svg class="a" style="left:1298px;top:1720px;" width="256" height="38" viewBox="0 0 256 38"><rect width="256" height="38" fill="url(#chk2)"/><rect width="256" height="38" fill="url(#fadeblk)"/></svg><div class="a" style="left:1298px;top:1720px;width:8px;height:38px;background:#4f8f78;"></div><svg class="a" style="left:1080.0px;top:1731.0px;" width="12" height="16" viewBox="0 0 12 16"><path d="M0 0 L12 8.0 L0 16 Z" fill="#8c8c8c"/></svg><div class="a" style="left:1106px;top:1715px;width:200px;height:46px;line-height:46px;text-align:left;white-space:nowrap;"><span style="display:inline-block;transform:scaleX(1.026);transform-origin:left center">PolarKaleido</span></div><div class="a" style="left:1064px;top:1764px;width:504px;height:46px;background:#285043;"></div><div class="a" style="left:1570px;top:1764px;width:46px;height:46px;background:#285043;"></div><div class="a" style="left:1570px;top:1763px;width:46px;height:46px;line-height:46px;text-align:center;white-space:nowrap;"><span style="display:inline-block;transform:scaleX(0.962);transform-origin:center center">B</span></div><div class="a" style="left:1618px;top:1764px;width:46px;height:46px;background:#285043;line-height:46px;text-align:center;white-space:nowrap;padding-right:6px;"><span style="display:inline-block;transform:scaleX(0.894);transform-origin:center center">P</span></div><svg class="a" style="left:1647.0px;top:1794.0px;" width="6" height="4" viewBox="0 0 6 4"><path d="M0 0 L5.4 0 L2.7 4 Z" fill="#fff"/></svg><div class="a" style="left:1666px;top:1764px;width:46px;height:46px;background:#285043;"></div><svg class="a" style="left:1679px;top:1777.5px;" width="20" height="20" viewBox="0 0 20 20"><path d="M2 2 L18 18 M18 2 L2 18" stroke="#fff" stroke-width="3" fill="none"/></svg><svg class="a" style="left:1298px;top:1768px;" width="256" height="38" viewBox="0 0 256 38"><rect width="256" height="38" fill="url(#chk2)"/><rect width="256" height="38" fill="url(#fadeblk)"/></svg><div class="a" style="left:1298px;top:1768px;width:8px;height:38px;background:#4f8f78;"></div><svg class="a" style="left:1080.0px;top:1779.0px;" width="12" height="16" viewBox="0 0 12 16"><path d="M0 0 L12 8.0 L0 16 Z" fill="#8c8c8c"/></svg><div class="a" style="left:1106px;top:1763px;width:200px;height:46px;line-height:46px;text-align:left;white-space:nowrap;"><span style="display:inline-block;transform:scaleX(1.077);transform-origin:left center">Mirror Quad</span></div><div class="a" style="left:1064px;top:1812px;width:504px;height:46px;background:#285043;"></div><div class="a" style="left:1570px;top:1812px;width:46px;height:46px;background:#285043;"></div><div class="a" style="left:1570px;top:1811px;width:46px;height:46px;line-height:46px;text-align:center;white-space:nowrap;"><span style="display:inline-block;transform:scaleX(0.962);transform-origin:center center">B</span></div><div class="a" style="left:1618px;top:1812px;width:46px;height:46px;background:#285043;line-height:46px;text-align:center;white-space:nowrap;padding-right:6px;"><span style="display:inline-block;transform:scaleX(0.894);transform-origin:center center">P</span></div><svg class="a" style="left:1647.0px;top:1842.0px;" width="6" height="4" viewBox="0 0 6 4"><path d="M0 0 L5.4 0 L2.7 4 Z" fill="#fff"/></svg><div class="a" style="left:1666px;top:1812px;width:46px;height:46px;background:#285043;"></div><svg class="a" style="left:1679px;top:1825.5px;" width="20" height="20" viewBox="0 0 20 20"><path d="M2 2 L18 18 M18 2 L2 18" stroke="#fff" stroke-width="3" fill="none"/></svg><div class="a" style="left:1298px;top:1816px;width:256px;height:38px;background:#2c2c2c;"></div><div class="a" style="left:1546px;top:1816px;width:8px;height:38px;background:#4f8f78;"></div><svg class="a" style="left:1080.0px;top:1827.0px;" width="12" height="16" viewBox="0 0 12 16"><path d="M0 0 L12 8.0 L0 16 Z" fill="#8c8c8c"/></svg><div class="a" style="left:1106px;top:1811px;width:200px;height:46px;line-height:46px;text-align:left;white-space:nowrap;"><span style="display:inline-block;transform:scaleX(1.057);transform-origin:left center">Twitch</span></div><div class="a" style="left:1064px;top:1860px;width:504px;height:46px;background:#285043;"></div><div class="a" style="left:1570px;top:1860px;width:46px;height:46px;background:#285043;"></div><div class="a" style="left:1570px;top:1859px;width:46px;height:46px;line-height:46px;text-align:center;white-space:nowrap;"><span style="display:inline-block;transform:scaleX(0.962);transform-origin:center center">B</span></div><div class="a" style="left:1618px;top:1860px;width:46px;height:46px;background:#285043;line-height:46px;text-align:center;white-space:nowrap;padding-right:6px;"><span style="display:inline-block;transform:scaleX(0.894);transform-origin:center center">P</span></div><svg class="a" style="left:1647.0px;top:1890.0px;" width="6" height="4" viewBox="0 0 6 4"><path d="M0 0 L5.4 0 L2.7 4 Z" fill="#fff"/></svg><div class="a" style="left:1666px;top:1860px;width:46px;height:46px;background:#285043;"></div><svg class="a" style="left:1679px;top:1873.5px;" width="20" height="20" viewBox="0 0 20 20"><path d="M2 2 L18 18 M18 2 L2 18" stroke="#fff" stroke-width="3" fill="none"/></svg><div class="a" style="left:1298px;top:1864px;width:256px;height:38px;background:#2c2c2c;"></div><div class="a" style="left:1546px;top:1864px;width:8px;height:38px;background:#4f8f78;"></div><svg class="a" style="left:1080.0px;top:1875.0px;" width="12" height="16" viewBox="0 0 12 16"><path d="M0 0 L12 8.0 L0 16 Z" fill="#8c8c8c"/></svg><div class="a" style="left:1106px;top:1859px;width:200px;height:46px;line-height:46px;text-align:left;white-space:nowrap;"><span style="display:inline-block;transform:scaleX(1.028);transform-origin:left center">Trails</span></div><div class="a" style="left:1064px;top:1908px;width:600px;height:46px;background:#285043;"></div><div class="a" style="left:1666px;top:1908px;width:46px;height:46px;background:#285043;line-height:46px;text-align:center;white-space:nowrap;padding-right:6px;"><span style="display:inline-block;transform:scaleX(0.894);transform-origin:center center">P</span></div><svg class="a" style="left:1695.0px;top:1938.0px;" width="6" height="4" viewBox="0 0 6 4"><path d="M0 0 L5.4 0 L2.7 4 Z" fill="#fff"/></svg><svg class="a" style="left:1080.0px;top:1923.0px;" width="12" height="16" viewBox="0 0 12 16"><path d="M0 0 L12 8.0 L0 16 Z" fill="#8c8c8c"/></svg><div class="a" style="left:1106px;top:1907px;width:200px;height:46px;line-height:46px;text-align:left;white-space:nowrap;"><span style="display:inline-block;transform:scaleX(1.071);transform-origin:left center">Transform</span></div><div class="a" style="left:1064px;top:1954px;width:648px;height:232px;background:#0a0a0a;"></div><div class="a" style="left:1064px;top:2046px;width:648px;height:48px;line-height:48px;text-align:center;white-space:nowrap;color:#2b2b2b;"><span style="display:inline-block;transform:scaleX(1.037);transform-origin:center center">Drop effect or mask. Double click to search.</span></div>
<div class="a" style="left:1718px;top:974px;width:734px;height:45px;background:#2c2c2c;line-height:45px;text-align:center;white-space:nowrap;font-size:24.5px;color:#ececec;border-radius:4px 4px 0 0;line-height:43px;"><span style="display:inline-block;transform:scaleX(1.006);transform-origin:center center">Clip</span></div><div class="a" style="left:1718px;top:1022px;width:734px;height:68px;background:#ff0000;box-shadow:inset 0 0 6px rgba(120,0,0,0.55);"></div><div class="a" style="left:1732px;top:1034px;width:250px;height:43px;background:#680000;line-height:43px;text-align:left;white-space:nowrap;padding-left:11px;border-radius:6px;"><span style="display:inline-block;transform:scaleX(0.938);transform-origin:left center">SL OUT</span></div><svg class="a" style="left:2355.0px;top:1046.0px;" width="24.0" height="24.0" viewBox="0 0 24.0 24.0"><circle cx="9.5" cy="9.5" r="6.5" fill="none" stroke="#e8e8e8" stroke-width="3.8"/><path d="M14.375 14.375 L21.0 21.0" stroke="#e8e8e8" stroke-width="4.8" stroke-linecap="round"/></svg><svg class="a" style="left:2401.5px;top:1044.5px;" width="25.0" height="25.0" viewBox="0 0 25.0 25.0"><path d="M23.86 10.70 L23.86 14.30 L20.77 14.49 L19.76 16.95 L21.80 19.26 L19.26 21.80 L16.95 19.76 L14.49 20.77 L14.30 23.86 L10.70 23.86 L10.51 20.77 L8.05 19.76 L5.74 21.80 L3.20 19.26 L5.24 16.95 L4.23 14.49 L1.14 14.30 L1.14 10.70 L4.23 10.51 L5.24 8.05 L3.20 5.74 L5.74 3.20 L8.05 5.24 L10.51 4.23 L10.70 1.14 L14.30 1.14 L14.49 4.23 L16.95 5.24 L19.26 3.20 L21.80 5.74 L19.76 8.05 L20.77 10.51 Z M16.64 12.50 A4.14 4.14 0 1 0 8.36 12.50 A4.14 4.14 0 1 0 16.64 12.50 Z" fill="#e8e8e8" fill-rule="evenodd"/></svg><div class="a" style="left:1718px;top:1092px;width:734px;height:46px;background:#2c2c2c;"></div><svg class="a" style="left:1732.5px;top:1111.0px;" width="15" height="11" viewBox="0 0 15 11"><path d="M0 0 L15 0 L7.5 11 Z" fill="#8c8c8c"/></svg><div class="a" style="left:1760px;top:1091px;width:300px;height:46px;line-height:46px;text-align:left;white-space:nowrap;"><span style="display:inline-block;transform:scaleX(1.070);transform-origin:left center">Transport</span></div><div class="a" style="left:2238px;top:1091px;width:160px;height:46px;line-height:46px;text-align:right;white-space:nowrap;"><span style="display:inline-block;transform:scaleX(1.052);transform-origin:right center">Timeline</span></div><svg class="a" style="left:2417.0px;top:1110.5px;" width="16" height="9" viewBox="0 0 16 9"><path d="M0 0 L16 0 L8.0 9 Z" fill="#fff"/></svg><div class="a" style="left:1718px;top:1140px;width:734px;height:46px;background:#141312;"></div><div class="a" style="left:1718px;top:1139px;width:160px;height:46px;line-height:46px;text-align:right;white-space:nowrap;"><span style="display:inline-block;transform:scaleX(1.082);transform-origin:right center">Duration</span></div><div class="a" style="left:1890px;top:1140px;width:2px;height:46px;background:#000;"></div><div class="a" style="left:1903px;top:1139px;width:120px;height:46px;line-height:46px;text-align:left;white-space:nowrap;"><span style="display:inline-block;transform:scaleX(0.971);transform-origin:left center">5 s</span></div><svg class="a" style="left:2003px;top:1156px;" width="12" height="14" viewBox="0 0 12 14"><rect x="0" y="6" width="12" height="2.6" fill="#fff"/></svg><svg class="a" style="left:2046.5px;top:1156.3px;" width="14" height="14" viewBox="0 0 14 14"><rect x="0" y="5.7" width="13.5" height="2.6" fill="#fff"/><rect x="5.4" y="0" width="2.6" height="13.5" fill="#fff"/></svg><div class="a" style="left:2089px;top:1139px;width:40px;height:46px;line-height:46px;text-align:left;white-space:nowrap;"><span style="display:inline-block;transform:scaleX(1.115);transform-origin:left center">/2</span></div><div class="a" style="left:2133px;top:1139px;width:40px;height:46px;line-height:46px;text-align:left;white-space:nowrap;"><span style="display:inline-block;transform:scaleX(0.993);transform-origin:left center">×2</span></div><div class="a" style="left:1718px;top:1188px;width:734px;height:46px;background:#2c2c2c;"></div><svg class="a" style="left:1734.0px;top:1203.0px;" width="12" height="16" viewBox="0 0 12 16"><path d="M0 0 L12 8.0 L0 16 Z" fill="#8c8c8c"/></svg><div class="a" style="left:1760px;top:1187px;width:300px;height:46px;line-height:46px;text-align:left;white-space:nowrap;"><span style="display:inline-block;transform:scaleX(1.089);transform-origin:left center">Autopilot</span></div><div class="a" style="left:1718px;top:1236px;width:686px;height:46px;background:#285043;"></div><svg class="a" style="left:1732.5px;top:1255.0px;" width="15" height="11" viewBox="0 0 15 11"><path d="M0 0 L15 0 L7.5 11 Z" fill="#8c8c8c"/></svg><div class="a" style="left:1760px;top:1235px;width:300px;height:46px;line-height:46px;text-align:left;white-space:nowrap;"><span style="display:inline-block;transform:scaleX(1.018);transform-origin:left center">Solid Color</span></div><div class="a" style="left:2406px;top:1236px;width:46px;height:46px;background:#285043;line-height:46px;text-align:center;white-space:nowrap;padding-right:6px;"><span style="display:inline-block;transform:scaleX(0.894);transform-origin:center center">P</span></div><svg class="a" style="left:2435.0px;top:1266.0px;" width="6" height="4" viewBox="0 0 6 4"><path d="M0 0 L5.4 0 L2.7 4 Z" fill="#fff"/></svg><div class="a" style="left:1718px;top:1284px;width:734px;height:46px;background:#141312;"></div><svg class="a" style="left:1734.0px;top:1299.0px;" width="12" height="16" viewBox="0 0 12 16"><path d="M0 0 L12 8.0 L0 16 Z" fill="#8c8c8c"/></svg><div class="a" style="left:1718px;top:1283px;width:160px;height:46px;line-height:46px;text-align:right;white-space:nowrap;"><span style="display:inline-block;transform:scaleX(1.036);transform-origin:right center">Color</span></div><div class="a" style="left:1890px;top:1284px;width:2px;height:46px;background:#000;"></div><div class="a" style="left:1898px;top:1289px;width:80px;height:35px;background:#000;border-radius:5px;"></div><div class="a" style="left:1718px;top:1332px;width:734px;height:94px;background:#285043;"></div><svg class="a" style="left:1734.0px;top:1347.0px;" width="12" height="16" viewBox="0 0 12 16"><path d="M0 0 L12 8.0 L0 16 Z" fill="#8c8c8c"/></svg><div class="a" style="left:1762px;top:1341px;width:98px;height:75px;background:#ff0000;border:1px solid #7a8a80;"></div><div class="a" style="left:1880px;top:1336px;width:200px;height:30px;line-height:30px;text-align:left;white-space:nowrap;font-size:20px;color:#a8a8a8;"><span style="display:inline-block;transform:scaleX(1.018);transform-origin:left center">Solid Color</span></div><svg class="a" style="left:2369px;top:1348px;" width="18" height="18" viewBox="0 0 18 18"><path d="M3 15 L15 3" stroke="#fff" stroke-width="3"/><path d="M8 1.5 L16.5 1.5 L16.5 10 Z M1.5 8 L1.5 16.5 L10 16.5 Z" fill="#fff"/></svg><svg class="a" style="left:2418px;top:1347px;" width="20" height="20" viewBox="0 0 20 20"><path d="M2 2 L18 18 M18 2 L2 18" stroke="#fff" stroke-width="3" fill="none"/></svg><div class="a" style="left:2316px;top:1385px;width:128px;height:31px;background:#86fcd4;border-radius:6px;"></div><div class="a" style="left:2318px;top:1385px;width:28px;height:31px;line-height:31px;text-align:center;white-space:nowrap;font-size:18px;color:#000;"><span style="display:inline-block;transform:scaleX(0.847);transform-origin:center center">R</span></div><div class="a" style="left:2350px;top:1385px;width:28px;height:31px;line-height:31px;text-align:center;white-space:nowrap;font-size:18px;color:#000;"><span style="display:inline-block;transform:scaleX(0.927);transform-origin:center center">G</span></div><div class="a" style="left:2382px;top:1385px;width:28px;height:31px;line-height:31px;text-align:center;white-space:nowrap;font-size:18px;color:#000;"><span style="display:inline-block;transform:scaleX(0.962);transform-origin:center center">B</span></div><div class="a" style="left:2414px;top:1385px;width:28px;height:31px;line-height:31px;text-align:center;white-space:nowrap;font-size:18px;color:#000;"><span style="display:inline-block;transform:scaleX(0.939);transform-origin:center center">A</span></div><div class="a" style="left:1718px;top:1428px;width:686px;height:46px;background:#285043;"></div><svg class="a" style="left:1734.0px;top:1443.0px;" width="12" height="16" viewBox="0 0 12 16"><path d="M0 0 L12 8.0 L0 16 Z" fill="#8c8c8c"/></svg><div class="a" style="left:1760px;top:1427px;width:300px;height:46px;line-height:46px;text-align:left;white-space:nowrap;"><span style="display:inline-block;transform:scaleX(1.071);transform-origin:left center">Transform</span></div><div class="a" style="left:2406px;top:1428px;width:46px;height:46px;background:#285043;line-height:46px;text-align:center;white-space:nowrap;padding-right:6px;"><span style="display:inline-block;transform:scaleX(0.894);transform-origin:center center">P</span></div><svg class="a" style="left:2435.0px;top:1458.0px;" width="6" height="4" viewBox="0 0 6 4"><path d="M0 0 L5.4 0 L2.7 4 Z" fill="#fff"/></svg><div class="a" style="left:1718px;top:1476px;width:590px;height:46px;background:#285043;"></div><svg class="a" style="left:1732.5px;top:1495.0px;" width="15" height="11" viewBox="0 0 15 11"><path d="M0 0 L15 0 L7.5 11 Z" fill="#8c8c8c"/></svg><div class="a" style="left:1760px;top:1475px;width:300px;height:46px;line-height:46px;text-align:left;white-space:nowrap;"><span style="display:inline-block;transform:scaleX(1.030);transform-origin:left center">Crop</span></div><div class="a" style="left:2310px;top:1476px;width:46px;height:46px;background:#285043;"></div><div class="a" style="left:2310px;top:1475px;width:46px;height:46px;line-height:46px;text-align:center;white-space:nowrap;"><span style="display:inline-block;transform:scaleX(0.962);transform-origin:center center">B</span></div><div class="a" style="left:2358px;top:1476px;width:46px;height:46px;background:#285043;line-height:46px;text-align:center;white-space:nowrap;padding-right:6px;"><span style="display:inline-block;transform:scaleX(0.894);transform-origin:center center">P</span></div><svg class="a" style="left:2387.0px;top:1506.0px;" width="6" height="4" viewBox="0 0 6 4"><path d="M0 0 L5.4 0 L2.7 4 Z" fill="#fff"/></svg><div class="a" style="left:2406px;top:1476px;width:46px;height:46px;background:#285043;"></div><svg class="a" style="left:2419px;top:1489.5px;" width="20" height="20" viewBox="0 0 20 20"><path d="M2 2 L18 18 M18 2 L2 18" stroke="#fff" stroke-width="3" fill="none"/></svg><div class="a" style="left:1718px;top:1524px;width:734px;height:46px;background:#141312;"></div><div class="a" style="left:1718px;top:1523px;width:164px;height:46px;line-height:46px;text-align:right;white-space:nowrap;"><span style="display:inline-block;transform:scaleX(1.010);transform-origin:right center">Blend Mode</span></div><div class="a" style="left:1890px;top:1524px;width:2px;height:46px;background:#000;"></div><div class="a" style="left:1903px;top:1523px;width:120px;height:46px;line-height:46px;text-align:left;white-space:nowrap;"><span style="display:inline-block;transform:scaleX(1.033);transform-origin:left center">Alpha</span></div><svg class="a" style="left:2014.0px;top:1542.0px;" width="16" height="9" viewBox="0 0 16 9"><path d="M0 0 L16 0 L8.0 9 Z" fill="#fff"/></svg><div class="a" style="left:2404px;top:1524px;width:2px;height:44px;background:#000;"></div><div class="a" style="left:2406px;top:1524px;width:46px;height:46px;line-height:46px;text-align:center;white-space:nowrap;padding-right:6px;"><span style="display:inline-block;transform:scaleX(0.894);transform-origin:center center">P</span></div><svg class="a" style="left:2435.0px;top:1554.0px;" width="6" height="4" viewBox="0 0 6 4"><path d="M0 0 L5.4 0 L2.7 4 Z" fill="#fff"/></svg><div class="a" style="left:1718px;top:1572px;width:734px;height:46px;background:#141312;"></div><div class="a" style="left:1718px;top:1571px;width:160px;height:46px;line-height:46px;text-align:right;white-space:nowrap;"><span style="display:inline-block;transform:scaleX(1.032);transform-origin:right center">Opacity</span></div><div class="a" style="left:1890px;top:1572px;width:2px;height:46px;background:#000;"></div><div class="a" style="left:1903px;top:1571px;width:120px;height:46px;line-height:46px;text-align:left;white-space:nowrap;"><span style="display:inline-block;transform:scaleX(0.977);transform-origin:left center">100 %</span></div><svg class="a" style="left:2003px;top:1588px;" width="12" height="14" viewBox="0 0 12 14"><rect x="0" y="6" width="12" height="2.6" fill="#fff"/></svg><svg class="a" style="left:2046.5px;top:1588.3px;" width="14" height="14" viewBox="0 0 14 14"><rect x="0" y="5.7" width="13.5" height="2.6" fill="#fff"/><rect x="5.4" y="0" width="2.6" height="13.5" fill="#fff"/></svg><div class="a" style="left:2094px;top:1578px;width:344px;height:34px;background:#2c2c2c;"></div><div class="a" style="left:2430.0px;top:1578px;width:8px;height:34px;background:#4f8f78;"></div><div class="a" style="left:1718px;top:1620px;width:734px;height:46px;background:#141312;"></div><div class="a" style="left:1718px;top:1619px;width:160px;height:46px;line-height:46px;text-align:right;white-space:nowrap;"><span style="display:inline-block;transform:scaleX(1.052);transform-origin:right center">Left</span></div><div class="a" style="left:1890px;top:1620px;width:2px;height:46px;background:#000;"></div><div class="a" style="left:1903px;top:1619px;width:120px;height:46px;line-height:46px;text-align:left;white-space:nowrap;"><span style="display:inline-block;transform:scaleX(1.018);transform-origin:left center">2560</span></div><svg class="a" style="left:2003px;top:1636px;" width="12" height="14" viewBox="0 0 12 14"><rect x="0" y="6" width="12" height="2.6" fill="#fff"/></svg><svg class="a" style="left:2046.5px;top:1636.3px;" width="14" height="14" viewBox="0 0 14 14"><rect x="0" y="5.7" width="13.5" height="2.6" fill="#fff"/><rect x="5.4" y="0" width="2.6" height="13.5" fill="#fff"/></svg><div class="a" style="left:1718px;top:1668px;width:734px;height:46px;background:#141312;"></div><div class="a" style="left:1718px;top:1667px;width:160px;height:46px;line-height:46px;text-align:right;white-space:nowrap;"><span style="display:inline-block;transform:scaleX(1.012);transform-origin:right center">Right</span></div><div class="a" style="left:1890px;top:1668px;width:2px;height:46px;background:#000;"></div><div class="a" style="left:1903px;top:1667px;width:120px;height:46px;line-height:46px;text-align:left;white-space:nowrap;"><span style="display:inline-block;transform:scaleX(1.018);transform-origin:left center">3840</span></div><svg class="a" style="left:2003px;top:1684px;" width="12" height="14" viewBox="0 0 12 14"><rect x="0" y="6" width="12" height="2.6" fill="#fff"/></svg><svg class="a" style="left:2046.5px;top:1684.3px;" width="14" height="14" viewBox="0 0 14 14"><rect x="0" y="5.7" width="13.5" height="2.6" fill="#fff"/><rect x="5.4" y="0" width="2.6" height="13.5" fill="#fff"/></svg><div class="a" style="left:1718px;top:1716px;width:734px;height:46px;background:#141312;"></div><div class="a" style="left:1718px;top:1715px;width:160px;height:46px;line-height:46px;text-align:right;white-space:nowrap;"><span style="display:inline-block;transform:scaleX(1.087);transform-origin:right center">Top</span></div><div class="a" style="left:1890px;top:1716px;width:2px;height:46px;background:#000;"></div><div class="a" style="left:1903px;top:1715px;width:120px;height:46px;line-height:46px;text-align:left;white-space:nowrap;"><span style="display:inline-block;transform:scaleX(1.018);transform-origin:left center">0</span></div><svg class="a" style="left:2003px;top:1732px;" width="12" height="14" viewBox="0 0 12 14"><rect x="0" y="6" width="12" height="2.6" fill="#fff"/></svg><svg class="a" style="left:2046.5px;top:1732.3px;" width="14" height="14" viewBox="0 0 14 14"><rect x="0" y="5.7" width="13.5" height="2.6" fill="#fff"/><rect x="5.4" y="0" width="2.6" height="13.5" fill="#fff"/></svg><div class="a" style="left:1718px;top:1764px;width:734px;height:46px;background:#141312;"></div><div class="a" style="left:1718px;top:1763px;width:160px;height:46px;line-height:46px;text-align:right;white-space:nowrap;"><span style="display:inline-block;transform:scaleX(1.091);transform-origin:right center">Bottom</span></div><div class="a" style="left:1890px;top:1764px;width:2px;height:46px;background:#000;"></div><div class="a" style="left:1903px;top:1763px;width:120px;height:46px;line-height:46px;text-align:left;white-space:nowrap;"><span style="display:inline-block;transform:scaleX(1.018);transform-origin:left center">2160</span></div><svg class="a" style="left:2003px;top:1780px;" width="12" height="14" viewBox="0 0 12 14"><rect x="0" y="6" width="12" height="2.6" fill="#fff"/></svg><svg class="a" style="left:2046.5px;top:1780.3px;" width="14" height="14" viewBox="0 0 14 14"><rect x="0" y="5.7" width="13.5" height="2.6" fill="#fff"/><rect x="5.4" y="0" width="2.6" height="13.5" fill="#fff"/></svg><div class="a" style="left:1718px;top:1812px;width:734px;height:46px;background:#141312;"></div><div class="a" style="left:1718px;top:1811px;width:160px;height:46px;line-height:46px;text-align:right;white-space:nowrap;"><span style="display:inline-block;transform:scaleX(1.075);transform-origin:right center">Invert</span></div><div class="a" style="left:1890px;top:1812px;width:2px;height:46px;background:#000;"></div><div class="a" style="left:1901px;top:1823px;width:24px;height:24px;border:2px solid #808080;border-radius:5px;"></div><div class="a" style="left:1718px;top:1860px;width:734px;height:46px;background:#141312;"></div><div class="a" style="left:1718px;top:1859px;width:160px;height:46px;line-height:46px;text-align:right;white-space:nowrap;"><span style="display:inline-block;transform:scaleX(0.972);transform-origin:right center">Black BG</span></div><div class="a" style="left:1890px;top:1860px;width:2px;height:46px;background:#000;"></div><div class="a" style="left:1901px;top:1871px;width:24px;height:24px;border:2px solid #808080;border-radius:5px;"></div><div class="a" style="left:1718px;top:1906px;width:734px;height:280px;background:#0a0a0a;"></div><div class="a" style="left:1718px;top:2022px;width:734px;height:48px;line-height:48px;text-align:center;white-space:nowrap;color:#2b2b2b;"><span style="display:inline-block;transform:scaleX(1.032);transform-origin:center center">Drop audio, video, mask, source or effect. Double click to search.</span></div>
<div class="a" style="left:2458px;top:974px;width:184px;height:46px;background:#2c2c2c;line-height:46px;text-align:center;white-space:nowrap;font-size:24.5px;color:#b4b4b4;border-radius:4px 4px 0 0;line-height:43px;"><span style="display:inline-block;transform:scaleX(0.953);transform-origin:center center">Slices</span></div><div class="a" style="left:2644px;top:974px;width:184px;height:46px;background:#2c2c2c;line-height:46px;text-align:center;white-space:nowrap;font-size:24.5px;color:#b4b4b4;border-radius:4px 4px 0 0;line-height:43px;"><span style="display:inline-block;transform:scaleX(1.042);transform-origin:center center">Notes</span></div><div class="a" style="left:2830px;top:974px;width:184px;height:46px;background:#2c2c2c;line-height:46px;text-align:center;white-space:nowrap;font-size:24.5px;color:#b4b4b4;border-radius:4px 4px 0 0;line-height:43px;"><span style="display:inline-block;transform:scaleX(0.966);transform-origin:center center">Files</span></div><div class="a" style="left:3016px;top:974px;width:184px;height:46px;background:#2c2c2c;line-height:46px;text-align:center;white-space:nowrap;font-size:24.5px;color:#b4b4b4;border-radius:4px 4px 0 0;line-height:43px;"><span style="display:inline-block;transform:scaleX(1.048);transform-origin:center center">Compositions</span></div><div class="a" style="left:3202px;top:974px;width:184px;height:46px;background:#252525;line-height:46px;text-align:center;white-space:nowrap;font-size:24.5px;color:#ffffff;border-radius:4px 4px 0 0;line-height:43px;"><span style="display:inline-block;transform:scaleX(1.010);transform-origin:center center">Effects</span></div><div class="a" style="left:3388px;top:974px;width:190px;height:46px;background:#2c2c2c;line-height:46px;text-align:center;white-space:nowrap;font-size:24.5px;color:#b4b4b4;border-radius:4px 4px 0 0;line-height:43px;"><span style="display:inline-block;transform:scaleX(0.996);transform-origin:center center">Sources</span></div><div class="a" style="left:2458px;top:1022px;width:1120px;height:68px;background:#2e2e2e;"></div><div class="a" style="left:2472px;top:1032px;width:1030px;height:46px;background:#0c0c0c;border-radius:6px;"></div><svg class="a" style="left:2485.5px;top:1043.5px;" width="25" height="25" viewBox="0 0 25 25"><circle cx="10" cy="10" r="7" fill="none" stroke="#86fcd4" stroke-width="4"/><path d="M15.25 15.25 L22 22" stroke="#86fcd4" stroke-width="5" stroke-linecap="round"/></svg><div class="a" style="left:2526px;top:1032px;width:200px;height:48px;line-height:48px;text-align:left;white-space:nowrap;"><span style="display:inline-block;transform:scaleX(1.069);transform-origin:left center">crop</span></div><svg class="a" style="left:3468px;top:1046px;" width="20" height="20" viewBox="0 0 20 20"><path d="M2 2 L18 18 M18 2 L2 18" stroke="#d0d0d0" stroke-width="2.6" fill="none"/></svg><svg class="a" style="left:3522px;top:1038px;" width="36" height="36" viewBox="0 0 36 36"><circle cx="18" cy="18" r="18" fill="#e6e6e6"/><path d="M18 8 L18 28 M8 18 L28 18" stroke="#222" stroke-width="3"/></svg><div class="a" style="left:2458px;top:1090px;width:1120px;height:1096px;background:#0a0a0a;"></div><svg class="a" style="left:2462.5px;top:1111.5px;" width="15" height="11" viewBox="0 0 15 11"><path d="M0 0 L15 0 L7.5 11 Z" fill="#8c8c8c"/></svg><div class="a" style="left:2492px;top:1090px;width:400px;height:48px;line-height:48px;text-align:left;white-space:nowrap;color:#ffffff;"><span style="display:inline-block;transform:scaleX(1.030);transform-origin:left center">Crop</span></div><div class="a" style="left:2532px;top:1138px;width:400px;height:48px;line-height:48px;text-align:left;white-space:nowrap;color:#c4c4c4;"><span style="display:inline-block;transform:scaleX(0.940);transform-origin:left center">12 OUT SR</span></div><div class="a" style="left:2532px;top:1186px;width:400px;height:48px;line-height:48px;text-align:left;white-space:nowrap;color:#c4c4c4;"><span style="display:inline-block;transform:scaleX(0.975);transform-origin:left center">ALL but SL</span></div><div class="a" style="left:2532px;top:1234px;width:400px;height:48px;line-height:48px;text-align:left;white-space:nowrap;color:#c4c4c4;"><span style="display:inline-block;transform:scaleX(0.892);transform-origin:left center">CENTER CROP</span></div><div class="a" style="left:2532px;top:1282px;width:400px;height:48px;line-height:48px;text-align:left;white-space:nowrap;color:#c4c4c4;"><span style="display:inline-block;transform:scaleX(0.946);transform-origin:left center">C HALFWAY OUT</span></div><div class="a" style="left:2532px;top:1330px;width:400px;height:48px;line-height:48px;text-align:left;white-space:nowrap;color:#c4c4c4;"><span style="display:inline-block;transform:scaleX(0.918);transform-origin:left center">NO CENTER</span></div><div class="a" style="left:2532px;top:1378px;width:400px;height:48px;line-height:48px;text-align:left;white-space:nowrap;color:#c4c4c4;"><span style="display:inline-block;transform:scaleX(1.054);transform-origin:left center">only center</span></div><div class="a" style="left:2532px;top:1426px;width:400px;height:48px;line-height:48px;text-align:left;white-space:nowrap;color:#c4c4c4;"><span style="display:inline-block;transform:scaleX(0.968);transform-origin:left center">Only SL</span></div><div class="a" style="left:2532px;top:1474px;width:400px;height:48px;line-height:48px;text-align:left;white-space:nowrap;color:#c4c4c4;"><span style="display:inline-block;transform:scaleX(0.951);transform-origin:left center">Only SR</span></div><div class="a" style="left:2532px;top:1522px;width:400px;height:48px;line-height:48px;text-align:left;white-space:nowrap;color:#c4c4c4;"><span style="display:inline-block;transform:scaleX(0.938);transform-origin:left center">QUEEN C OUT</span></div><div class="a" style="left:2492px;top:1570px;width:400px;height:48px;line-height:48px;text-align:left;white-space:nowrap;color:#ffffff;"><span style="display:inline-block;transform:scaleX(1.018);transform-origin:left center">Keystone Crop</span></div><svg class="a" style="left:2462.5px;top:1639.5px;" width="15" height="11" viewBox="0 0 15 11"><path d="M0 0 L15 0 L7.5 11 Z" fill="#8c8c8c"/></svg><div class="a" style="left:2492px;top:1618px;width:400px;height:48px;line-height:48px;text-align:left;white-space:nowrap;color:#ffffff;"><span style="display:inline-block;transform:scaleX(1.043);transform-origin:left center">SoftCropper</span></div><div class="a" style="left:2532px;top:1666px;width:400px;height:48px;line-height:48px;text-align:left;white-space:nowrap;color:#c4c4c4;"><span style="display:inline-block;transform:scaleX(0.893);transform-origin:left center">SOFTCROP CC</span></div><div class="a" style="left:2532px;top:1714px;width:400px;height:48px;line-height:48px;text-align:left;white-space:nowrap;color:#c4c4c4;"><span style="display:inline-block;transform:scaleX(0.894);transform-origin:left center">SOFTCROP SL</span></div><div class="a" style="left:2532px;top:1762px;width:400px;height:48px;line-height:48px;text-align:left;white-space:nowrap;color:#c4c4c4;"><span style="display:inline-block;transform:scaleX(1.004);transform-origin:left center">softcrop SR</span></div>
</body></html>
